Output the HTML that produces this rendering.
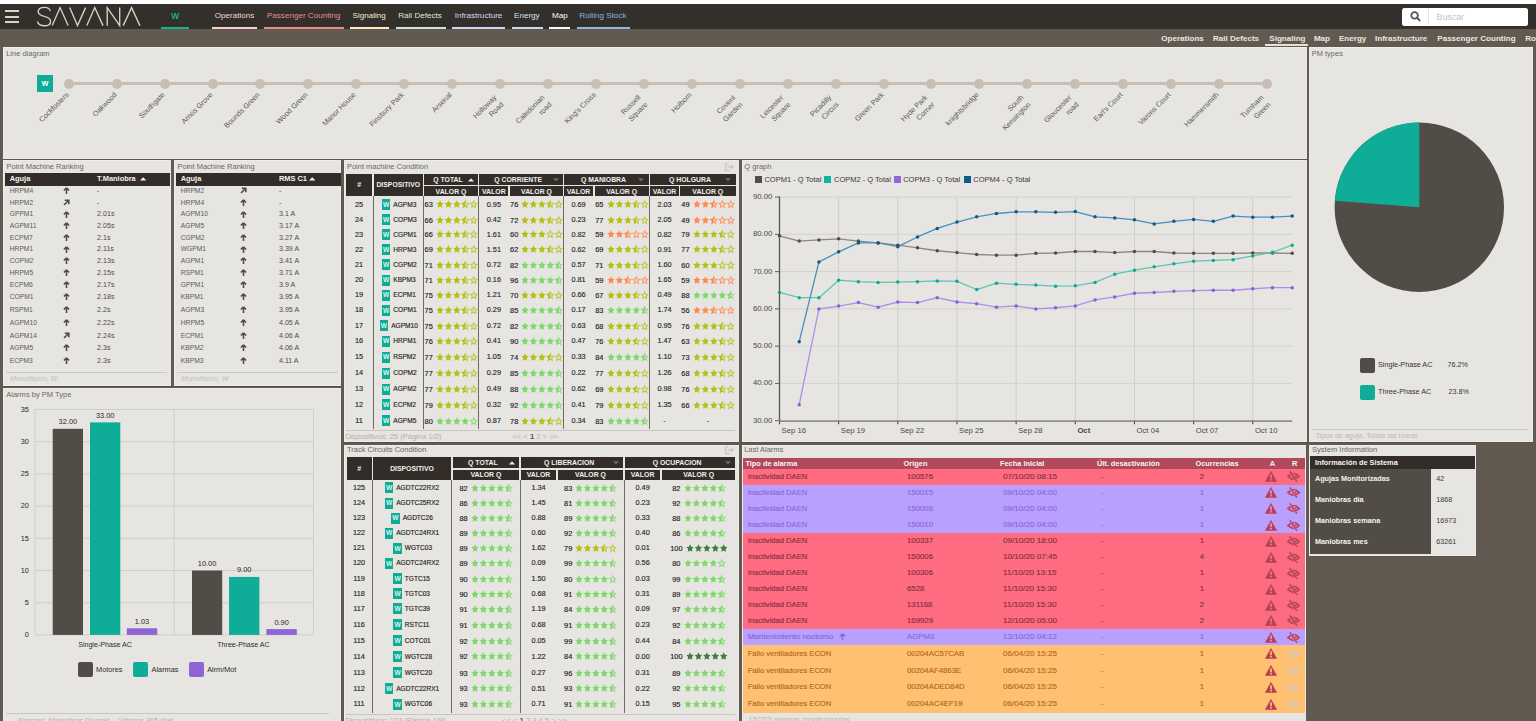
<!DOCTYPE html><html><head><meta charset="utf-8"><style>
html,body{margin:0;padding:0;}
body{width:1536px;height:721px;overflow:hidden;position:relative;background:#625a50;font-family:"Liberation Sans", sans-serif;}
.t{position:absolute;white-space:nowrap;}
.k{-webkit-text-stroke:0.15px currentColor;}
.r{position:absolute;}
.p{position:absolute;background:#e6e5e1;box-shadow:inset 1px 1px 0 #efeeea, inset -1px -1px 0 #ecebe7, 0 1px 0 #5b534a;overflow:hidden;}
svg{position:absolute;overflow:visible;}
</style></head><body>
<div class="r" style="left:0.00px;top:0.00px;width:1536.00px;height:4.00px;background:#ffffff;"></div>
<div class="r" style="left:0.00px;top:4.00px;width:1536.00px;height:25.00px;background:#332f2a;"></div>
<div class="r" style="left:5.00px;top:10.20px;width:14.00px;height:2.00px;background:#d9d3c9;"></div>
<div class="r" style="left:5.00px;top:15.60px;width:14.00px;height:2.00px;background:#d9d3c9;"></div>
<div class="r" style="left:5.00px;top:20.60px;width:14.00px;height:2.00px;background:#d9d3c9;"></div>
<svg style="left:0;top:0" width="160" height="30" viewBox="0 0 160 30">
<g fill="none" stroke="#d6d2ca" stroke-width="1.35" stroke-linejoin="miter" stroke-linecap="butt">
<path d="M50.3,11.2 C49.6,8.3 47.3,7.4 44.4,7.4 C40.6,7.4 38.2,9.3 38.2,11.8 C38.2,14.6 40.8,15.5 44.2,16.4 C48.4,17.5 50.6,18.6 50.6,21.4 C50.6,24.0 48.2,25.7 44.2,25.7 C40.6,25.7 38.2,24.1 37.4,21.5"/>
<path d="M52.2,25.6 L60.1,7.6 L68.1,25.6"/>
<path d="M69.7,7.6 L77.5,25.6 L85.6,7.6"/>
<path d="M86.8,25.6 L94.8,7.6 L103.0,25.6"/>
<path d="M107.2,25.8 L107.2,7.6 L119.7,25.6 L119.7,7.4"/>
<path d="M123.2,25.6 L131.6,7.6 L139.9,25.6"/>
</g></svg>
<div class="t" style="left:-24.80px;width:400px;text-align:center;top:10.60px;font-size:8.5px;line-height:10px;color:#12b294;font-weight:bold;">W</div>
<div class="r" style="left:161.40px;top:27.20px;width:27.50px;height:2.00px;background:#12b294;"></div>
<div class="t" style="left:214.70px;top:10.60px;font-size:8.1px;line-height:10px;color:#f2dada;font-weight:normal;">Operations</div>
<div class="r" style="left:211.90px;top:27.20px;width:45.30px;height:2.00px;background:#f6d0d0;"></div>
<div class="t" style="left:266.90px;top:10.60px;font-size:8.1px;line-height:10px;color:#ec8a8a;font-weight:normal;">Passenger Counting</div>
<div class="r" style="left:263.90px;top:27.20px;width:80.00px;height:2.00px;background:#ec8888;"></div>
<div class="t" style="left:352.50px;top:10.60px;font-size:8.1px;line-height:10px;color:#f2ebc4;font-weight:normal;">Signaling</div>
<div class="r" style="left:349.80px;top:27.20px;width:39.70px;height:2.00px;background:#fde9c2;"></div>
<div class="t" style="left:398.20px;top:10.60px;font-size:8.1px;line-height:10px;color:#d8ecd6;font-weight:normal;">Rail Defects</div>
<div class="r" style="left:396.00px;top:27.20px;width:49.60px;height:2.00px;background:#cfe7cf;"></div>
<div class="t" style="left:454.70px;top:10.60px;font-size:8.1px;line-height:10px;color:#dcd2f2;font-weight:normal;">Infrastructure</div>
<div class="r" style="left:451.60px;top:27.20px;width:53.40px;height:2.00px;background:#d6cdf0;"></div>
<div class="t" style="left:514.00px;top:10.60px;font-size:8.1px;line-height:10px;color:#d2e2f2;font-weight:normal;">Energy</div>
<div class="r" style="left:512.00px;top:27.20px;width:31.00px;height:2.00px;background:#c8dcf0;"></div>
<div class="t" style="left:551.90px;top:10.60px;font-size:8.1px;line-height:10px;color:#ffffff;font-weight:normal;">Map</div>
<div class="r" style="left:549.30px;top:27.20px;width:20.70px;height:2.00px;background:#f8f8f8;"></div>
<div class="t" style="left:579.20px;top:10.60px;font-size:8.1px;line-height:10px;color:#86b4e4;font-weight:normal;">Rolling Stock</div>
<div class="r" style="left:576.60px;top:27.20px;width:53.40px;height:2.00px;background:#8ab8e8;"></div>
<div class="r" style="left:1402.40px;top:7.50px;width:125.80px;height:18.40px;background:#ffffff;border-radius:2.5px;"></div>
<div class="r" style="left:1427.50px;top:8.00px;width:1.00px;height:17.40px;background:#e8e8e8;"></div>
<svg style="left:1408px;top:9px" width="16" height="16" viewBox="0 0 16 16">
<circle cx="6.6" cy="6.4" r="3.3" fill="none" stroke="#555" stroke-width="1.8"/>
<path d="M9.1,8.9 L11.6,11.4" stroke="#555" stroke-width="2" stroke-linecap="round"/></svg>
<div class="t" style="left:1436.60px;top:11.60px;font-size:8.8px;line-height:10px;color:#c4c4c4;font-weight:normal;">Buscar</div>
<div class="t" style="left:1161.30px;top:34.10px;font-size:8.05px;line-height:10px;color:#ebe7e0;font-weight:bold;">Operations</div>
<div class="t" style="left:1213.00px;top:34.10px;font-size:8.05px;line-height:10px;color:#ebe7e0;font-weight:bold;">Rail Defects</div>
<div class="t" style="left:1269.30px;top:34.10px;font-size:8.05px;line-height:10px;color:#ebe7e0;font-weight:bold;">Signaling</div>
<div class="t" style="left:1313.90px;top:34.10px;font-size:8.05px;line-height:10px;color:#ebe7e0;font-weight:bold;">Map</div>
<div class="t" style="left:1339.00px;top:34.10px;font-size:8.05px;line-height:10px;color:#ebe7e0;font-weight:bold;">Energy</div>
<div class="t" style="left:1375.00px;top:34.10px;font-size:8.05px;line-height:10px;color:#ebe7e0;font-weight:bold;">Infrastructure</div>
<div class="t" style="left:1437.30px;top:34.10px;font-size:8.05px;line-height:10px;color:#ebe7e0;font-weight:bold;">Passenger Counting</div>
<div class="t" style="left:1525.30px;top:34.10px;font-size:8.05px;line-height:10px;color:#ebe7e0;font-weight:bold;">Rolling Stock</div>
<div class="r" style="left:1265.40px;top:44.40px;width:42.50px;height:1.50px;background:#e6e2da;"></div>
<div class="p" style="left:3px;top:47px;width:1304px;height:112px;"></div>
<div class="p" style="left:1309px;top:47px;width:224px;height:395px;"></div>
<div class="p" style="left:3px;top:160px;width:168px;height:226px;"></div>
<div class="p" style="left:174px;top:160px;width:167px;height:226px;"></div>
<div class="p" style="left:344px;top:160px;width:395px;height:282px;"></div>
<div class="p" style="left:742px;top:160px;width:565px;height:282px;"></div>
<div class="p" style="left:3px;top:388px;width:338px;height:340px;"></div>
<div class="p" style="left:344px;top:445px;width:395px;height:290px;"></div>
<div class="p" style="left:742px;top:445px;width:564px;height:290px;"></div>
<div class="p" style="left:1309px;top:445px;width:167px;height:111px;"></div>
<div class="t" style="left:6.20px;top:48.50px;font-size:7.5px;line-height:10px;color:#6a6866;font-weight:normal;">Line diagram</div>
<div class="r" style="left:68.75px;top:82.40px;width:1198.25px;height:2.60px;background:#c9beb6;"></div>
<div class="r" style="left:63.75px;top:78.70px;width:10.00px;height:10.00px;background:#c9beb6;border-radius:50%;"></div>
<div class="t" style="left:-135.25px;top:91.20px;width:200px;text-align:right;font-size:7.3px;line-height:8.3px;color:#5a5855;transform-origin:100% 0;transform:rotate(-45deg);">Cockfosters</div>
<div class="r" style="left:111.68px;top:78.70px;width:10.00px;height:10.00px;background:#c9beb6;border-radius:50%;"></div>
<div class="t" style="left:-87.32px;top:91.20px;width:200px;text-align:right;font-size:7.3px;line-height:8.3px;color:#5a5855;transform-origin:100% 0;transform:rotate(-45deg);">Oakwood</div>
<div class="r" style="left:159.61px;top:78.70px;width:10.00px;height:10.00px;background:#c9beb6;border-radius:50%;"></div>
<div class="t" style="left:-39.39px;top:91.20px;width:200px;text-align:right;font-size:7.3px;line-height:8.3px;color:#5a5855;transform-origin:100% 0;transform:rotate(-45deg);">Southgate</div>
<div class="r" style="left:207.54px;top:78.70px;width:10.00px;height:10.00px;background:#c9beb6;border-radius:50%;"></div>
<div class="t" style="left:8.54px;top:91.20px;width:200px;text-align:right;font-size:7.3px;line-height:8.3px;color:#5a5855;transform-origin:100% 0;transform:rotate(-45deg);">Arnos Grove</div>
<div class="r" style="left:255.47px;top:78.70px;width:10.00px;height:10.00px;background:#c9beb6;border-radius:50%;"></div>
<div class="t" style="left:56.47px;top:91.20px;width:200px;text-align:right;font-size:7.3px;line-height:8.3px;color:#5a5855;transform-origin:100% 0;transform:rotate(-45deg);">Bounds Green</div>
<div class="r" style="left:303.40px;top:78.70px;width:10.00px;height:10.00px;background:#c9beb6;border-radius:50%;"></div>
<div class="t" style="left:104.40px;top:91.20px;width:200px;text-align:right;font-size:7.3px;line-height:8.3px;color:#5a5855;transform-origin:100% 0;transform:rotate(-45deg);">Wood Green</div>
<div class="r" style="left:351.33px;top:78.70px;width:10.00px;height:10.00px;background:#c9beb6;border-radius:50%;"></div>
<div class="t" style="left:152.33px;top:91.20px;width:200px;text-align:right;font-size:7.3px;line-height:8.3px;color:#5a5855;transform-origin:100% 0;transform:rotate(-45deg);">Manor House</div>
<div class="r" style="left:399.26px;top:78.70px;width:10.00px;height:10.00px;background:#c9beb6;border-radius:50%;"></div>
<div class="t" style="left:200.26px;top:91.20px;width:200px;text-align:right;font-size:7.3px;line-height:8.3px;color:#5a5855;transform-origin:100% 0;transform:rotate(-45deg);">Finsbury Park</div>
<div class="r" style="left:447.19px;top:78.70px;width:10.00px;height:10.00px;background:#c9beb6;border-radius:50%;"></div>
<div class="t" style="left:248.19px;top:91.20px;width:200px;text-align:right;font-size:7.3px;line-height:8.3px;color:#5a5855;transform-origin:100% 0;transform:rotate(-45deg);">Arsenal</div>
<div class="r" style="left:495.12px;top:78.70px;width:10.00px;height:10.00px;background:#c9beb6;border-radius:50%;"></div>
<div class="t" style="left:291.77px;top:92.65px;width:200px;text-align:right;font-size:7.3px;line-height:10.4px;color:#5a5855;transform-origin:100% 0;transform:rotate(-45deg);">Holloway<br>Road</div>
<div class="r" style="left:543.05px;top:78.70px;width:10.00px;height:10.00px;background:#c9beb6;border-radius:50%;"></div>
<div class="t" style="left:339.70px;top:92.65px;width:200px;text-align:right;font-size:7.3px;line-height:10.4px;color:#5a5855;transform-origin:100% 0;transform:rotate(-45deg);">Caledonian<br>road</div>
<div class="r" style="left:590.98px;top:78.70px;width:10.00px;height:10.00px;background:#c9beb6;border-radius:50%;"></div>
<div class="t" style="left:391.98px;top:91.20px;width:200px;text-align:right;font-size:7.3px;line-height:8.3px;color:#5a5855;transform-origin:100% 0;transform:rotate(-45deg);">King's Cross</div>
<div class="r" style="left:638.91px;top:78.70px;width:10.00px;height:10.00px;background:#c9beb6;border-radius:50%;"></div>
<div class="t" style="left:435.56px;top:92.65px;width:200px;text-align:right;font-size:7.3px;line-height:10.4px;color:#5a5855;transform-origin:100% 0;transform:rotate(-45deg);">Russell<br>Square</div>
<div class="r" style="left:686.84px;top:78.70px;width:10.00px;height:10.00px;background:#c9beb6;border-radius:50%;"></div>
<div class="t" style="left:487.84px;top:91.20px;width:200px;text-align:right;font-size:7.3px;line-height:8.3px;color:#5a5855;transform-origin:100% 0;transform:rotate(-45deg);">Holborn</div>
<div class="r" style="left:734.77px;top:78.70px;width:10.00px;height:10.00px;background:#c9beb6;border-radius:50%;"></div>
<div class="t" style="left:531.42px;top:92.65px;width:200px;text-align:right;font-size:7.3px;line-height:10.4px;color:#5a5855;transform-origin:100% 0;transform:rotate(-45deg);">Covent<br>Garden</div>
<div class="r" style="left:782.70px;top:78.70px;width:10.00px;height:10.00px;background:#c9beb6;border-radius:50%;"></div>
<div class="t" style="left:579.35px;top:92.65px;width:200px;text-align:right;font-size:7.3px;line-height:10.4px;color:#5a5855;transform-origin:100% 0;transform:rotate(-45deg);">Leicester<br>Square</div>
<div class="r" style="left:830.63px;top:78.70px;width:10.00px;height:10.00px;background:#c9beb6;border-radius:50%;"></div>
<div class="t" style="left:627.28px;top:92.65px;width:200px;text-align:right;font-size:7.3px;line-height:10.4px;color:#5a5855;transform-origin:100% 0;transform:rotate(-45deg);">Picadilly<br>Circus</div>
<div class="r" style="left:878.56px;top:78.70px;width:10.00px;height:10.00px;background:#c9beb6;border-radius:50%;"></div>
<div class="t" style="left:679.56px;top:91.20px;width:200px;text-align:right;font-size:7.3px;line-height:8.3px;color:#5a5855;transform-origin:100% 0;transform:rotate(-45deg);">Green Park</div>
<div class="r" style="left:926.49px;top:78.70px;width:10.00px;height:10.00px;background:#c9beb6;border-radius:50%;"></div>
<div class="t" style="left:723.14px;top:92.65px;width:200px;text-align:right;font-size:7.3px;line-height:10.4px;color:#5a5855;transform-origin:100% 0;transform:rotate(-45deg);">Hyde Park<br>Corner</div>
<div class="r" style="left:974.42px;top:78.70px;width:10.00px;height:10.00px;background:#c9beb6;border-radius:50%;"></div>
<div class="t" style="left:775.42px;top:91.20px;width:200px;text-align:right;font-size:7.3px;line-height:8.3px;color:#5a5855;transform-origin:100% 0;transform:rotate(-45deg);">knightsbridge</div>
<div class="r" style="left:1022.35px;top:78.70px;width:10.00px;height:10.00px;background:#c9beb6;border-radius:50%;"></div>
<div class="t" style="left:819.00px;top:92.65px;width:200px;text-align:right;font-size:7.3px;line-height:10.4px;color:#5a5855;transform-origin:100% 0;transform:rotate(-45deg);">South<br>Kensington</div>
<div class="r" style="left:1070.28px;top:78.70px;width:10.00px;height:10.00px;background:#c9beb6;border-radius:50%;"></div>
<div class="t" style="left:866.93px;top:92.65px;width:200px;text-align:right;font-size:7.3px;line-height:10.4px;color:#5a5855;transform-origin:100% 0;transform:rotate(-45deg);">Gloucester<br>road</div>
<div class="r" style="left:1118.21px;top:78.70px;width:10.00px;height:10.00px;background:#c9beb6;border-radius:50%;"></div>
<div class="t" style="left:919.21px;top:91.20px;width:200px;text-align:right;font-size:7.3px;line-height:8.3px;color:#5a5855;transform-origin:100% 0;transform:rotate(-45deg);">Earl's Court</div>
<div class="r" style="left:1166.14px;top:78.70px;width:10.00px;height:10.00px;background:#c9beb6;border-radius:50%;"></div>
<div class="t" style="left:967.14px;top:91.20px;width:200px;text-align:right;font-size:7.3px;line-height:8.3px;color:#5a5855;transform-origin:100% 0;transform:rotate(-45deg);">Varons Court</div>
<div class="r" style="left:1214.07px;top:78.70px;width:10.00px;height:10.00px;background:#c9beb6;border-radius:50%;"></div>
<div class="t" style="left:1015.07px;top:91.20px;width:200px;text-align:right;font-size:7.3px;line-height:8.3px;color:#5a5855;transform-origin:100% 0;transform:rotate(-45deg);">Hammersmith</div>
<div class="r" style="left:1262.00px;top:78.70px;width:10.00px;height:10.00px;background:#c9beb6;border-radius:50%;"></div>
<div class="t" style="left:1058.65px;top:92.65px;width:200px;text-align:right;font-size:7.3px;line-height:10.4px;color:#5a5855;transform-origin:100% 0;transform:rotate(-45deg);">Turnham<br>Green</div>
<div class="r" style="left:37.00px;top:74.60px;width:16.00px;height:17.00px;background:#10ab95;"></div>
<div class="t" style="left:-155.00px;width:400px;text-align:center;top:78.30px;font-size:8.5px;line-height:10px;color:#ffffff;font-weight:bold;">w</div>
<div class="t" style="left:1311.70px;top:48.70px;font-size:7.5px;line-height:10px;color:#6a6866;font-weight:normal;">PM types</div>
<svg style="left:0;top:0" width="1536" height="721"><circle cx="1419.3" cy="207.2" r="84.7" fill="#524c46"/><path d="M1419.3,207.2 L1419.3,122.49999999999999 A84.7,84.7 0 0 0 1334.84,200.82 Z" fill="#0fac97"/></svg>
<div class="r" style="left:1360.30px;top:357.50px;width:15.00px;height:15.00px;background:#524c46;border-radius:2px;"></div>
<div class="r" style="left:1360.30px;top:384.60px;width:15.00px;height:15.00px;background:#0fac97;border-radius:2px;"></div>
<div class="t" style="left:1378.00px;top:359.80px;font-size:7.2px;line-height:10px;color:#333;font-weight:normal;">Single-Phase AC</div>
<div class="t" style="left:1447.50px;top:359.80px;font-size:7.2px;line-height:10px;color:#333;font-weight:normal;">76.2%</div>
<div class="t" style="left:1378.00px;top:386.90px;font-size:7.2px;line-height:10px;color:#333;font-weight:normal;">Three-Phase AC</div>
<div class="t" style="left:1448.50px;top:386.90px;font-size:7.2px;line-height:10px;color:#333;font-weight:normal;">23.8%</div>
<div class="r" style="left:1312.00px;top:428.60px;width:216.00px;height:1.00px;background:#c9c7c2;"></div>
<div class="t" style="left:1315.50px;top:431.30px;font-size:7.2px;line-height:10px;color:#bcb9b4;font-weight:normal;">Tipos de aguja, Todas las líneas</div>
<div class="t" style="left:6.50px;top:161.90px;font-size:7.5px;line-height:10px;color:#6a6866;font-weight:normal;">Point Machine Ranking</div>
<div class="r" style="left:5.00px;top:173.10px;width:165.00px;height:12.50px;background:#322d28;"></div>
<div class="t" style="left:9.75px;top:174.30px;font-size:7.4px;line-height:10px;color:#f4f2ee;font-weight:bold;">Aguja</div>
<div class="t" style="left:97.10px;top:174.30px;font-size:7.4px;line-height:10px;color:#f4f2ee;font-weight:bold;">T.Maniobra</div>
<div class="t" style="left:9.75px;top:185.60px;font-size:6.7px;line-height:10px;color:#5c5a57;font-weight:normal;">HRPM4</div>
<div style="position:absolute;left:62.50px;top:186.80px;"><svg width="7" height="8" viewBox="0 0 7 8" style="position:static;display:block"><path d="M3.5,0.9 L6.1,3.5 M3.5,0.9 L0.9,3.5 M3.5,1.1 L3.5,6.9" stroke="#504c48" stroke-width="1.55" fill="none"/></svg></div>
<div class="t" style="left:97.10px;top:185.60px;font-size:7.1px;line-height:10px;color:#4e4c49;font-weight:normal;">-</div>
<div class="t" style="left:9.75px;top:197.50px;font-size:6.7px;line-height:10px;color:#5c5a57;font-weight:normal;">HRPM2</div>
<div style="position:absolute;left:62.50px;top:198.70px;"><svg width="7" height="7" viewBox="0 0 7 7" style="position:static;display:block"><path d="M1,6 L5.8,1.2 M1.8,1.2 L5.8,1.2 L5.8,5.2" stroke="#4d4a46" stroke-width="1.6" fill="none"/></svg></div>
<div class="t" style="left:97.10px;top:197.50px;font-size:7.1px;line-height:10px;color:#4e4c49;font-weight:normal;">-</div>
<div class="t" style="left:9.75px;top:209.40px;font-size:6.7px;line-height:10px;color:#5c5a57;font-weight:normal;">GPPM1</div>
<div style="position:absolute;left:62.50px;top:210.60px;"><svg width="7" height="8" viewBox="0 0 7 8" style="position:static;display:block"><path d="M3.5,0.9 L6.1,3.5 M3.5,0.9 L0.9,3.5 M3.5,1.1 L3.5,6.9" stroke="#504c48" stroke-width="1.55" fill="none"/></svg></div>
<div class="t" style="left:97.10px;top:209.40px;font-size:7.1px;line-height:10px;color:#4e4c49;font-weight:normal;">2.01s</div>
<div class="t" style="left:9.75px;top:220.90px;font-size:6.7px;line-height:10px;color:#5c5a57;font-weight:normal;">AGPM11</div>
<div style="position:absolute;left:62.50px;top:222.10px;"><svg width="7" height="8" viewBox="0 0 7 8" style="position:static;display:block"><path d="M3.5,0.9 L6.1,3.5 M3.5,0.9 L0.9,3.5 M3.5,1.1 L3.5,6.9" stroke="#504c48" stroke-width="1.55" fill="none"/></svg></div>
<div class="t" style="left:97.10px;top:220.90px;font-size:7.1px;line-height:10px;color:#4e4c49;font-weight:normal;">2.05s</div>
<div class="t" style="left:9.75px;top:232.50px;font-size:6.7px;line-height:10px;color:#5c5a57;font-weight:normal;">ECPM7</div>
<div style="position:absolute;left:62.50px;top:233.70px;"><svg width="7" height="8" viewBox="0 0 7 8" style="position:static;display:block"><path d="M3.5,0.9 L6.1,3.5 M3.5,0.9 L0.9,3.5 M3.5,1.1 L3.5,6.9" stroke="#504c48" stroke-width="1.55" fill="none"/></svg></div>
<div class="t" style="left:97.10px;top:232.50px;font-size:7.1px;line-height:10px;color:#4e4c49;font-weight:normal;">2.1s</div>
<div class="t" style="left:9.75px;top:244.40px;font-size:6.7px;line-height:10px;color:#5c5a57;font-weight:normal;">HRPM1</div>
<div style="position:absolute;left:62.50px;top:245.60px;"><svg width="7" height="8" viewBox="0 0 7 8" style="position:static;display:block"><path d="M3.5,0.9 L6.1,3.5 M3.5,0.9 L0.9,3.5 M3.5,1.1 L3.5,6.9" stroke="#504c48" stroke-width="1.55" fill="none"/></svg></div>
<div class="t" style="left:97.10px;top:244.40px;font-size:7.1px;line-height:10px;color:#4e4c49;font-weight:normal;">2.11s</div>
<div class="t" style="left:9.75px;top:256.25px;font-size:6.7px;line-height:10px;color:#5c5a57;font-weight:normal;">COPM2</div>
<div style="position:absolute;left:62.50px;top:257.45px;"><svg width="7" height="8" viewBox="0 0 7 8" style="position:static;display:block"><path d="M3.5,0.9 L6.1,3.5 M3.5,0.9 L0.9,3.5 M3.5,1.1 L3.5,6.9" stroke="#504c48" stroke-width="1.55" fill="none"/></svg></div>
<div class="t" style="left:97.10px;top:256.25px;font-size:7.1px;line-height:10px;color:#4e4c49;font-weight:normal;">2.13s</div>
<div class="t" style="left:9.75px;top:268.10px;font-size:6.7px;line-height:10px;color:#5c5a57;font-weight:normal;">HRPM5</div>
<div style="position:absolute;left:62.50px;top:269.30px;"><svg width="7" height="8" viewBox="0 0 7 8" style="position:static;display:block"><path d="M3.5,0.9 L6.1,3.5 M3.5,0.9 L0.9,3.5 M3.5,1.1 L3.5,6.9" stroke="#504c48" stroke-width="1.55" fill="none"/></svg></div>
<div class="t" style="left:97.10px;top:268.10px;font-size:7.1px;line-height:10px;color:#4e4c49;font-weight:normal;">2.15s</div>
<div class="t" style="left:9.75px;top:279.75px;font-size:6.7px;line-height:10px;color:#5c5a57;font-weight:normal;">ECPM6</div>
<div style="position:absolute;left:62.50px;top:280.95px;"><svg width="7" height="8" viewBox="0 0 7 8" style="position:static;display:block"><path d="M3.5,0.9 L6.1,3.5 M3.5,0.9 L0.9,3.5 M3.5,1.1 L3.5,6.9" stroke="#504c48" stroke-width="1.55" fill="none"/></svg></div>
<div class="t" style="left:97.10px;top:279.75px;font-size:7.1px;line-height:10px;color:#4e4c49;font-weight:normal;">2.17s</div>
<div class="t" style="left:9.75px;top:292.25px;font-size:6.7px;line-height:10px;color:#5c5a57;font-weight:normal;">COPM1</div>
<div style="position:absolute;left:62.50px;top:293.45px;"><svg width="7" height="8" viewBox="0 0 7 8" style="position:static;display:block"><path d="M3.5,0.9 L6.1,3.5 M3.5,0.9 L0.9,3.5 M3.5,1.1 L3.5,6.9" stroke="#504c48" stroke-width="1.55" fill="none"/></svg></div>
<div class="t" style="left:97.10px;top:292.25px;font-size:7.1px;line-height:10px;color:#4e4c49;font-weight:normal;">2.18s</div>
<div class="t" style="left:9.75px;top:305.00px;font-size:6.7px;line-height:10px;color:#5c5a57;font-weight:normal;">RSPM1</div>
<div style="position:absolute;left:62.50px;top:306.20px;"><svg width="7" height="8" viewBox="0 0 7 8" style="position:static;display:block"><path d="M3.5,0.9 L6.1,3.5 M3.5,0.9 L0.9,3.5 M3.5,1.1 L3.5,6.9" stroke="#504c48" stroke-width="1.55" fill="none"/></svg></div>
<div class="t" style="left:97.10px;top:305.00px;font-size:7.1px;line-height:10px;color:#4e4c49;font-weight:normal;">2.2s</div>
<div class="t" style="left:9.75px;top:317.60px;font-size:6.7px;line-height:10px;color:#5c5a57;font-weight:normal;">AGPM10</div>
<div style="position:absolute;left:62.50px;top:318.80px;"><svg width="7" height="8" viewBox="0 0 7 8" style="position:static;display:block"><path d="M3.5,0.9 L6.1,3.5 M3.5,0.9 L0.9,3.5 M3.5,1.1 L3.5,6.9" stroke="#504c48" stroke-width="1.55" fill="none"/></svg></div>
<div class="t" style="left:97.10px;top:317.60px;font-size:7.1px;line-height:10px;color:#4e4c49;font-weight:normal;">2.22s</div>
<div class="t" style="left:9.75px;top:330.50px;font-size:6.7px;line-height:10px;color:#5c5a57;font-weight:normal;">AGPM14</div>
<div style="position:absolute;left:62.50px;top:331.70px;"><svg width="7" height="7" viewBox="0 0 7 7" style="position:static;display:block"><path d="M1,6 L5.8,1.2 M1.8,1.2 L5.8,1.2 L5.8,5.2" stroke="#4d4a46" stroke-width="1.6" fill="none"/></svg></div>
<div class="t" style="left:97.10px;top:330.50px;font-size:7.1px;line-height:10px;color:#4e4c49;font-weight:normal;">2.24s</div>
<div class="t" style="left:9.75px;top:343.00px;font-size:6.7px;line-height:10px;color:#5c5a57;font-weight:normal;">AGPM5</div>
<div style="position:absolute;left:62.50px;top:344.20px;"><svg width="7" height="8" viewBox="0 0 7 8" style="position:static;display:block"><path d="M3.5,0.9 L6.1,3.5 M3.5,0.9 L0.9,3.5 M3.5,1.1 L3.5,6.9" stroke="#504c48" stroke-width="1.55" fill="none"/></svg></div>
<div class="t" style="left:97.10px;top:343.00px;font-size:7.1px;line-height:10px;color:#4e4c49;font-weight:normal;">2.3s</div>
<div class="t" style="left:9.75px;top:355.60px;font-size:6.7px;line-height:10px;color:#5c5a57;font-weight:normal;">ECPM3</div>
<div style="position:absolute;left:62.50px;top:356.80px;"><svg width="7" height="8" viewBox="0 0 7 8" style="position:static;display:block"><path d="M3.5,0.9 L6.1,3.5 M3.5,0.9 L0.9,3.5 M3.5,1.1 L3.5,6.9" stroke="#504c48" stroke-width="1.55" fill="none"/></svg></div>
<div class="t" style="left:97.10px;top:355.60px;font-size:7.1px;line-height:10px;color:#4e4c49;font-weight:normal;">2.3s</div>
<div class="r" style="left:6.00px;top:372.00px;width:161.00px;height:1.00px;background:#c9c7c2;"></div>
<div class="t" style="left:10.00px;top:374.00px;font-size:7.2px;line-height:10px;color:#c2bfba;font-weight:normal;"><i>Monofásico, W</i></div>
<div class="t" style="left:177.50px;top:161.90px;font-size:7.5px;line-height:10px;color:#6a6866;font-weight:normal;">Point Machine Ranking</div>
<div class="r" style="left:176.00px;top:173.10px;width:164.80px;height:12.50px;background:#322d28;"></div>
<div class="t" style="left:180.75px;top:174.30px;font-size:7.4px;line-height:10px;color:#f4f2ee;font-weight:bold;">Aguja</div>
<div class="t" style="left:279.00px;top:174.30px;font-size:7.4px;line-height:10px;color:#f4f2ee;font-weight:bold;">RMS C1</div>
<div class="t" style="left:180.75px;top:185.60px;font-size:6.7px;line-height:10px;color:#5c5a57;font-weight:normal;">HRPM2</div>
<div style="position:absolute;left:240.25px;top:186.80px;"><svg width="7" height="7" viewBox="0 0 7 7" style="position:static;display:block"><path d="M1,6 L5.8,1.2 M1.8,1.2 L5.8,1.2 L5.8,5.2" stroke="#4d4a46" stroke-width="1.6" fill="none"/></svg></div>
<div class="t" style="left:279.00px;top:185.60px;font-size:7.1px;line-height:10px;color:#4e4c49;font-weight:normal;">-</div>
<div class="t" style="left:180.75px;top:197.50px;font-size:6.7px;line-height:10px;color:#5c5a57;font-weight:normal;">HRPM4</div>
<div style="position:absolute;left:240.25px;top:198.70px;"><svg width="7" height="8" viewBox="0 0 7 8" style="position:static;display:block"><path d="M3.5,0.9 L6.1,3.5 M3.5,0.9 L0.9,3.5 M3.5,1.1 L3.5,6.9" stroke="#504c48" stroke-width="1.55" fill="none"/></svg></div>
<div class="t" style="left:279.00px;top:197.50px;font-size:7.1px;line-height:10px;color:#4e4c49;font-weight:normal;">-</div>
<div class="t" style="left:180.75px;top:209.40px;font-size:6.7px;line-height:10px;color:#5c5a57;font-weight:normal;">AGPM10</div>
<div style="position:absolute;left:240.25px;top:210.60px;"><svg width="7" height="8" viewBox="0 0 7 8" style="position:static;display:block"><path d="M3.5,0.9 L6.1,3.5 M3.5,0.9 L0.9,3.5 M3.5,1.1 L3.5,6.9" stroke="#504c48" stroke-width="1.55" fill="none"/></svg></div>
<div class="t" style="left:279.00px;top:209.40px;font-size:7.1px;line-height:10px;color:#4e4c49;font-weight:normal;">3.1 A</div>
<div class="t" style="left:180.75px;top:220.90px;font-size:6.7px;line-height:10px;color:#5c5a57;font-weight:normal;">AGPM5</div>
<div style="position:absolute;left:240.25px;top:222.10px;"><svg width="7" height="8" viewBox="0 0 7 8" style="position:static;display:block"><path d="M3.5,0.9 L6.1,3.5 M3.5,0.9 L0.9,3.5 M3.5,1.1 L3.5,6.9" stroke="#504c48" stroke-width="1.55" fill="none"/></svg></div>
<div class="t" style="left:279.00px;top:220.90px;font-size:7.1px;line-height:10px;color:#4e4c49;font-weight:normal;">3.17 A</div>
<div class="t" style="left:180.75px;top:232.50px;font-size:6.7px;line-height:10px;color:#5c5a57;font-weight:normal;">CGPM2</div>
<div style="position:absolute;left:240.25px;top:233.70px;"><svg width="7" height="8" viewBox="0 0 7 8" style="position:static;display:block"><path d="M3.5,0.9 L6.1,3.5 M3.5,0.9 L0.9,3.5 M3.5,1.1 L3.5,6.9" stroke="#504c48" stroke-width="1.55" fill="none"/></svg></div>
<div class="t" style="left:279.00px;top:232.50px;font-size:7.1px;line-height:10px;color:#4e4c49;font-weight:normal;">3.27 A</div>
<div class="t" style="left:180.75px;top:244.40px;font-size:6.7px;line-height:10px;color:#5c5a57;font-weight:normal;">WGPM1</div>
<div style="position:absolute;left:240.25px;top:245.60px;"><svg width="7" height="8" viewBox="0 0 7 8" style="position:static;display:block"><path d="M3.5,0.9 L6.1,3.5 M3.5,0.9 L0.9,3.5 M3.5,1.1 L3.5,6.9" stroke="#504c48" stroke-width="1.55" fill="none"/></svg></div>
<div class="t" style="left:279.00px;top:244.40px;font-size:7.1px;line-height:10px;color:#4e4c49;font-weight:normal;">3.39 A</div>
<div class="t" style="left:180.75px;top:256.25px;font-size:6.7px;line-height:10px;color:#5c5a57;font-weight:normal;">AGPM1</div>
<div style="position:absolute;left:240.25px;top:257.45px;"><svg width="7" height="8" viewBox="0 0 7 8" style="position:static;display:block"><path d="M3.5,0.9 L6.1,3.5 M3.5,0.9 L0.9,3.5 M3.5,1.1 L3.5,6.9" stroke="#504c48" stroke-width="1.55" fill="none"/></svg></div>
<div class="t" style="left:279.00px;top:256.25px;font-size:7.1px;line-height:10px;color:#4e4c49;font-weight:normal;">3.41 A</div>
<div class="t" style="left:180.75px;top:268.10px;font-size:6.7px;line-height:10px;color:#5c5a57;font-weight:normal;">RSPM1</div>
<div style="position:absolute;left:240.25px;top:269.30px;"><svg width="7" height="8" viewBox="0 0 7 8" style="position:static;display:block"><path d="M3.5,0.9 L6.1,3.5 M3.5,0.9 L0.9,3.5 M3.5,1.1 L3.5,6.9" stroke="#504c48" stroke-width="1.55" fill="none"/></svg></div>
<div class="t" style="left:279.00px;top:268.10px;font-size:7.1px;line-height:10px;color:#4e4c49;font-weight:normal;">3.71 A</div>
<div class="t" style="left:180.75px;top:279.75px;font-size:6.7px;line-height:10px;color:#5c5a57;font-weight:normal;">GPPM1</div>
<div style="position:absolute;left:240.25px;top:280.95px;"><svg width="7" height="8" viewBox="0 0 7 8" style="position:static;display:block"><path d="M3.5,0.9 L6.1,3.5 M3.5,0.9 L0.9,3.5 M3.5,1.1 L3.5,6.9" stroke="#504c48" stroke-width="1.55" fill="none"/></svg></div>
<div class="t" style="left:279.00px;top:279.75px;font-size:7.1px;line-height:10px;color:#4e4c49;font-weight:normal;">3.9 A</div>
<div class="t" style="left:180.75px;top:292.25px;font-size:6.7px;line-height:10px;color:#5c5a57;font-weight:normal;">KBPM1</div>
<div style="position:absolute;left:240.25px;top:293.45px;"><svg width="7" height="8" viewBox="0 0 7 8" style="position:static;display:block"><path d="M3.5,0.9 L6.1,3.5 M3.5,0.9 L0.9,3.5 M3.5,1.1 L3.5,6.9" stroke="#504c48" stroke-width="1.55" fill="none"/></svg></div>
<div class="t" style="left:279.00px;top:292.25px;font-size:7.1px;line-height:10px;color:#4e4c49;font-weight:normal;">3.95 A</div>
<div class="t" style="left:180.75px;top:305.00px;font-size:6.7px;line-height:10px;color:#5c5a57;font-weight:normal;">AGPM3</div>
<div style="position:absolute;left:240.25px;top:306.20px;"><svg width="7" height="8" viewBox="0 0 7 8" style="position:static;display:block"><path d="M3.5,0.9 L6.1,3.5 M3.5,0.9 L0.9,3.5 M3.5,1.1 L3.5,6.9" stroke="#504c48" stroke-width="1.55" fill="none"/></svg></div>
<div class="t" style="left:279.00px;top:305.00px;font-size:7.1px;line-height:10px;color:#4e4c49;font-weight:normal;">3.95 A</div>
<div class="t" style="left:180.75px;top:317.60px;font-size:6.7px;line-height:10px;color:#5c5a57;font-weight:normal;">HRPM5</div>
<div style="position:absolute;left:240.25px;top:318.80px;"><svg width="7" height="8" viewBox="0 0 7 8" style="position:static;display:block"><path d="M3.5,0.9 L6.1,3.5 M3.5,0.9 L0.9,3.5 M3.5,1.1 L3.5,6.9" stroke="#504c48" stroke-width="1.55" fill="none"/></svg></div>
<div class="t" style="left:279.00px;top:317.60px;font-size:7.1px;line-height:10px;color:#4e4c49;font-weight:normal;">4.05 A</div>
<div class="t" style="left:180.75px;top:330.50px;font-size:6.7px;line-height:10px;color:#5c5a57;font-weight:normal;">ECPM1</div>
<div style="position:absolute;left:240.25px;top:331.70px;"><svg width="7" height="8" viewBox="0 0 7 8" style="position:static;display:block"><path d="M3.5,0.9 L6.1,3.5 M3.5,0.9 L0.9,3.5 M3.5,1.1 L3.5,6.9" stroke="#504c48" stroke-width="1.55" fill="none"/></svg></div>
<div class="t" style="left:279.00px;top:330.50px;font-size:7.1px;line-height:10px;color:#4e4c49;font-weight:normal;">4.06 A</div>
<div class="t" style="left:180.75px;top:343.00px;font-size:6.7px;line-height:10px;color:#5c5a57;font-weight:normal;">KBPM2</div>
<div style="position:absolute;left:240.25px;top:344.20px;"><svg width="7" height="8" viewBox="0 0 7 8" style="position:static;display:block"><path d="M3.5,0.9 L6.1,3.5 M3.5,0.9 L0.9,3.5 M3.5,1.1 L3.5,6.9" stroke="#504c48" stroke-width="1.55" fill="none"/></svg></div>
<div class="t" style="left:279.00px;top:343.00px;font-size:7.1px;line-height:10px;color:#4e4c49;font-weight:normal;">4.06 A</div>
<div class="t" style="left:180.75px;top:355.60px;font-size:6.7px;line-height:10px;color:#5c5a57;font-weight:normal;">KBPM3</div>
<div style="position:absolute;left:240.25px;top:356.80px;"><svg width="7" height="8" viewBox="0 0 7 8" style="position:static;display:block"><path d="M3.5,0.9 L6.1,3.5 M3.5,0.9 L0.9,3.5 M3.5,1.1 L3.5,6.9" stroke="#504c48" stroke-width="1.55" fill="none"/></svg></div>
<div class="t" style="left:279.00px;top:355.60px;font-size:7.1px;line-height:10px;color:#4e4c49;font-weight:normal;">4.11 A</div>
<div class="r" style="left:177.00px;top:372.00px;width:161.00px;height:1.00px;background:#c9c7c2;"></div>
<div class="t" style="left:181.00px;top:374.00px;font-size:7.2px;line-height:10px;color:#c2bfba;font-weight:normal;"><i>Monofásico, W</i></div>
<svg style="left:140px;top:177px" width="7" height="4" viewBox="0 0 7 4"><path d="M0,3.6 L3.2,0.2 L6.4,3.6Z" fill="#f4f2ee"/></svg>
<svg style="left:308.5px;top:177px" width="7" height="4" viewBox="0 0 7 4"><path d="M0,3.6 L3.2,0.2 L6.4,3.6Z" fill="#f4f2ee"/></svg>
<svg width="0" height="0" style="position:absolute"><defs>
<symbol id="sf" viewBox="0 0 8 8" overflow="visible"><polygon points="4.00,0.18 5.15,2.66 7.71,3.06 5.85,4.99 6.29,7.73 4.00,6.44 1.71,7.73 2.15,4.99 0.29,3.06 2.85,2.66" fill="currentColor"/></symbol>
<symbol id="se" viewBox="0 0 8 8" overflow="visible"><polygon points="4.00,0.92 4.91,3.11 7.14,3.36 5.47,4.96 5.94,7.31 4.00,6.11 2.06,7.31 2.53,4.96 0.86,3.36 3.09,3.11" fill="none" stroke="currentColor" stroke-width="1.1" opacity="0.8"/></symbol>
<clipPath id="hc"><rect x="-1" y="-1" width="5" height="10"/></clipPath>
<symbol id="sh" viewBox="0 0 8 8" overflow="visible"><polygon points="4.00,0.92 4.91,3.11 7.14,3.36 5.47,4.96 5.94,7.31 4.00,6.11 2.06,7.31 2.53,4.96 0.86,3.36 3.09,3.11" fill="none" stroke="currentColor" stroke-width="1.1" opacity="0.8"/><polygon points="4.00,0.18 5.15,2.66 7.71,3.06 5.85,4.99 6.29,7.73 4.00,6.44 1.71,7.73 2.15,4.99 0.29,3.06 2.85,2.66" fill="currentColor" clip-path="url(#hc)"/></symbol>
</defs></svg>
<div class="t" style="left:346.90px;top:162.10px;font-size:7.5px;line-height:10px;color:#6a6866;font-weight:normal;">Point machine Condition</div>
<svg style="left:724.5px;top:163px" width="9" height="8" viewBox="0 0 9 8"><path d="M0.5,0.5 L0.5,7.5 L5,7.5 M0.5,0.5 L3.5,0.5 M2.2,4 L8.2,4 M6.4,2.2 L8.2,4 L6.4,5.8" stroke="#d2c6c2" stroke-width="1.3" fill="none"/></svg>
<div class="r" style="left:346.30px;top:174.10px;width:25.60px;height:22.10px;background:#322d28;"></div>
<div class="t" style="left:159.10px;width:400px;text-align:center;top:180.35px;font-size:7px;line-height:10px;color:#f2f0ec;font-weight:bold;">#</div>
<div class="r" style="left:373.90px;top:174.10px;width:48.80px;height:22.10px;background:#322d28;"></div>
<div class="t" style="left:198.30px;width:400px;text-align:center;top:180.35px;font-size:6.85px;line-height:10px;color:#f2f0ec;font-weight:bold;">DISPOSITIVO</div>
<div class="r" style="left:424.00px;top:174.10px;width:54.00px;height:11.10px;background:#322d28;"></div>
<div class="t" style="left:248.00px;width:400px;text-align:center;top:174.85px;font-size:6.9px;line-height:10px;color:#f2f0ec;font-weight:bold;">Q TOTAL</div>
<svg style="left:467.50px;top:177.85px" width="6" height="4" viewBox="0 0 6 4"><path d="M0,3.6 L3,0.3 L6,3.6Z" fill="#f2f0ec"/></svg>
<div class="r" style="left:479.30px;top:174.10px;width:83.70px;height:11.10px;background:#322d28;"></div>
<div class="t" style="left:318.15px;width:400px;text-align:center;top:174.85px;font-size:6.9px;line-height:10px;color:#f2f0ec;font-weight:bold;">Q CORRIENTE</div>
<svg style="left:552.50px;top:178.05px" width="6" height="4" viewBox="0 0 6 4"><path d="M0,0.3 L3,3.6 L6,0.3Z" fill="#6e6963"/></svg>
<div class="r" style="left:564.30px;top:174.10px;width:84.40px;height:11.10px;background:#322d28;"></div>
<div class="t" style="left:403.50px;width:400px;text-align:center;top:174.85px;font-size:6.9px;line-height:10px;color:#f2f0ec;font-weight:bold;">Q MANIOBRA</div>
<svg style="left:638.20px;top:178.05px" width="6" height="4" viewBox="0 0 6 4"><path d="M0,0.3 L3,3.6 L6,0.3Z" fill="#6e6963"/></svg>
<div class="r" style="left:650.30px;top:174.10px;width:85.30px;height:11.10px;background:#322d28;"></div>
<div class="t" style="left:489.95px;width:400px;text-align:center;top:174.85px;font-size:6.9px;line-height:10px;color:#f2f0ec;font-weight:bold;">Q HOLGURA</div>
<svg style="left:725.10px;top:178.05px" width="6" height="4" viewBox="0 0 6 4"><path d="M0,0.3 L3,3.6 L6,0.3Z" fill="#6e6963"/></svg>
<div class="r" style="left:424.00px;top:186.40px;width:54.00px;height:9.80px;background:#322d28;"></div>
<div class="t" style="left:251.00px;width:400px;text-align:center;top:186.50px;font-size:6.9px;line-height:10px;color:#f2f0ec;font-weight:bold;">VALOR Q</div>
<div class="r" style="left:479.30px;top:186.40px;width:29.10px;height:9.80px;background:#322d28;"></div>
<div class="t" style="left:293.85px;width:400px;text-align:center;top:186.50px;font-size:6.9px;line-height:10px;color:#f2f0ec;font-weight:bold;">VALOR</div>
<div class="r" style="left:510.00px;top:186.40px;width:53.00px;height:9.80px;background:#322d28;"></div>
<div class="t" style="left:336.50px;width:400px;text-align:center;top:186.50px;font-size:6.9px;line-height:10px;color:#f2f0ec;font-weight:bold;">VALOR Q</div>
<div class="r" style="left:564.30px;top:186.40px;width:28.40px;height:9.80px;background:#322d28;"></div>
<div class="t" style="left:378.50px;width:400px;text-align:center;top:186.50px;font-size:6.9px;line-height:10px;color:#f2f0ec;font-weight:bold;">VALOR</div>
<div class="r" style="left:594.70px;top:186.40px;width:54.00px;height:9.80px;background:#322d28;"></div>
<div class="t" style="left:421.70px;width:400px;text-align:center;top:186.50px;font-size:6.9px;line-height:10px;color:#f2f0ec;font-weight:bold;">VALOR Q</div>
<div class="r" style="left:650.30px;top:186.40px;width:28.40px;height:9.80px;background:#322d28;"></div>
<div class="t" style="left:464.50px;width:400px;text-align:center;top:186.50px;font-size:6.9px;line-height:10px;color:#f2f0ec;font-weight:bold;">VALOR</div>
<div class="r" style="left:680.00px;top:186.40px;width:55.60px;height:9.80px;background:#322d28;"></div>
<div class="t" style="left:507.80px;width:400px;text-align:center;top:186.50px;font-size:6.9px;line-height:10px;color:#f2f0ec;font-weight:bold;">VALOR Q</div>
<div class="t k" style="left:159.10px;width:400px;text-align:center;top:199.50px;font-size:7.3px;line-height:10px;color:#2a2826;font-weight:normal;">25</div>
<div class="r" style="left:381.80px;top:199.00px;width:8.50px;height:11.00px;background:#10ab95;"></div>
<div class="t" style="left:186.05px;width:400px;text-align:center;top:199.70px;font-size:6.6px;line-height:10px;color:#d9f4ee;font-weight:bold;">W</div>
<div class="t k" style="left:393.30px;top:199.50px;font-size:6.6px;line-height:10px;color:#262422;font-weight:normal;">AGPM3</div>
<div class="t k" style="left:424.53px;top:200.40px;font-size:7.4px;line-height:10px;color:#1e1c1a;font-weight:normal;">63</div>
<svg style="left:435.87px;top:200.45px;color:#b6bf14" width="42" height="9"><use href="#sf" x="0.00" y="0" width="8" height="8"/><use href="#sf" x="8.43" y="0" width="8" height="8"/><use href="#sf" x="16.86" y="0" width="8" height="8"/><use href="#sh" x="25.29" y="0" width="8" height="8"/><use href="#se" x="33.72" y="0" width="8" height="8"/></svg>
<div class="t k" style="left:293.90px;width:400px;text-align:center;top:199.50px;font-size:7.3px;line-height:10px;color:#2a2826;font-weight:normal;">0.95</div>
<div class="t k" style="left:510.03px;top:200.40px;font-size:7.4px;line-height:10px;color:#1e1c1a;font-weight:normal;">76</div>
<svg style="left:521.37px;top:200.45px;color:#b6bf14" width="42" height="9"><use href="#sf" x="0.00" y="0" width="8" height="8"/><use href="#sf" x="8.43" y="0" width="8" height="8"/><use href="#sf" x="16.86" y="0" width="8" height="8"/><use href="#sh" x="25.29" y="0" width="8" height="8"/><use href="#se" x="33.72" y="0" width="8" height="8"/></svg>
<div class="t k" style="left:378.50px;width:400px;text-align:center;top:199.50px;font-size:7.3px;line-height:10px;color:#2a2826;font-weight:normal;">0.69</div>
<div class="t k" style="left:595.23px;top:200.40px;font-size:7.4px;line-height:10px;color:#1e1c1a;font-weight:normal;">65</div>
<svg style="left:606.57px;top:200.45px;color:#b6bf14" width="42" height="9"><use href="#sf" x="0.00" y="0" width="8" height="8"/><use href="#sf" x="8.43" y="0" width="8" height="8"/><use href="#sf" x="16.86" y="0" width="8" height="8"/><use href="#sh" x="25.29" y="0" width="8" height="8"/><use href="#se" x="33.72" y="0" width="8" height="8"/></svg>
<div class="t k" style="left:464.50px;width:400px;text-align:center;top:199.50px;font-size:7.3px;line-height:10px;color:#2a2826;font-weight:normal;">2.03</div>
<div class="t k" style="left:681.33px;top:200.40px;font-size:7.4px;line-height:10px;color:#1e1c1a;font-weight:normal;">49</div>
<svg style="left:692.67px;top:200.45px;color:#ff8a4a" width="42" height="9"><use href="#sf" x="0.00" y="0" width="8" height="8"/><use href="#sf" x="8.43" y="0" width="8" height="8"/><use href="#sh" x="16.86" y="0" width="8" height="8"/><use href="#se" x="25.29" y="0" width="8" height="8"/><use href="#se" x="33.72" y="0" width="8" height="8"/></svg>
<div class="t k" style="left:159.10px;width:400px;text-align:center;top:214.60px;font-size:7.3px;line-height:10px;color:#2a2826;font-weight:normal;">24</div>
<div class="r" style="left:381.80px;top:214.10px;width:8.50px;height:11.00px;background:#10ab95;"></div>
<div class="t" style="left:186.05px;width:400px;text-align:center;top:214.80px;font-size:6.6px;line-height:10px;color:#d9f4ee;font-weight:bold;">W</div>
<div class="t k" style="left:393.30px;top:214.60px;font-size:6.6px;line-height:10px;color:#262422;font-weight:normal;">COPM3</div>
<div class="t k" style="left:424.53px;top:215.50px;font-size:7.4px;line-height:10px;color:#1e1c1a;font-weight:normal;">66</div>
<svg style="left:435.87px;top:215.55px;color:#b6bf14" width="42" height="9"><use href="#sf" x="0.00" y="0" width="8" height="8"/><use href="#sf" x="8.43" y="0" width="8" height="8"/><use href="#sf" x="16.86" y="0" width="8" height="8"/><use href="#sh" x="25.29" y="0" width="8" height="8"/><use href="#se" x="33.72" y="0" width="8" height="8"/></svg>
<div class="t k" style="left:293.90px;width:400px;text-align:center;top:214.60px;font-size:7.3px;line-height:10px;color:#2a2826;font-weight:normal;">0.42</div>
<div class="t k" style="left:510.03px;top:215.50px;font-size:7.4px;line-height:10px;color:#1e1c1a;font-weight:normal;">72</div>
<svg style="left:521.37px;top:215.55px;color:#b6bf14" width="42" height="9"><use href="#sf" x="0.00" y="0" width="8" height="8"/><use href="#sf" x="8.43" y="0" width="8" height="8"/><use href="#sf" x="16.86" y="0" width="8" height="8"/><use href="#sh" x="25.29" y="0" width="8" height="8"/><use href="#se" x="33.72" y="0" width="8" height="8"/></svg>
<div class="t k" style="left:378.50px;width:400px;text-align:center;top:214.60px;font-size:7.3px;line-height:10px;color:#2a2826;font-weight:normal;">0.23</div>
<div class="t k" style="left:595.23px;top:215.50px;font-size:7.4px;line-height:10px;color:#1e1c1a;font-weight:normal;">77</div>
<svg style="left:606.57px;top:215.55px;color:#b6bf14" width="42" height="9"><use href="#sf" x="0.00" y="0" width="8" height="8"/><use href="#sf" x="8.43" y="0" width="8" height="8"/><use href="#sf" x="16.86" y="0" width="8" height="8"/><use href="#sh" x="25.29" y="0" width="8" height="8"/><use href="#se" x="33.72" y="0" width="8" height="8"/></svg>
<div class="t k" style="left:464.50px;width:400px;text-align:center;top:214.60px;font-size:7.3px;line-height:10px;color:#2a2826;font-weight:normal;">2.05</div>
<div class="t k" style="left:681.33px;top:215.50px;font-size:7.4px;line-height:10px;color:#1e1c1a;font-weight:normal;">49</div>
<svg style="left:692.67px;top:215.55px;color:#ff8a4a" width="42" height="9"><use href="#sf" x="0.00" y="0" width="8" height="8"/><use href="#sf" x="8.43" y="0" width="8" height="8"/><use href="#sh" x="16.86" y="0" width="8" height="8"/><use href="#se" x="25.29" y="0" width="8" height="8"/><use href="#se" x="33.72" y="0" width="8" height="8"/></svg>
<div class="t k" style="left:159.10px;width:400px;text-align:center;top:229.50px;font-size:7.3px;line-height:10px;color:#2a2826;font-weight:normal;">23</div>
<div class="r" style="left:381.80px;top:229.00px;width:8.50px;height:11.00px;background:#10ab95;"></div>
<div class="t" style="left:186.05px;width:400px;text-align:center;top:229.70px;font-size:6.6px;line-height:10px;color:#d9f4ee;font-weight:bold;">W</div>
<div class="t k" style="left:393.30px;top:229.50px;font-size:6.6px;line-height:10px;color:#262422;font-weight:normal;">CGPM1</div>
<div class="t k" style="left:424.53px;top:230.40px;font-size:7.4px;line-height:10px;color:#1e1c1a;font-weight:normal;">66</div>
<svg style="left:435.87px;top:230.45px;color:#b6bf14" width="42" height="9"><use href="#sf" x="0.00" y="0" width="8" height="8"/><use href="#sf" x="8.43" y="0" width="8" height="8"/><use href="#sf" x="16.86" y="0" width="8" height="8"/><use href="#sh" x="25.29" y="0" width="8" height="8"/><use href="#se" x="33.72" y="0" width="8" height="8"/></svg>
<div class="t k" style="left:293.90px;width:400px;text-align:center;top:229.50px;font-size:7.3px;line-height:10px;color:#2a2826;font-weight:normal;">1.61</div>
<div class="t k" style="left:510.03px;top:230.40px;font-size:7.4px;line-height:10px;color:#1e1c1a;font-weight:normal;">60</div>
<svg style="left:521.37px;top:230.45px;color:#b6bf14" width="42" height="9"><use href="#sf" x="0.00" y="0" width="8" height="8"/><use href="#sf" x="8.43" y="0" width="8" height="8"/><use href="#sf" x="16.86" y="0" width="8" height="8"/><use href="#se" x="25.29" y="0" width="8" height="8"/><use href="#se" x="33.72" y="0" width="8" height="8"/></svg>
<div class="t k" style="left:378.50px;width:400px;text-align:center;top:229.50px;font-size:7.3px;line-height:10px;color:#2a2826;font-weight:normal;">0.82</div>
<div class="t k" style="left:595.23px;top:230.40px;font-size:7.4px;line-height:10px;color:#1e1c1a;font-weight:normal;">59</div>
<svg style="left:606.57px;top:230.45px;color:#ff8a4a" width="42" height="9"><use href="#sf" x="0.00" y="0" width="8" height="8"/><use href="#sf" x="8.43" y="0" width="8" height="8"/><use href="#sh" x="16.86" y="0" width="8" height="8"/><use href="#se" x="25.29" y="0" width="8" height="8"/><use href="#se" x="33.72" y="0" width="8" height="8"/></svg>
<div class="t k" style="left:464.50px;width:400px;text-align:center;top:229.50px;font-size:7.3px;line-height:10px;color:#2a2826;font-weight:normal;">0.82</div>
<div class="t k" style="left:681.33px;top:230.40px;font-size:7.4px;line-height:10px;color:#1e1c1a;font-weight:normal;">79</div>
<svg style="left:692.67px;top:230.45px;color:#b6bf14" width="42" height="9"><use href="#sf" x="0.00" y="0" width="8" height="8"/><use href="#sf" x="8.43" y="0" width="8" height="8"/><use href="#sf" x="16.86" y="0" width="8" height="8"/><use href="#sh" x="25.29" y="0" width="8" height="8"/><use href="#se" x="33.72" y="0" width="8" height="8"/></svg>
<div class="t k" style="left:159.10px;width:400px;text-align:center;top:244.50px;font-size:7.3px;line-height:10px;color:#2a2826;font-weight:normal;">22</div>
<div class="r" style="left:381.80px;top:244.00px;width:8.50px;height:11.00px;background:#10ab95;"></div>
<div class="t" style="left:186.05px;width:400px;text-align:center;top:244.70px;font-size:6.6px;line-height:10px;color:#d9f4ee;font-weight:bold;">W</div>
<div class="t k" style="left:393.30px;top:244.50px;font-size:6.6px;line-height:10px;color:#262422;font-weight:normal;">HRPM3</div>
<div class="t k" style="left:424.53px;top:245.40px;font-size:7.4px;line-height:10px;color:#1e1c1a;font-weight:normal;">69</div>
<svg style="left:435.87px;top:245.45px;color:#b6bf14" width="42" height="9"><use href="#sf" x="0.00" y="0" width="8" height="8"/><use href="#sf" x="8.43" y="0" width="8" height="8"/><use href="#sf" x="16.86" y="0" width="8" height="8"/><use href="#sh" x="25.29" y="0" width="8" height="8"/><use href="#se" x="33.72" y="0" width="8" height="8"/></svg>
<div class="t k" style="left:293.90px;width:400px;text-align:center;top:244.50px;font-size:7.3px;line-height:10px;color:#2a2826;font-weight:normal;">1.51</div>
<div class="t k" style="left:510.03px;top:245.40px;font-size:7.4px;line-height:10px;color:#1e1c1a;font-weight:normal;">62</div>
<svg style="left:521.37px;top:245.45px;color:#b6bf14" width="42" height="9"><use href="#sf" x="0.00" y="0" width="8" height="8"/><use href="#sf" x="8.43" y="0" width="8" height="8"/><use href="#sf" x="16.86" y="0" width="8" height="8"/><use href="#sh" x="25.29" y="0" width="8" height="8"/><use href="#se" x="33.72" y="0" width="8" height="8"/></svg>
<div class="t k" style="left:378.50px;width:400px;text-align:center;top:244.50px;font-size:7.3px;line-height:10px;color:#2a2826;font-weight:normal;">0.62</div>
<div class="t k" style="left:595.23px;top:245.40px;font-size:7.4px;line-height:10px;color:#1e1c1a;font-weight:normal;">69</div>
<svg style="left:606.57px;top:245.45px;color:#b6bf14" width="42" height="9"><use href="#sf" x="0.00" y="0" width="8" height="8"/><use href="#sf" x="8.43" y="0" width="8" height="8"/><use href="#sf" x="16.86" y="0" width="8" height="8"/><use href="#sh" x="25.29" y="0" width="8" height="8"/><use href="#se" x="33.72" y="0" width="8" height="8"/></svg>
<div class="t k" style="left:464.50px;width:400px;text-align:center;top:244.50px;font-size:7.3px;line-height:10px;color:#2a2826;font-weight:normal;">0.91</div>
<div class="t k" style="left:681.33px;top:245.40px;font-size:7.4px;line-height:10px;color:#1e1c1a;font-weight:normal;">77</div>
<svg style="left:692.67px;top:245.45px;color:#b6bf14" width="42" height="9"><use href="#sf" x="0.00" y="0" width="8" height="8"/><use href="#sf" x="8.43" y="0" width="8" height="8"/><use href="#sf" x="16.86" y="0" width="8" height="8"/><use href="#sh" x="25.29" y="0" width="8" height="8"/><use href="#se" x="33.72" y="0" width="8" height="8"/></svg>
<div class="t k" style="left:159.10px;width:400px;text-align:center;top:259.60px;font-size:7.3px;line-height:10px;color:#2a2826;font-weight:normal;">21</div>
<div class="r" style="left:381.80px;top:259.10px;width:8.50px;height:11.00px;background:#10ab95;"></div>
<div class="t" style="left:186.05px;width:400px;text-align:center;top:259.80px;font-size:6.6px;line-height:10px;color:#d9f4ee;font-weight:bold;">W</div>
<div class="t k" style="left:393.30px;top:259.60px;font-size:6.6px;line-height:10px;color:#262422;font-weight:normal;">CGPM2</div>
<div class="t k" style="left:424.53px;top:260.50px;font-size:7.4px;line-height:10px;color:#1e1c1a;font-weight:normal;">71</div>
<svg style="left:435.87px;top:260.55px;color:#b6bf14" width="42" height="9"><use href="#sf" x="0.00" y="0" width="8" height="8"/><use href="#sf" x="8.43" y="0" width="8" height="8"/><use href="#sf" x="16.86" y="0" width="8" height="8"/><use href="#sh" x="25.29" y="0" width="8" height="8"/><use href="#se" x="33.72" y="0" width="8" height="8"/></svg>
<div class="t k" style="left:293.90px;width:400px;text-align:center;top:259.60px;font-size:7.3px;line-height:10px;color:#2a2826;font-weight:normal;">0.72</div>
<div class="t k" style="left:510.03px;top:260.50px;font-size:7.4px;line-height:10px;color:#1e1c1a;font-weight:normal;">82</div>
<svg style="left:521.37px;top:260.55px;color:#7ed86a" width="42" height="9"><use href="#sf" x="0.00" y="0" width="8" height="8"/><use href="#sf" x="8.43" y="0" width="8" height="8"/><use href="#sf" x="16.86" y="0" width="8" height="8"/><use href="#sf" x="25.29" y="0" width="8" height="8"/><use href="#sh" x="33.72" y="0" width="8" height="8"/></svg>
<div class="t k" style="left:378.50px;width:400px;text-align:center;top:259.60px;font-size:7.3px;line-height:10px;color:#2a2826;font-weight:normal;">0.57</div>
<div class="t k" style="left:595.23px;top:260.50px;font-size:7.4px;line-height:10px;color:#1e1c1a;font-weight:normal;">71</div>
<svg style="left:606.57px;top:260.55px;color:#b6bf14" width="42" height="9"><use href="#sf" x="0.00" y="0" width="8" height="8"/><use href="#sf" x="8.43" y="0" width="8" height="8"/><use href="#sf" x="16.86" y="0" width="8" height="8"/><use href="#sh" x="25.29" y="0" width="8" height="8"/><use href="#se" x="33.72" y="0" width="8" height="8"/></svg>
<div class="t k" style="left:464.50px;width:400px;text-align:center;top:259.60px;font-size:7.3px;line-height:10px;color:#2a2826;font-weight:normal;">1.60</div>
<div class="t k" style="left:681.33px;top:260.50px;font-size:7.4px;line-height:10px;color:#1e1c1a;font-weight:normal;">60</div>
<svg style="left:692.67px;top:260.55px;color:#b6bf14" width="42" height="9"><use href="#sf" x="0.00" y="0" width="8" height="8"/><use href="#sf" x="8.43" y="0" width="8" height="8"/><use href="#sf" x="16.86" y="0" width="8" height="8"/><use href="#se" x="25.29" y="0" width="8" height="8"/><use href="#se" x="33.72" y="0" width="8" height="8"/></svg>
<div class="t k" style="left:159.10px;width:400px;text-align:center;top:275.00px;font-size:7.3px;line-height:10px;color:#2a2826;font-weight:normal;">20</div>
<div class="r" style="left:381.80px;top:274.50px;width:8.50px;height:11.00px;background:#10ab95;"></div>
<div class="t" style="left:186.05px;width:400px;text-align:center;top:275.20px;font-size:6.6px;line-height:10px;color:#d9f4ee;font-weight:bold;">W</div>
<div class="t k" style="left:393.30px;top:275.00px;font-size:6.6px;line-height:10px;color:#262422;font-weight:normal;">KBPM3</div>
<div class="t k" style="left:424.53px;top:275.90px;font-size:7.4px;line-height:10px;color:#1e1c1a;font-weight:normal;">71</div>
<svg style="left:435.87px;top:275.95px;color:#b6bf14" width="42" height="9"><use href="#sf" x="0.00" y="0" width="8" height="8"/><use href="#sf" x="8.43" y="0" width="8" height="8"/><use href="#sf" x="16.86" y="0" width="8" height="8"/><use href="#sh" x="25.29" y="0" width="8" height="8"/><use href="#se" x="33.72" y="0" width="8" height="8"/></svg>
<div class="t k" style="left:293.90px;width:400px;text-align:center;top:275.00px;font-size:7.3px;line-height:10px;color:#2a2826;font-weight:normal;">0.16</div>
<div class="t k" style="left:510.03px;top:275.90px;font-size:7.4px;line-height:10px;color:#1e1c1a;font-weight:normal;">96</div>
<svg style="left:521.37px;top:275.95px;color:#7ed86a" width="42" height="9"><use href="#sf" x="0.00" y="0" width="8" height="8"/><use href="#sf" x="8.43" y="0" width="8" height="8"/><use href="#sf" x="16.86" y="0" width="8" height="8"/><use href="#sf" x="25.29" y="0" width="8" height="8"/><use href="#sh" x="33.72" y="0" width="8" height="8"/></svg>
<div class="t k" style="left:378.50px;width:400px;text-align:center;top:275.00px;font-size:7.3px;line-height:10px;color:#2a2826;font-weight:normal;">0.81</div>
<div class="t k" style="left:595.23px;top:275.90px;font-size:7.4px;line-height:10px;color:#1e1c1a;font-weight:normal;">59</div>
<svg style="left:606.57px;top:275.95px;color:#ff8a4a" width="42" height="9"><use href="#sf" x="0.00" y="0" width="8" height="8"/><use href="#sf" x="8.43" y="0" width="8" height="8"/><use href="#sh" x="16.86" y="0" width="8" height="8"/><use href="#se" x="25.29" y="0" width="8" height="8"/><use href="#se" x="33.72" y="0" width="8" height="8"/></svg>
<div class="t k" style="left:464.50px;width:400px;text-align:center;top:275.00px;font-size:7.3px;line-height:10px;color:#2a2826;font-weight:normal;">1.65</div>
<div class="t k" style="left:681.33px;top:275.90px;font-size:7.4px;line-height:10px;color:#1e1c1a;font-weight:normal;">59</div>
<svg style="left:692.67px;top:275.95px;color:#ff8a4a" width="42" height="9"><use href="#sf" x="0.00" y="0" width="8" height="8"/><use href="#sf" x="8.43" y="0" width="8" height="8"/><use href="#sh" x="16.86" y="0" width="8" height="8"/><use href="#se" x="25.29" y="0" width="8" height="8"/><use href="#se" x="33.72" y="0" width="8" height="8"/></svg>
<div class="t k" style="left:159.10px;width:400px;text-align:center;top:290.00px;font-size:7.3px;line-height:10px;color:#2a2826;font-weight:normal;">19</div>
<div class="r" style="left:381.80px;top:289.50px;width:8.50px;height:11.00px;background:#10ab95;"></div>
<div class="t" style="left:186.05px;width:400px;text-align:center;top:290.20px;font-size:6.6px;line-height:10px;color:#d9f4ee;font-weight:bold;">W</div>
<div class="t k" style="left:393.30px;top:290.00px;font-size:6.6px;line-height:10px;color:#262422;font-weight:normal;">ECPM1</div>
<div class="t k" style="left:424.53px;top:290.90px;font-size:7.4px;line-height:10px;color:#1e1c1a;font-weight:normal;">75</div>
<svg style="left:435.87px;top:290.95px;color:#b6bf14" width="42" height="9"><use href="#sf" x="0.00" y="0" width="8" height="8"/><use href="#sf" x="8.43" y="0" width="8" height="8"/><use href="#sf" x="16.86" y="0" width="8" height="8"/><use href="#sh" x="25.29" y="0" width="8" height="8"/><use href="#se" x="33.72" y="0" width="8" height="8"/></svg>
<div class="t k" style="left:293.90px;width:400px;text-align:center;top:290.00px;font-size:7.3px;line-height:10px;color:#2a2826;font-weight:normal;">1.21</div>
<div class="t k" style="left:510.03px;top:290.90px;font-size:7.4px;line-height:10px;color:#1e1c1a;font-weight:normal;">70</div>
<svg style="left:521.37px;top:290.95px;color:#b6bf14" width="42" height="9"><use href="#sf" x="0.00" y="0" width="8" height="8"/><use href="#sf" x="8.43" y="0" width="8" height="8"/><use href="#sf" x="16.86" y="0" width="8" height="8"/><use href="#sh" x="25.29" y="0" width="8" height="8"/><use href="#se" x="33.72" y="0" width="8" height="8"/></svg>
<div class="t k" style="left:378.50px;width:400px;text-align:center;top:290.00px;font-size:7.3px;line-height:10px;color:#2a2826;font-weight:normal;">0.66</div>
<div class="t k" style="left:595.23px;top:290.90px;font-size:7.4px;line-height:10px;color:#1e1c1a;font-weight:normal;">67</div>
<svg style="left:606.57px;top:290.95px;color:#b6bf14" width="42" height="9"><use href="#sf" x="0.00" y="0" width="8" height="8"/><use href="#sf" x="8.43" y="0" width="8" height="8"/><use href="#sf" x="16.86" y="0" width="8" height="8"/><use href="#sh" x="25.29" y="0" width="8" height="8"/><use href="#se" x="33.72" y="0" width="8" height="8"/></svg>
<div class="t k" style="left:464.50px;width:400px;text-align:center;top:290.00px;font-size:7.3px;line-height:10px;color:#2a2826;font-weight:normal;">0.49</div>
<div class="t k" style="left:681.33px;top:290.90px;font-size:7.4px;line-height:10px;color:#1e1c1a;font-weight:normal;">88</div>
<svg style="left:692.67px;top:290.95px;color:#7ed86a" width="42" height="9"><use href="#sf" x="0.00" y="0" width="8" height="8"/><use href="#sf" x="8.43" y="0" width="8" height="8"/><use href="#sf" x="16.86" y="0" width="8" height="8"/><use href="#sf" x="25.29" y="0" width="8" height="8"/><use href="#sh" x="33.72" y="0" width="8" height="8"/></svg>
<div class="t k" style="left:159.10px;width:400px;text-align:center;top:305.30px;font-size:7.3px;line-height:10px;color:#2a2826;font-weight:normal;">18</div>
<div class="r" style="left:381.80px;top:304.80px;width:8.50px;height:11.00px;background:#10ab95;"></div>
<div class="t" style="left:186.05px;width:400px;text-align:center;top:305.50px;font-size:6.6px;line-height:10px;color:#d9f4ee;font-weight:bold;">W</div>
<div class="t k" style="left:393.30px;top:305.30px;font-size:6.6px;line-height:10px;color:#262422;font-weight:normal;">COPM1</div>
<div class="t k" style="left:424.53px;top:306.20px;font-size:7.4px;line-height:10px;color:#1e1c1a;font-weight:normal;">75</div>
<svg style="left:435.87px;top:306.25px;color:#b6bf14" width="42" height="9"><use href="#sf" x="0.00" y="0" width="8" height="8"/><use href="#sf" x="8.43" y="0" width="8" height="8"/><use href="#sf" x="16.86" y="0" width="8" height="8"/><use href="#sh" x="25.29" y="0" width="8" height="8"/><use href="#se" x="33.72" y="0" width="8" height="8"/></svg>
<div class="t k" style="left:293.90px;width:400px;text-align:center;top:305.30px;font-size:7.3px;line-height:10px;color:#2a2826;font-weight:normal;">0.29</div>
<div class="t k" style="left:510.03px;top:306.20px;font-size:7.4px;line-height:10px;color:#1e1c1a;font-weight:normal;">85</div>
<svg style="left:521.37px;top:306.25px;color:#7ed86a" width="42" height="9"><use href="#sf" x="0.00" y="0" width="8" height="8"/><use href="#sf" x="8.43" y="0" width="8" height="8"/><use href="#sf" x="16.86" y="0" width="8" height="8"/><use href="#sf" x="25.29" y="0" width="8" height="8"/><use href="#sh" x="33.72" y="0" width="8" height="8"/></svg>
<div class="t k" style="left:378.50px;width:400px;text-align:center;top:305.30px;font-size:7.3px;line-height:10px;color:#2a2826;font-weight:normal;">0.17</div>
<div class="t k" style="left:595.23px;top:306.20px;font-size:7.4px;line-height:10px;color:#1e1c1a;font-weight:normal;">83</div>
<svg style="left:606.57px;top:306.25px;color:#7ed86a" width="42" height="9"><use href="#sf" x="0.00" y="0" width="8" height="8"/><use href="#sf" x="8.43" y="0" width="8" height="8"/><use href="#sf" x="16.86" y="0" width="8" height="8"/><use href="#sf" x="25.29" y="0" width="8" height="8"/><use href="#sh" x="33.72" y="0" width="8" height="8"/></svg>
<div class="t k" style="left:464.50px;width:400px;text-align:center;top:305.30px;font-size:7.3px;line-height:10px;color:#2a2826;font-weight:normal;">1.74</div>
<div class="t k" style="left:681.33px;top:306.20px;font-size:7.4px;line-height:10px;color:#1e1c1a;font-weight:normal;">56</div>
<svg style="left:692.67px;top:306.25px;color:#ff8a4a" width="42" height="9"><use href="#sf" x="0.00" y="0" width="8" height="8"/><use href="#sf" x="8.43" y="0" width="8" height="8"/><use href="#sh" x="16.86" y="0" width="8" height="8"/><use href="#se" x="25.29" y="0" width="8" height="8"/><use href="#se" x="33.72" y="0" width="8" height="8"/></svg>
<div class="t k" style="left:159.10px;width:400px;text-align:center;top:320.70px;font-size:7.3px;line-height:10px;color:#2a2826;font-weight:normal;">17</div>
<div class="r" style="left:379.65px;top:320.20px;width:8.50px;height:11.00px;background:#10ab95;"></div>
<div class="t" style="left:183.90px;width:400px;text-align:center;top:320.90px;font-size:6.6px;line-height:10px;color:#d9f4ee;font-weight:bold;">W</div>
<div class="t k" style="left:391.15px;top:320.70px;font-size:6.6px;line-height:10px;color:#262422;font-weight:normal;">AGPM10</div>
<div class="t k" style="left:424.53px;top:321.60px;font-size:7.4px;line-height:10px;color:#1e1c1a;font-weight:normal;">75</div>
<svg style="left:435.87px;top:321.65px;color:#b6bf14" width="42" height="9"><use href="#sf" x="0.00" y="0" width="8" height="8"/><use href="#sf" x="8.43" y="0" width="8" height="8"/><use href="#sf" x="16.86" y="0" width="8" height="8"/><use href="#sh" x="25.29" y="0" width="8" height="8"/><use href="#se" x="33.72" y="0" width="8" height="8"/></svg>
<div class="t k" style="left:293.90px;width:400px;text-align:center;top:320.70px;font-size:7.3px;line-height:10px;color:#2a2826;font-weight:normal;">0.72</div>
<div class="t k" style="left:510.03px;top:321.60px;font-size:7.4px;line-height:10px;color:#1e1c1a;font-weight:normal;">82</div>
<svg style="left:521.37px;top:321.65px;color:#7ed86a" width="42" height="9"><use href="#sf" x="0.00" y="0" width="8" height="8"/><use href="#sf" x="8.43" y="0" width="8" height="8"/><use href="#sf" x="16.86" y="0" width="8" height="8"/><use href="#sf" x="25.29" y="0" width="8" height="8"/><use href="#sh" x="33.72" y="0" width="8" height="8"/></svg>
<div class="t k" style="left:378.50px;width:400px;text-align:center;top:320.70px;font-size:7.3px;line-height:10px;color:#2a2826;font-weight:normal;">0.63</div>
<div class="t k" style="left:595.23px;top:321.60px;font-size:7.4px;line-height:10px;color:#1e1c1a;font-weight:normal;">68</div>
<svg style="left:606.57px;top:321.65px;color:#b6bf14" width="42" height="9"><use href="#sf" x="0.00" y="0" width="8" height="8"/><use href="#sf" x="8.43" y="0" width="8" height="8"/><use href="#sf" x="16.86" y="0" width="8" height="8"/><use href="#sh" x="25.29" y="0" width="8" height="8"/><use href="#se" x="33.72" y="0" width="8" height="8"/></svg>
<div class="t k" style="left:464.50px;width:400px;text-align:center;top:320.70px;font-size:7.3px;line-height:10px;color:#2a2826;font-weight:normal;">0.95</div>
<div class="t k" style="left:681.33px;top:321.60px;font-size:7.4px;line-height:10px;color:#1e1c1a;font-weight:normal;">76</div>
<svg style="left:692.67px;top:321.65px;color:#b6bf14" width="42" height="9"><use href="#sf" x="0.00" y="0" width="8" height="8"/><use href="#sf" x="8.43" y="0" width="8" height="8"/><use href="#sf" x="16.86" y="0" width="8" height="8"/><use href="#sh" x="25.29" y="0" width="8" height="8"/><use href="#se" x="33.72" y="0" width="8" height="8"/></svg>
<div class="t k" style="left:159.10px;width:400px;text-align:center;top:336.00px;font-size:7.3px;line-height:10px;color:#2a2826;font-weight:normal;">16</div>
<div class="r" style="left:381.80px;top:335.50px;width:8.50px;height:11.00px;background:#10ab95;"></div>
<div class="t" style="left:186.05px;width:400px;text-align:center;top:336.20px;font-size:6.6px;line-height:10px;color:#d9f4ee;font-weight:bold;">W</div>
<div class="t k" style="left:393.30px;top:336.00px;font-size:6.6px;line-height:10px;color:#262422;font-weight:normal;">HRPM1</div>
<div class="t k" style="left:424.53px;top:336.90px;font-size:7.4px;line-height:10px;color:#1e1c1a;font-weight:normal;">76</div>
<svg style="left:435.87px;top:336.95px;color:#b6bf14" width="42" height="9"><use href="#sf" x="0.00" y="0" width="8" height="8"/><use href="#sf" x="8.43" y="0" width="8" height="8"/><use href="#sf" x="16.86" y="0" width="8" height="8"/><use href="#sh" x="25.29" y="0" width="8" height="8"/><use href="#se" x="33.72" y="0" width="8" height="8"/></svg>
<div class="t k" style="left:293.90px;width:400px;text-align:center;top:336.00px;font-size:7.3px;line-height:10px;color:#2a2826;font-weight:normal;">0.41</div>
<div class="t k" style="left:510.03px;top:336.90px;font-size:7.4px;line-height:10px;color:#1e1c1a;font-weight:normal;">90</div>
<svg style="left:521.37px;top:336.95px;color:#7ed86a" width="42" height="9"><use href="#sf" x="0.00" y="0" width="8" height="8"/><use href="#sf" x="8.43" y="0" width="8" height="8"/><use href="#sf" x="16.86" y="0" width="8" height="8"/><use href="#sf" x="25.29" y="0" width="8" height="8"/><use href="#sh" x="33.72" y="0" width="8" height="8"/></svg>
<div class="t k" style="left:378.50px;width:400px;text-align:center;top:336.00px;font-size:7.3px;line-height:10px;color:#2a2826;font-weight:normal;">0.47</div>
<div class="t k" style="left:595.23px;top:336.90px;font-size:7.4px;line-height:10px;color:#1e1c1a;font-weight:normal;">76</div>
<svg style="left:606.57px;top:336.95px;color:#b6bf14" width="42" height="9"><use href="#sf" x="0.00" y="0" width="8" height="8"/><use href="#sf" x="8.43" y="0" width="8" height="8"/><use href="#sf" x="16.86" y="0" width="8" height="8"/><use href="#sh" x="25.29" y="0" width="8" height="8"/><use href="#se" x="33.72" y="0" width="8" height="8"/></svg>
<div class="t k" style="left:464.50px;width:400px;text-align:center;top:336.00px;font-size:7.3px;line-height:10px;color:#2a2826;font-weight:normal;">1.47</div>
<div class="t k" style="left:681.33px;top:336.90px;font-size:7.4px;line-height:10px;color:#1e1c1a;font-weight:normal;">63</div>
<svg style="left:692.67px;top:336.95px;color:#b6bf14" width="42" height="9"><use href="#sf" x="0.00" y="0" width="8" height="8"/><use href="#sf" x="8.43" y="0" width="8" height="8"/><use href="#sf" x="16.86" y="0" width="8" height="8"/><use href="#sh" x="25.29" y="0" width="8" height="8"/><use href="#se" x="33.72" y="0" width="8" height="8"/></svg>
<div class="t k" style="left:159.10px;width:400px;text-align:center;top:352.20px;font-size:7.3px;line-height:10px;color:#2a2826;font-weight:normal;">15</div>
<div class="r" style="left:381.80px;top:351.70px;width:8.50px;height:11.00px;background:#10ab95;"></div>
<div class="t" style="left:186.05px;width:400px;text-align:center;top:352.40px;font-size:6.6px;line-height:10px;color:#d9f4ee;font-weight:bold;">W</div>
<div class="t k" style="left:393.30px;top:352.20px;font-size:6.6px;line-height:10px;color:#262422;font-weight:normal;">RSPM2</div>
<div class="t k" style="left:424.53px;top:353.10px;font-size:7.4px;line-height:10px;color:#1e1c1a;font-weight:normal;">77</div>
<svg style="left:435.87px;top:353.15px;color:#b6bf14" width="42" height="9"><use href="#sf" x="0.00" y="0" width="8" height="8"/><use href="#sf" x="8.43" y="0" width="8" height="8"/><use href="#sf" x="16.86" y="0" width="8" height="8"/><use href="#sh" x="25.29" y="0" width="8" height="8"/><use href="#se" x="33.72" y="0" width="8" height="8"/></svg>
<div class="t k" style="left:293.90px;width:400px;text-align:center;top:352.20px;font-size:7.3px;line-height:10px;color:#2a2826;font-weight:normal;">1.05</div>
<div class="t k" style="left:510.03px;top:353.10px;font-size:7.4px;line-height:10px;color:#1e1c1a;font-weight:normal;">74</div>
<svg style="left:521.37px;top:353.15px;color:#b6bf14" width="42" height="9"><use href="#sf" x="0.00" y="0" width="8" height="8"/><use href="#sf" x="8.43" y="0" width="8" height="8"/><use href="#sf" x="16.86" y="0" width="8" height="8"/><use href="#sh" x="25.29" y="0" width="8" height="8"/><use href="#se" x="33.72" y="0" width="8" height="8"/></svg>
<div class="t k" style="left:378.50px;width:400px;text-align:center;top:352.20px;font-size:7.3px;line-height:10px;color:#2a2826;font-weight:normal;">0.33</div>
<div class="t k" style="left:595.23px;top:353.10px;font-size:7.4px;line-height:10px;color:#1e1c1a;font-weight:normal;">84</div>
<svg style="left:606.57px;top:353.15px;color:#7ed86a" width="42" height="9"><use href="#sf" x="0.00" y="0" width="8" height="8"/><use href="#sf" x="8.43" y="0" width="8" height="8"/><use href="#sf" x="16.86" y="0" width="8" height="8"/><use href="#sf" x="25.29" y="0" width="8" height="8"/><use href="#sh" x="33.72" y="0" width="8" height="8"/></svg>
<div class="t k" style="left:464.50px;width:400px;text-align:center;top:352.20px;font-size:7.3px;line-height:10px;color:#2a2826;font-weight:normal;">1.10</div>
<div class="t k" style="left:681.33px;top:353.10px;font-size:7.4px;line-height:10px;color:#1e1c1a;font-weight:normal;">73</div>
<svg style="left:692.67px;top:353.15px;color:#b6bf14" width="42" height="9"><use href="#sf" x="0.00" y="0" width="8" height="8"/><use href="#sf" x="8.43" y="0" width="8" height="8"/><use href="#sf" x="16.86" y="0" width="8" height="8"/><use href="#sh" x="25.29" y="0" width="8" height="8"/><use href="#se" x="33.72" y="0" width="8" height="8"/></svg>
<div class="t k" style="left:159.10px;width:400px;text-align:center;top:368.10px;font-size:7.3px;line-height:10px;color:#2a2826;font-weight:normal;">14</div>
<div class="r" style="left:381.80px;top:367.60px;width:8.50px;height:11.00px;background:#10ab95;"></div>
<div class="t" style="left:186.05px;width:400px;text-align:center;top:368.30px;font-size:6.6px;line-height:10px;color:#d9f4ee;font-weight:bold;">W</div>
<div class="t k" style="left:393.30px;top:368.10px;font-size:6.6px;line-height:10px;color:#262422;font-weight:normal;">COPM2</div>
<div class="t k" style="left:424.53px;top:369.00px;font-size:7.4px;line-height:10px;color:#1e1c1a;font-weight:normal;">77</div>
<svg style="left:435.87px;top:369.05px;color:#b6bf14" width="42" height="9"><use href="#sf" x="0.00" y="0" width="8" height="8"/><use href="#sf" x="8.43" y="0" width="8" height="8"/><use href="#sf" x="16.86" y="0" width="8" height="8"/><use href="#sh" x="25.29" y="0" width="8" height="8"/><use href="#se" x="33.72" y="0" width="8" height="8"/></svg>
<div class="t k" style="left:293.90px;width:400px;text-align:center;top:368.10px;font-size:7.3px;line-height:10px;color:#2a2826;font-weight:normal;">0.29</div>
<div class="t k" style="left:510.03px;top:369.00px;font-size:7.4px;line-height:10px;color:#1e1c1a;font-weight:normal;">85</div>
<svg style="left:521.37px;top:369.05px;color:#7ed86a" width="42" height="9"><use href="#sf" x="0.00" y="0" width="8" height="8"/><use href="#sf" x="8.43" y="0" width="8" height="8"/><use href="#sf" x="16.86" y="0" width="8" height="8"/><use href="#sf" x="25.29" y="0" width="8" height="8"/><use href="#sh" x="33.72" y="0" width="8" height="8"/></svg>
<div class="t k" style="left:378.50px;width:400px;text-align:center;top:368.10px;font-size:7.3px;line-height:10px;color:#2a2826;font-weight:normal;">0.22</div>
<div class="t k" style="left:595.23px;top:369.00px;font-size:7.4px;line-height:10px;color:#1e1c1a;font-weight:normal;">77</div>
<svg style="left:606.57px;top:369.05px;color:#b6bf14" width="42" height="9"><use href="#sf" x="0.00" y="0" width="8" height="8"/><use href="#sf" x="8.43" y="0" width="8" height="8"/><use href="#sf" x="16.86" y="0" width="8" height="8"/><use href="#sh" x="25.29" y="0" width="8" height="8"/><use href="#se" x="33.72" y="0" width="8" height="8"/></svg>
<div class="t k" style="left:464.50px;width:400px;text-align:center;top:368.10px;font-size:7.3px;line-height:10px;color:#2a2826;font-weight:normal;">1.26</div>
<div class="t k" style="left:681.33px;top:369.00px;font-size:7.4px;line-height:10px;color:#1e1c1a;font-weight:normal;">68</div>
<svg style="left:692.67px;top:369.05px;color:#b6bf14" width="42" height="9"><use href="#sf" x="0.00" y="0" width="8" height="8"/><use href="#sf" x="8.43" y="0" width="8" height="8"/><use href="#sf" x="16.86" y="0" width="8" height="8"/><use href="#sh" x="25.29" y="0" width="8" height="8"/><use href="#se" x="33.72" y="0" width="8" height="8"/></svg>
<div class="t k" style="left:159.10px;width:400px;text-align:center;top:384.00px;font-size:7.3px;line-height:10px;color:#2a2826;font-weight:normal;">13</div>
<div class="r" style="left:381.80px;top:383.50px;width:8.50px;height:11.00px;background:#10ab95;"></div>
<div class="t" style="left:186.05px;width:400px;text-align:center;top:384.20px;font-size:6.6px;line-height:10px;color:#d9f4ee;font-weight:bold;">W</div>
<div class="t k" style="left:393.30px;top:384.00px;font-size:6.6px;line-height:10px;color:#262422;font-weight:normal;">AGPM2</div>
<div class="t k" style="left:424.53px;top:384.90px;font-size:7.4px;line-height:10px;color:#1e1c1a;font-weight:normal;">77</div>
<svg style="left:435.87px;top:384.95px;color:#b6bf14" width="42" height="9"><use href="#sf" x="0.00" y="0" width="8" height="8"/><use href="#sf" x="8.43" y="0" width="8" height="8"/><use href="#sf" x="16.86" y="0" width="8" height="8"/><use href="#sh" x="25.29" y="0" width="8" height="8"/><use href="#se" x="33.72" y="0" width="8" height="8"/></svg>
<div class="t k" style="left:293.90px;width:400px;text-align:center;top:384.00px;font-size:7.3px;line-height:10px;color:#2a2826;font-weight:normal;">0.49</div>
<div class="t k" style="left:510.03px;top:384.90px;font-size:7.4px;line-height:10px;color:#1e1c1a;font-weight:normal;">88</div>
<svg style="left:521.37px;top:384.95px;color:#7ed86a" width="42" height="9"><use href="#sf" x="0.00" y="0" width="8" height="8"/><use href="#sf" x="8.43" y="0" width="8" height="8"/><use href="#sf" x="16.86" y="0" width="8" height="8"/><use href="#sf" x="25.29" y="0" width="8" height="8"/><use href="#sh" x="33.72" y="0" width="8" height="8"/></svg>
<div class="t k" style="left:378.50px;width:400px;text-align:center;top:384.00px;font-size:7.3px;line-height:10px;color:#2a2826;font-weight:normal;">0.62</div>
<div class="t k" style="left:595.23px;top:384.90px;font-size:7.4px;line-height:10px;color:#1e1c1a;font-weight:normal;">69</div>
<svg style="left:606.57px;top:384.95px;color:#b6bf14" width="42" height="9"><use href="#sf" x="0.00" y="0" width="8" height="8"/><use href="#sf" x="8.43" y="0" width="8" height="8"/><use href="#sf" x="16.86" y="0" width="8" height="8"/><use href="#sh" x="25.29" y="0" width="8" height="8"/><use href="#se" x="33.72" y="0" width="8" height="8"/></svg>
<div class="t k" style="left:464.50px;width:400px;text-align:center;top:384.00px;font-size:7.3px;line-height:10px;color:#2a2826;font-weight:normal;">0.98</div>
<div class="t k" style="left:681.33px;top:384.90px;font-size:7.4px;line-height:10px;color:#1e1c1a;font-weight:normal;">76</div>
<svg style="left:692.67px;top:384.95px;color:#b6bf14" width="42" height="9"><use href="#sf" x="0.00" y="0" width="8" height="8"/><use href="#sf" x="8.43" y="0" width="8" height="8"/><use href="#sf" x="16.86" y="0" width="8" height="8"/><use href="#sh" x="25.29" y="0" width="8" height="8"/><use href="#se" x="33.72" y="0" width="8" height="8"/></svg>
<div class="t k" style="left:159.10px;width:400px;text-align:center;top:399.80px;font-size:7.3px;line-height:10px;color:#2a2826;font-weight:normal;">12</div>
<div class="r" style="left:381.80px;top:399.30px;width:8.50px;height:11.00px;background:#10ab95;"></div>
<div class="t" style="left:186.05px;width:400px;text-align:center;top:400.00px;font-size:6.6px;line-height:10px;color:#d9f4ee;font-weight:bold;">W</div>
<div class="t k" style="left:393.30px;top:399.80px;font-size:6.6px;line-height:10px;color:#262422;font-weight:normal;">ECPM2</div>
<div class="t k" style="left:424.53px;top:400.70px;font-size:7.4px;line-height:10px;color:#1e1c1a;font-weight:normal;">79</div>
<svg style="left:435.87px;top:400.75px;color:#b6bf14" width="42" height="9"><use href="#sf" x="0.00" y="0" width="8" height="8"/><use href="#sf" x="8.43" y="0" width="8" height="8"/><use href="#sf" x="16.86" y="0" width="8" height="8"/><use href="#sh" x="25.29" y="0" width="8" height="8"/><use href="#se" x="33.72" y="0" width="8" height="8"/></svg>
<div class="t k" style="left:293.90px;width:400px;text-align:center;top:399.80px;font-size:7.3px;line-height:10px;color:#2a2826;font-weight:normal;">0.32</div>
<div class="t k" style="left:510.03px;top:400.70px;font-size:7.4px;line-height:10px;color:#1e1c1a;font-weight:normal;">92</div>
<svg style="left:521.37px;top:400.75px;color:#7ed86a" width="42" height="9"><use href="#sf" x="0.00" y="0" width="8" height="8"/><use href="#sf" x="8.43" y="0" width="8" height="8"/><use href="#sf" x="16.86" y="0" width="8" height="8"/><use href="#sf" x="25.29" y="0" width="8" height="8"/><use href="#sh" x="33.72" y="0" width="8" height="8"/></svg>
<div class="t k" style="left:378.50px;width:400px;text-align:center;top:399.80px;font-size:7.3px;line-height:10px;color:#2a2826;font-weight:normal;">0.41</div>
<div class="t k" style="left:595.23px;top:400.70px;font-size:7.4px;line-height:10px;color:#1e1c1a;font-weight:normal;">79</div>
<svg style="left:606.57px;top:400.75px;color:#b6bf14" width="42" height="9"><use href="#sf" x="0.00" y="0" width="8" height="8"/><use href="#sf" x="8.43" y="0" width="8" height="8"/><use href="#sf" x="16.86" y="0" width="8" height="8"/><use href="#sh" x="25.29" y="0" width="8" height="8"/><use href="#se" x="33.72" y="0" width="8" height="8"/></svg>
<div class="t k" style="left:464.50px;width:400px;text-align:center;top:399.80px;font-size:7.3px;line-height:10px;color:#2a2826;font-weight:normal;">1.35</div>
<div class="t k" style="left:681.33px;top:400.70px;font-size:7.4px;line-height:10px;color:#1e1c1a;font-weight:normal;">66</div>
<svg style="left:692.67px;top:400.75px;color:#b6bf14" width="42" height="9"><use href="#sf" x="0.00" y="0" width="8" height="8"/><use href="#sf" x="8.43" y="0" width="8" height="8"/><use href="#sf" x="16.86" y="0" width="8" height="8"/><use href="#sh" x="25.29" y="0" width="8" height="8"/><use href="#se" x="33.72" y="0" width="8" height="8"/></svg>
<div class="t k" style="left:159.10px;width:400px;text-align:center;top:415.70px;font-size:7.3px;line-height:10px;color:#2a2826;font-weight:normal;">11</div>
<div class="r" style="left:381.80px;top:415.20px;width:8.50px;height:11.00px;background:#10ab95;"></div>
<div class="t" style="left:186.05px;width:400px;text-align:center;top:415.90px;font-size:6.6px;line-height:10px;color:#d9f4ee;font-weight:bold;">W</div>
<div class="t k" style="left:393.30px;top:415.70px;font-size:6.6px;line-height:10px;color:#262422;font-weight:normal;">AGPM5</div>
<div class="t k" style="left:424.53px;top:416.60px;font-size:7.4px;line-height:10px;color:#1e1c1a;font-weight:normal;">80</div>
<svg style="left:435.87px;top:416.65px;color:#7ed86a" width="42" height="9"><use href="#sf" x="0.00" y="0" width="8" height="8"/><use href="#sf" x="8.43" y="0" width="8" height="8"/><use href="#sf" x="16.86" y="0" width="8" height="8"/><use href="#sf" x="25.29" y="0" width="8" height="8"/><use href="#se" x="33.72" y="0" width="8" height="8"/></svg>
<div class="t k" style="left:293.90px;width:400px;text-align:center;top:415.70px;font-size:7.3px;line-height:10px;color:#2a2826;font-weight:normal;">0.87</div>
<div class="t k" style="left:510.03px;top:416.60px;font-size:7.4px;line-height:10px;color:#1e1c1a;font-weight:normal;">78</div>
<svg style="left:521.37px;top:416.65px;color:#b6bf14" width="42" height="9"><use href="#sf" x="0.00" y="0" width="8" height="8"/><use href="#sf" x="8.43" y="0" width="8" height="8"/><use href="#sf" x="16.86" y="0" width="8" height="8"/><use href="#sh" x="25.29" y="0" width="8" height="8"/><use href="#se" x="33.72" y="0" width="8" height="8"/></svg>
<div class="t k" style="left:378.50px;width:400px;text-align:center;top:415.70px;font-size:7.3px;line-height:10px;color:#2a2826;font-weight:normal;">0.34</div>
<div class="t k" style="left:595.23px;top:416.60px;font-size:7.4px;line-height:10px;color:#1e1c1a;font-weight:normal;">83</div>
<svg style="left:606.57px;top:416.65px;color:#7ed86a" width="42" height="9"><use href="#sf" x="0.00" y="0" width="8" height="8"/><use href="#sf" x="8.43" y="0" width="8" height="8"/><use href="#sf" x="16.86" y="0" width="8" height="8"/><use href="#sf" x="25.29" y="0" width="8" height="8"/><use href="#sh" x="33.72" y="0" width="8" height="8"/></svg>
<div class="t" style="left:464.50px;width:400px;text-align:center;top:415.70px;font-size:7.3px;line-height:10px;color:#2a2826;font-weight:normal;">-</div>
<div class="t" style="left:507.80px;width:400px;text-align:center;top:415.70px;font-size:7.3px;line-height:10px;color:#2a2826;font-weight:normal;">-</div>
<div class="r" style="left:372.50px;top:196.20px;width:1.15px;height:232.60px;background:#6e6962;"></div>
<div class="r" style="left:423.10px;top:196.20px;width:1.15px;height:232.60px;background:#6e6962;"></div>
<div class="r" style="left:478.30px;top:196.20px;width:1.15px;height:232.60px;background:#6e6962;"></div>
<div class="r" style="left:563.30px;top:196.20px;width:1.15px;height:232.60px;background:#6e6962;"></div>
<div class="r" style="left:649.30px;top:196.20px;width:1.15px;height:232.60px;background:#6e6962;"></div>
<div class="r" style="left:346.00px;top:430.20px;width:389.00px;height:1.00px;background:#c9c7c2;"></div>
<div class="t" style="left:345.20px;top:432.00px;font-size:7.55px;line-height:10px;color:#b3b0ab;font-weight:normal;">Dispositivos: 25 (Página 1/2)</div>
<div class="t" style="left:512.40px;top:432.20px;font-size:7.6px;line-height:10px;color:#b5b2ad;font-weight:normal;">&lt;&lt; &lt; <b style="color:#555">1</b> 2 &gt; &gt;&gt;</div>
<div class="t" style="left:347.00px;top:445.10px;font-size:7.5px;line-height:10px;color:#6a6866;font-weight:normal;">Track Circuits Condition</div>
<svg style="left:724.5px;top:446px" width="9" height="8" viewBox="0 0 9 8"><path d="M0.5,0.5 L0.5,7.5 L5,7.5 M0.5,0.5 L3.5,0.5 M2.2,4 L8.2,4 M6.4,2.2 L8.2,4 L6.4,5.8" stroke="#d2c6c2" stroke-width="1.3" fill="none"/></svg>
<div class="r" style="left:346.50px;top:457.10px;width:25.30px;height:22.70px;background:#322d28;"></div>
<div class="t" style="left:159.15px;width:400px;text-align:center;top:463.65px;font-size:7px;line-height:10px;color:#f2f0ec;font-weight:bold;">#</div>
<div class="r" style="left:373.30px;top:457.10px;width:77.40px;height:22.70px;background:#322d28;"></div>
<div class="t" style="left:212.00px;width:400px;text-align:center;top:463.65px;font-size:6.85px;line-height:10px;color:#f2f0ec;font-weight:bold;">DISPOSITIVO</div>
<div class="r" style="left:452.50px;top:457.10px;width:66.70px;height:11.20px;background:#322d28;"></div>
<div class="t" style="left:282.85px;width:400px;text-align:center;top:457.90px;font-size:6.9px;line-height:10px;color:#f2f0ec;font-weight:bold;">Q TOTAL</div>
<svg style="left:508.70px;top:460.90px" width="6" height="4" viewBox="0 0 6 4"><path d="M0,3.6 L3,0.3 L6,3.6Z" fill="#f2f0ec"/></svg>
<div class="r" style="left:521.00px;top:457.10px;width:102.30px;height:11.20px;background:#322d28;"></div>
<div class="t" style="left:369.15px;width:400px;text-align:center;top:457.90px;font-size:6.9px;line-height:10px;color:#f2f0ec;font-weight:bold;">Q LIBERACION</div>
<svg style="left:612.80px;top:461.10px" width="6" height="4" viewBox="0 0 6 4"><path d="M0,0.3 L3,3.6 L6,0.3Z" fill="#6e6963"/></svg>
<div class="r" style="left:624.90px;top:457.10px;width:110.40px;height:11.20px;background:#322d28;"></div>
<div class="t" style="left:477.10px;width:400px;text-align:center;top:457.90px;font-size:6.9px;line-height:10px;color:#f2f0ec;font-weight:bold;">Q OCUPACION</div>
<svg style="left:724.80px;top:461.10px" width="6" height="4" viewBox="0 0 6 4"><path d="M0,0.3 L3,3.6 L6,0.3Z" fill="#6e6963"/></svg>
<div class="r" style="left:452.50px;top:469.60px;width:66.70px;height:10.20px;background:#322d28;"></div>
<div class="t" style="left:285.85px;width:400px;text-align:center;top:469.90px;font-size:6.9px;line-height:10px;color:#f2f0ec;font-weight:bold;">VALOR Q</div>
<div class="r" style="left:521.00px;top:469.60px;width:35.10px;height:10.20px;background:#322d28;"></div>
<div class="t" style="left:338.55px;width:400px;text-align:center;top:469.90px;font-size:6.9px;line-height:10px;color:#f2f0ec;font-weight:bold;">VALOR</div>
<div class="r" style="left:557.70px;top:469.60px;width:65.60px;height:10.20px;background:#322d28;"></div>
<div class="t" style="left:390.50px;width:400px;text-align:center;top:469.90px;font-size:6.9px;line-height:10px;color:#f2f0ec;font-weight:bold;">VALOR Q</div>
<div class="r" style="left:624.90px;top:469.60px;width:35.40px;height:10.20px;background:#322d28;"></div>
<div class="t" style="left:442.60px;width:400px;text-align:center;top:469.90px;font-size:6.9px;line-height:10px;color:#f2f0ec;font-weight:bold;">VALOR</div>
<div class="r" style="left:662.10px;top:469.60px;width:73.20px;height:10.20px;background:#322d28;"></div>
<div class="t" style="left:498.70px;width:400px;text-align:center;top:469.90px;font-size:6.9px;line-height:10px;color:#f2f0ec;font-weight:bold;">VALOR Q</div>
<div class="t k" style="left:159.10px;width:400px;text-align:center;top:482.90px;font-size:7.3px;line-height:10px;color:#2a2826;font-weight:normal;">125</div>
<div class="r" style="left:384.75px;top:482.40px;width:8.50px;height:11.00px;background:#10ab95;"></div>
<div class="t" style="left:189.00px;width:400px;text-align:center;top:483.10px;font-size:6.6px;line-height:10px;color:#d9f4ee;font-weight:bold;">W</div>
<div class="t k" style="left:396.25px;top:482.90px;font-size:6.55px;line-height:10px;color:#262422;font-weight:normal;">AGDTC22RX2</div>
<div class="t k" style="left:459.38px;top:483.80px;font-size:7.4px;line-height:10px;color:#1e1c1a;font-weight:normal;">82</div>
<svg style="left:470.72px;top:483.85px;color:#7ed86a" width="42" height="9"><use href="#sf" x="0.00" y="0" width="8" height="8"/><use href="#sf" x="8.43" y="0" width="8" height="8"/><use href="#sf" x="16.86" y="0" width="8" height="8"/><use href="#sf" x="25.29" y="0" width="8" height="8"/><use href="#sh" x="33.72" y="0" width="8" height="8"/></svg>
<div class="t k" style="left:338.50px;width:400px;text-align:center;top:482.90px;font-size:7.3px;line-height:10px;color:#2a2826;font-weight:normal;">1.34</div>
<div class="t k" style="left:564.03px;top:483.80px;font-size:7.4px;line-height:10px;color:#1e1c1a;font-weight:normal;">83</div>
<svg style="left:575.37px;top:483.85px;color:#7ed86a" width="42" height="9"><use href="#sf" x="0.00" y="0" width="8" height="8"/><use href="#sf" x="8.43" y="0" width="8" height="8"/><use href="#sf" x="16.86" y="0" width="8" height="8"/><use href="#sf" x="25.29" y="0" width="8" height="8"/><use href="#sh" x="33.72" y="0" width="8" height="8"/></svg>
<div class="t k" style="left:442.60px;width:400px;text-align:center;top:482.90px;font-size:7.3px;line-height:10px;color:#2a2826;font-weight:normal;">0.49</div>
<div class="t k" style="left:672.23px;top:483.80px;font-size:7.4px;line-height:10px;color:#1e1c1a;font-weight:normal;">82</div>
<svg style="left:683.57px;top:483.85px;color:#7ed86a" width="42" height="9"><use href="#sf" x="0.00" y="0" width="8" height="8"/><use href="#sf" x="8.43" y="0" width="8" height="8"/><use href="#sf" x="16.86" y="0" width="8" height="8"/><use href="#sf" x="25.29" y="0" width="8" height="8"/><use href="#sh" x="33.72" y="0" width="8" height="8"/></svg>
<div class="t k" style="left:159.10px;width:400px;text-align:center;top:498.00px;font-size:7.3px;line-height:10px;color:#2a2826;font-weight:normal;">124</div>
<div class="r" style="left:384.75px;top:497.50px;width:8.50px;height:11.00px;background:#10ab95;"></div>
<div class="t" style="left:189.00px;width:400px;text-align:center;top:498.20px;font-size:6.6px;line-height:10px;color:#d9f4ee;font-weight:bold;">W</div>
<div class="t k" style="left:396.25px;top:498.00px;font-size:6.55px;line-height:10px;color:#262422;font-weight:normal;">AGDTC25RX2</div>
<div class="t k" style="left:459.38px;top:498.90px;font-size:7.4px;line-height:10px;color:#1e1c1a;font-weight:normal;">86</div>
<svg style="left:470.72px;top:498.95px;color:#7ed86a" width="42" height="9"><use href="#sf" x="0.00" y="0" width="8" height="8"/><use href="#sf" x="8.43" y="0" width="8" height="8"/><use href="#sf" x="16.86" y="0" width="8" height="8"/><use href="#sf" x="25.29" y="0" width="8" height="8"/><use href="#sh" x="33.72" y="0" width="8" height="8"/></svg>
<div class="t k" style="left:338.50px;width:400px;text-align:center;top:498.00px;font-size:7.3px;line-height:10px;color:#2a2826;font-weight:normal;">1.45</div>
<div class="t k" style="left:564.03px;top:498.90px;font-size:7.4px;line-height:10px;color:#1e1c1a;font-weight:normal;">81</div>
<svg style="left:575.37px;top:498.95px;color:#7ed86a" width="42" height="9"><use href="#sf" x="0.00" y="0" width="8" height="8"/><use href="#sf" x="8.43" y="0" width="8" height="8"/><use href="#sf" x="16.86" y="0" width="8" height="8"/><use href="#sf" x="25.29" y="0" width="8" height="8"/><use href="#sh" x="33.72" y="0" width="8" height="8"/></svg>
<div class="t k" style="left:442.60px;width:400px;text-align:center;top:498.00px;font-size:7.3px;line-height:10px;color:#2a2826;font-weight:normal;">0.23</div>
<div class="t k" style="left:672.23px;top:498.90px;font-size:7.4px;line-height:10px;color:#1e1c1a;font-weight:normal;">92</div>
<svg style="left:683.57px;top:498.95px;color:#7ed86a" width="42" height="9"><use href="#sf" x="0.00" y="0" width="8" height="8"/><use href="#sf" x="8.43" y="0" width="8" height="8"/><use href="#sf" x="16.86" y="0" width="8" height="8"/><use href="#sf" x="25.29" y="0" width="8" height="8"/><use href="#sh" x="33.72" y="0" width="8" height="8"/></svg>
<div class="t k" style="left:159.10px;width:400px;text-align:center;top:513.10px;font-size:7.3px;line-height:10px;color:#2a2826;font-weight:normal;">123</div>
<div class="r" style="left:391.20px;top:512.60px;width:8.50px;height:11.00px;background:#10ab95;"></div>
<div class="t" style="left:195.45px;width:400px;text-align:center;top:513.30px;font-size:6.6px;line-height:10px;color:#d9f4ee;font-weight:bold;">W</div>
<div class="t k" style="left:402.70px;top:513.10px;font-size:6.55px;line-height:10px;color:#262422;font-weight:normal;">AGDTC26</div>
<div class="t k" style="left:459.38px;top:514.00px;font-size:7.4px;line-height:10px;color:#1e1c1a;font-weight:normal;">88</div>
<svg style="left:470.72px;top:514.05px;color:#7ed86a" width="42" height="9"><use href="#sf" x="0.00" y="0" width="8" height="8"/><use href="#sf" x="8.43" y="0" width="8" height="8"/><use href="#sf" x="16.86" y="0" width="8" height="8"/><use href="#sf" x="25.29" y="0" width="8" height="8"/><use href="#sh" x="33.72" y="0" width="8" height="8"/></svg>
<div class="t k" style="left:338.50px;width:400px;text-align:center;top:513.10px;font-size:7.3px;line-height:10px;color:#2a2826;font-weight:normal;">0.88</div>
<div class="t k" style="left:564.03px;top:514.00px;font-size:7.4px;line-height:10px;color:#1e1c1a;font-weight:normal;">89</div>
<svg style="left:575.37px;top:514.05px;color:#7ed86a" width="42" height="9"><use href="#sf" x="0.00" y="0" width="8" height="8"/><use href="#sf" x="8.43" y="0" width="8" height="8"/><use href="#sf" x="16.86" y="0" width="8" height="8"/><use href="#sf" x="25.29" y="0" width="8" height="8"/><use href="#sh" x="33.72" y="0" width="8" height="8"/></svg>
<div class="t k" style="left:442.60px;width:400px;text-align:center;top:513.10px;font-size:7.3px;line-height:10px;color:#2a2826;font-weight:normal;">0.33</div>
<div class="t k" style="left:672.23px;top:514.00px;font-size:7.4px;line-height:10px;color:#1e1c1a;font-weight:normal;">88</div>
<svg style="left:683.57px;top:514.05px;color:#7ed86a" width="42" height="9"><use href="#sf" x="0.00" y="0" width="8" height="8"/><use href="#sf" x="8.43" y="0" width="8" height="8"/><use href="#sf" x="16.86" y="0" width="8" height="8"/><use href="#sf" x="25.29" y="0" width="8" height="8"/><use href="#sh" x="33.72" y="0" width="8" height="8"/></svg>
<div class="t k" style="left:159.10px;width:400px;text-align:center;top:528.20px;font-size:7.3px;line-height:10px;color:#2a2826;font-weight:normal;">122</div>
<div class="r" style="left:384.75px;top:527.70px;width:8.50px;height:11.00px;background:#10ab95;"></div>
<div class="t" style="left:189.00px;width:400px;text-align:center;top:528.40px;font-size:6.6px;line-height:10px;color:#d9f4ee;font-weight:bold;">W</div>
<div class="t k" style="left:396.25px;top:528.20px;font-size:6.55px;line-height:10px;color:#262422;font-weight:normal;">AGDTC24RX1</div>
<div class="t k" style="left:459.38px;top:529.10px;font-size:7.4px;line-height:10px;color:#1e1c1a;font-weight:normal;">89</div>
<svg style="left:470.72px;top:529.15px;color:#7ed86a" width="42" height="9"><use href="#sf" x="0.00" y="0" width="8" height="8"/><use href="#sf" x="8.43" y="0" width="8" height="8"/><use href="#sf" x="16.86" y="0" width="8" height="8"/><use href="#sf" x="25.29" y="0" width="8" height="8"/><use href="#sh" x="33.72" y="0" width="8" height="8"/></svg>
<div class="t k" style="left:338.50px;width:400px;text-align:center;top:528.20px;font-size:7.3px;line-height:10px;color:#2a2826;font-weight:normal;">0.60</div>
<div class="t k" style="left:564.03px;top:529.10px;font-size:7.4px;line-height:10px;color:#1e1c1a;font-weight:normal;">92</div>
<svg style="left:575.37px;top:529.15px;color:#7ed86a" width="42" height="9"><use href="#sf" x="0.00" y="0" width="8" height="8"/><use href="#sf" x="8.43" y="0" width="8" height="8"/><use href="#sf" x="16.86" y="0" width="8" height="8"/><use href="#sf" x="25.29" y="0" width="8" height="8"/><use href="#sh" x="33.72" y="0" width="8" height="8"/></svg>
<div class="t k" style="left:442.60px;width:400px;text-align:center;top:528.20px;font-size:7.3px;line-height:10px;color:#2a2826;font-weight:normal;">0.40</div>
<div class="t k" style="left:672.23px;top:529.10px;font-size:7.4px;line-height:10px;color:#1e1c1a;font-weight:normal;">86</div>
<svg style="left:683.57px;top:529.15px;color:#7ed86a" width="42" height="9"><use href="#sf" x="0.00" y="0" width="8" height="8"/><use href="#sf" x="8.43" y="0" width="8" height="8"/><use href="#sf" x="16.86" y="0" width="8" height="8"/><use href="#sf" x="25.29" y="0" width="8" height="8"/><use href="#sh" x="33.72" y="0" width="8" height="8"/></svg>
<div class="t k" style="left:159.10px;width:400px;text-align:center;top:543.30px;font-size:7.3px;line-height:10px;color:#2a2826;font-weight:normal;">121</div>
<div class="r" style="left:393.35px;top:542.80px;width:8.50px;height:11.00px;background:#10ab95;"></div>
<div class="t" style="left:197.60px;width:400px;text-align:center;top:543.50px;font-size:6.6px;line-height:10px;color:#d9f4ee;font-weight:bold;">W</div>
<div class="t k" style="left:404.85px;top:543.30px;font-size:6.55px;line-height:10px;color:#262422;font-weight:normal;">WGTC03</div>
<div class="t k" style="left:459.38px;top:544.20px;font-size:7.4px;line-height:10px;color:#1e1c1a;font-weight:normal;">89</div>
<svg style="left:470.72px;top:544.25px;color:#7ed86a" width="42" height="9"><use href="#sf" x="0.00" y="0" width="8" height="8"/><use href="#sf" x="8.43" y="0" width="8" height="8"/><use href="#sf" x="16.86" y="0" width="8" height="8"/><use href="#sf" x="25.29" y="0" width="8" height="8"/><use href="#sh" x="33.72" y="0" width="8" height="8"/></svg>
<div class="t k" style="left:338.50px;width:400px;text-align:center;top:543.30px;font-size:7.3px;line-height:10px;color:#2a2826;font-weight:normal;">1.62</div>
<div class="t k" style="left:564.03px;top:544.20px;font-size:7.4px;line-height:10px;color:#1e1c1a;font-weight:normal;">79</div>
<svg style="left:575.37px;top:544.25px;color:#b6bf14" width="42" height="9"><use href="#sf" x="0.00" y="0" width="8" height="8"/><use href="#sf" x="8.43" y="0" width="8" height="8"/><use href="#sf" x="16.86" y="0" width="8" height="8"/><use href="#sh" x="25.29" y="0" width="8" height="8"/><use href="#se" x="33.72" y="0" width="8" height="8"/></svg>
<div class="t k" style="left:442.60px;width:400px;text-align:center;top:543.30px;font-size:7.3px;line-height:10px;color:#2a2826;font-weight:normal;">0.01</div>
<div class="t k" style="left:670.17px;top:544.20px;font-size:7.4px;line-height:10px;color:#1e1c1a;font-weight:normal;">100</div>
<svg style="left:685.63px;top:544.25px;color:#3f7d3f" width="42" height="9"><use href="#sf" x="0.00" y="0" width="8" height="8"/><use href="#sf" x="8.43" y="0" width="8" height="8"/><use href="#sf" x="16.86" y="0" width="8" height="8"/><use href="#sf" x="25.29" y="0" width="8" height="8"/><use href="#sf" x="33.72" y="0" width="8" height="8"/></svg>
<div class="t k" style="left:159.10px;width:400px;text-align:center;top:558.40px;font-size:7.3px;line-height:10px;color:#2a2826;font-weight:normal;">120</div>
<div class="r" style="left:384.75px;top:557.90px;width:8.50px;height:11.00px;background:#10ab95;"></div>
<div class="t" style="left:189.00px;width:400px;text-align:center;top:558.60px;font-size:6.6px;line-height:10px;color:#d9f4ee;font-weight:bold;">W</div>
<div class="t k" style="left:396.25px;top:558.40px;font-size:6.55px;line-height:10px;color:#262422;font-weight:normal;">AGDTC24RX2</div>
<div class="t k" style="left:459.38px;top:559.30px;font-size:7.4px;line-height:10px;color:#1e1c1a;font-weight:normal;">89</div>
<svg style="left:470.72px;top:559.35px;color:#7ed86a" width="42" height="9"><use href="#sf" x="0.00" y="0" width="8" height="8"/><use href="#sf" x="8.43" y="0" width="8" height="8"/><use href="#sf" x="16.86" y="0" width="8" height="8"/><use href="#sf" x="25.29" y="0" width="8" height="8"/><use href="#sh" x="33.72" y="0" width="8" height="8"/></svg>
<div class="t k" style="left:338.50px;width:400px;text-align:center;top:558.40px;font-size:7.3px;line-height:10px;color:#2a2826;font-weight:normal;">0.09</div>
<div class="t k" style="left:564.03px;top:559.30px;font-size:7.4px;line-height:10px;color:#1e1c1a;font-weight:normal;">99</div>
<svg style="left:575.37px;top:559.35px;color:#7ed86a" width="42" height="9"><use href="#sf" x="0.00" y="0" width="8" height="8"/><use href="#sf" x="8.43" y="0" width="8" height="8"/><use href="#sf" x="16.86" y="0" width="8" height="8"/><use href="#sf" x="25.29" y="0" width="8" height="8"/><use href="#sh" x="33.72" y="0" width="8" height="8"/></svg>
<div class="t k" style="left:442.60px;width:400px;text-align:center;top:558.40px;font-size:7.3px;line-height:10px;color:#2a2826;font-weight:normal;">0.56</div>
<div class="t k" style="left:672.23px;top:559.30px;font-size:7.4px;line-height:10px;color:#1e1c1a;font-weight:normal;">80</div>
<svg style="left:683.57px;top:559.35px;color:#7ed86a" width="42" height="9"><use href="#sf" x="0.00" y="0" width="8" height="8"/><use href="#sf" x="8.43" y="0" width="8" height="8"/><use href="#sf" x="16.86" y="0" width="8" height="8"/><use href="#sf" x="25.29" y="0" width="8" height="8"/><use href="#se" x="33.72" y="0" width="8" height="8"/></svg>
<div class="t k" style="left:159.10px;width:400px;text-align:center;top:573.60px;font-size:7.3px;line-height:10px;color:#2a2826;font-weight:normal;">119</div>
<div class="r" style="left:393.35px;top:573.10px;width:8.50px;height:11.00px;background:#10ab95;"></div>
<div class="t" style="left:197.60px;width:400px;text-align:center;top:573.80px;font-size:6.6px;line-height:10px;color:#d9f4ee;font-weight:bold;">W</div>
<div class="t k" style="left:404.85px;top:573.60px;font-size:6.55px;line-height:10px;color:#262422;font-weight:normal;">TGTC15</div>
<div class="t k" style="left:459.38px;top:574.50px;font-size:7.4px;line-height:10px;color:#1e1c1a;font-weight:normal;">90</div>
<svg style="left:470.72px;top:574.55px;color:#7ed86a" width="42" height="9"><use href="#sf" x="0.00" y="0" width="8" height="8"/><use href="#sf" x="8.43" y="0" width="8" height="8"/><use href="#sf" x="16.86" y="0" width="8" height="8"/><use href="#sf" x="25.29" y="0" width="8" height="8"/><use href="#sh" x="33.72" y="0" width="8" height="8"/></svg>
<div class="t k" style="left:338.50px;width:400px;text-align:center;top:573.60px;font-size:7.3px;line-height:10px;color:#2a2826;font-weight:normal;">1.50</div>
<div class="t k" style="left:564.03px;top:574.50px;font-size:7.4px;line-height:10px;color:#1e1c1a;font-weight:normal;">80</div>
<svg style="left:575.37px;top:574.55px;color:#7ed86a" width="42" height="9"><use href="#sf" x="0.00" y="0" width="8" height="8"/><use href="#sf" x="8.43" y="0" width="8" height="8"/><use href="#sf" x="16.86" y="0" width="8" height="8"/><use href="#sf" x="25.29" y="0" width="8" height="8"/><use href="#se" x="33.72" y="0" width="8" height="8"/></svg>
<div class="t k" style="left:442.60px;width:400px;text-align:center;top:573.60px;font-size:7.3px;line-height:10px;color:#2a2826;font-weight:normal;">0.03</div>
<div class="t k" style="left:672.23px;top:574.50px;font-size:7.4px;line-height:10px;color:#1e1c1a;font-weight:normal;">99</div>
<svg style="left:683.57px;top:574.55px;color:#7ed86a" width="42" height="9"><use href="#sf" x="0.00" y="0" width="8" height="8"/><use href="#sf" x="8.43" y="0" width="8" height="8"/><use href="#sf" x="16.86" y="0" width="8" height="8"/><use href="#sf" x="25.29" y="0" width="8" height="8"/><use href="#sh" x="33.72" y="0" width="8" height="8"/></svg>
<div class="t k" style="left:159.10px;width:400px;text-align:center;top:588.70px;font-size:7.3px;line-height:10px;color:#2a2826;font-weight:normal;">118</div>
<div class="r" style="left:393.35px;top:588.20px;width:8.50px;height:11.00px;background:#10ab95;"></div>
<div class="t" style="left:197.60px;width:400px;text-align:center;top:588.90px;font-size:6.6px;line-height:10px;color:#d9f4ee;font-weight:bold;">W</div>
<div class="t k" style="left:404.85px;top:588.70px;font-size:6.55px;line-height:10px;color:#262422;font-weight:normal;">TGTC03</div>
<div class="t k" style="left:459.38px;top:589.60px;font-size:7.4px;line-height:10px;color:#1e1c1a;font-weight:normal;">90</div>
<svg style="left:470.72px;top:589.65px;color:#7ed86a" width="42" height="9"><use href="#sf" x="0.00" y="0" width="8" height="8"/><use href="#sf" x="8.43" y="0" width="8" height="8"/><use href="#sf" x="16.86" y="0" width="8" height="8"/><use href="#sf" x="25.29" y="0" width="8" height="8"/><use href="#sh" x="33.72" y="0" width="8" height="8"/></svg>
<div class="t k" style="left:338.50px;width:400px;text-align:center;top:588.70px;font-size:7.3px;line-height:10px;color:#2a2826;font-weight:normal;">0.68</div>
<div class="t k" style="left:564.03px;top:589.60px;font-size:7.4px;line-height:10px;color:#1e1c1a;font-weight:normal;">91</div>
<svg style="left:575.37px;top:589.65px;color:#7ed86a" width="42" height="9"><use href="#sf" x="0.00" y="0" width="8" height="8"/><use href="#sf" x="8.43" y="0" width="8" height="8"/><use href="#sf" x="16.86" y="0" width="8" height="8"/><use href="#sf" x="25.29" y="0" width="8" height="8"/><use href="#sh" x="33.72" y="0" width="8" height="8"/></svg>
<div class="t k" style="left:442.60px;width:400px;text-align:center;top:588.70px;font-size:7.3px;line-height:10px;color:#2a2826;font-weight:normal;">0.31</div>
<div class="t k" style="left:672.23px;top:589.60px;font-size:7.4px;line-height:10px;color:#1e1c1a;font-weight:normal;">89</div>
<svg style="left:683.57px;top:589.65px;color:#7ed86a" width="42" height="9"><use href="#sf" x="0.00" y="0" width="8" height="8"/><use href="#sf" x="8.43" y="0" width="8" height="8"/><use href="#sf" x="16.86" y="0" width="8" height="8"/><use href="#sf" x="25.29" y="0" width="8" height="8"/><use href="#sh" x="33.72" y="0" width="8" height="8"/></svg>
<div class="t k" style="left:159.10px;width:400px;text-align:center;top:603.70px;font-size:7.3px;line-height:10px;color:#2a2826;font-weight:normal;">117</div>
<div class="r" style="left:393.35px;top:603.20px;width:8.50px;height:11.00px;background:#10ab95;"></div>
<div class="t" style="left:197.60px;width:400px;text-align:center;top:603.90px;font-size:6.6px;line-height:10px;color:#d9f4ee;font-weight:bold;">W</div>
<div class="t k" style="left:404.85px;top:603.70px;font-size:6.55px;line-height:10px;color:#262422;font-weight:normal;">TGTC39</div>
<div class="t k" style="left:459.38px;top:604.60px;font-size:7.4px;line-height:10px;color:#1e1c1a;font-weight:normal;">91</div>
<svg style="left:470.72px;top:604.65px;color:#7ed86a" width="42" height="9"><use href="#sf" x="0.00" y="0" width="8" height="8"/><use href="#sf" x="8.43" y="0" width="8" height="8"/><use href="#sf" x="16.86" y="0" width="8" height="8"/><use href="#sf" x="25.29" y="0" width="8" height="8"/><use href="#sh" x="33.72" y="0" width="8" height="8"/></svg>
<div class="t k" style="left:338.50px;width:400px;text-align:center;top:603.70px;font-size:7.3px;line-height:10px;color:#2a2826;font-weight:normal;">1.19</div>
<div class="t k" style="left:564.03px;top:604.60px;font-size:7.4px;line-height:10px;color:#1e1c1a;font-weight:normal;">84</div>
<svg style="left:575.37px;top:604.65px;color:#7ed86a" width="42" height="9"><use href="#sf" x="0.00" y="0" width="8" height="8"/><use href="#sf" x="8.43" y="0" width="8" height="8"/><use href="#sf" x="16.86" y="0" width="8" height="8"/><use href="#sf" x="25.29" y="0" width="8" height="8"/><use href="#sh" x="33.72" y="0" width="8" height="8"/></svg>
<div class="t k" style="left:442.60px;width:400px;text-align:center;top:603.70px;font-size:7.3px;line-height:10px;color:#2a2826;font-weight:normal;">0.09</div>
<div class="t k" style="left:672.23px;top:604.60px;font-size:7.4px;line-height:10px;color:#1e1c1a;font-weight:normal;">97</div>
<svg style="left:683.57px;top:604.65px;color:#7ed86a" width="42" height="9"><use href="#sf" x="0.00" y="0" width="8" height="8"/><use href="#sf" x="8.43" y="0" width="8" height="8"/><use href="#sf" x="16.86" y="0" width="8" height="8"/><use href="#sf" x="25.29" y="0" width="8" height="8"/><use href="#sh" x="33.72" y="0" width="8" height="8"/></svg>
<div class="t k" style="left:159.10px;width:400px;text-align:center;top:619.70px;font-size:7.3px;line-height:10px;color:#2a2826;font-weight:normal;">116</div>
<div class="r" style="left:393.35px;top:619.20px;width:8.50px;height:11.00px;background:#10ab95;"></div>
<div class="t" style="left:197.60px;width:400px;text-align:center;top:619.90px;font-size:6.6px;line-height:10px;color:#d9f4ee;font-weight:bold;">W</div>
<div class="t k" style="left:404.85px;top:619.70px;font-size:6.55px;line-height:10px;color:#262422;font-weight:normal;">RSTC11</div>
<div class="t k" style="left:459.38px;top:620.60px;font-size:7.4px;line-height:10px;color:#1e1c1a;font-weight:normal;">91</div>
<svg style="left:470.72px;top:620.65px;color:#7ed86a" width="42" height="9"><use href="#sf" x="0.00" y="0" width="8" height="8"/><use href="#sf" x="8.43" y="0" width="8" height="8"/><use href="#sf" x="16.86" y="0" width="8" height="8"/><use href="#sf" x="25.29" y="0" width="8" height="8"/><use href="#sh" x="33.72" y="0" width="8" height="8"/></svg>
<div class="t k" style="left:338.50px;width:400px;text-align:center;top:619.70px;font-size:7.3px;line-height:10px;color:#2a2826;font-weight:normal;">0.68</div>
<div class="t k" style="left:564.03px;top:620.60px;font-size:7.4px;line-height:10px;color:#1e1c1a;font-weight:normal;">91</div>
<svg style="left:575.37px;top:620.65px;color:#7ed86a" width="42" height="9"><use href="#sf" x="0.00" y="0" width="8" height="8"/><use href="#sf" x="8.43" y="0" width="8" height="8"/><use href="#sf" x="16.86" y="0" width="8" height="8"/><use href="#sf" x="25.29" y="0" width="8" height="8"/><use href="#sh" x="33.72" y="0" width="8" height="8"/></svg>
<div class="t k" style="left:442.60px;width:400px;text-align:center;top:619.70px;font-size:7.3px;line-height:10px;color:#2a2826;font-weight:normal;">0.23</div>
<div class="t k" style="left:672.23px;top:620.60px;font-size:7.4px;line-height:10px;color:#1e1c1a;font-weight:normal;">92</div>
<svg style="left:683.57px;top:620.65px;color:#7ed86a" width="42" height="9"><use href="#sf" x="0.00" y="0" width="8" height="8"/><use href="#sf" x="8.43" y="0" width="8" height="8"/><use href="#sf" x="16.86" y="0" width="8" height="8"/><use href="#sf" x="25.29" y="0" width="8" height="8"/><use href="#sh" x="33.72" y="0" width="8" height="8"/></svg>
<div class="t k" style="left:159.10px;width:400px;text-align:center;top:635.60px;font-size:7.3px;line-height:10px;color:#2a2826;font-weight:normal;">115</div>
<div class="r" style="left:393.35px;top:635.10px;width:8.50px;height:11.00px;background:#10ab95;"></div>
<div class="t" style="left:197.60px;width:400px;text-align:center;top:635.80px;font-size:6.6px;line-height:10px;color:#d9f4ee;font-weight:bold;">W</div>
<div class="t k" style="left:404.85px;top:635.60px;font-size:6.55px;line-height:10px;color:#262422;font-weight:normal;">COTC01</div>
<div class="t k" style="left:459.38px;top:636.50px;font-size:7.4px;line-height:10px;color:#1e1c1a;font-weight:normal;">92</div>
<svg style="left:470.72px;top:636.55px;color:#7ed86a" width="42" height="9"><use href="#sf" x="0.00" y="0" width="8" height="8"/><use href="#sf" x="8.43" y="0" width="8" height="8"/><use href="#sf" x="16.86" y="0" width="8" height="8"/><use href="#sf" x="25.29" y="0" width="8" height="8"/><use href="#sh" x="33.72" y="0" width="8" height="8"/></svg>
<div class="t k" style="left:338.50px;width:400px;text-align:center;top:635.60px;font-size:7.3px;line-height:10px;color:#2a2826;font-weight:normal;">0.05</div>
<div class="t k" style="left:564.03px;top:636.50px;font-size:7.4px;line-height:10px;color:#1e1c1a;font-weight:normal;">99</div>
<svg style="left:575.37px;top:636.55px;color:#7ed86a" width="42" height="9"><use href="#sf" x="0.00" y="0" width="8" height="8"/><use href="#sf" x="8.43" y="0" width="8" height="8"/><use href="#sf" x="16.86" y="0" width="8" height="8"/><use href="#sf" x="25.29" y="0" width="8" height="8"/><use href="#sh" x="33.72" y="0" width="8" height="8"/></svg>
<div class="t k" style="left:442.60px;width:400px;text-align:center;top:635.60px;font-size:7.3px;line-height:10px;color:#2a2826;font-weight:normal;">0.44</div>
<div class="t k" style="left:672.23px;top:636.50px;font-size:7.4px;line-height:10px;color:#1e1c1a;font-weight:normal;">84</div>
<svg style="left:683.57px;top:636.55px;color:#7ed86a" width="42" height="9"><use href="#sf" x="0.00" y="0" width="8" height="8"/><use href="#sf" x="8.43" y="0" width="8" height="8"/><use href="#sf" x="16.86" y="0" width="8" height="8"/><use href="#sf" x="25.29" y="0" width="8" height="8"/><use href="#sh" x="33.72" y="0" width="8" height="8"/></svg>
<div class="t k" style="left:159.10px;width:400px;text-align:center;top:651.50px;font-size:7.3px;line-height:10px;color:#2a2826;font-weight:normal;">114</div>
<div class="r" style="left:393.35px;top:651.00px;width:8.50px;height:11.00px;background:#10ab95;"></div>
<div class="t" style="left:197.60px;width:400px;text-align:center;top:651.70px;font-size:6.6px;line-height:10px;color:#d9f4ee;font-weight:bold;">W</div>
<div class="t k" style="left:404.85px;top:651.50px;font-size:6.55px;line-height:10px;color:#262422;font-weight:normal;">WGTC28</div>
<div class="t k" style="left:459.38px;top:652.40px;font-size:7.4px;line-height:10px;color:#1e1c1a;font-weight:normal;">92</div>
<svg style="left:470.72px;top:652.45px;color:#7ed86a" width="42" height="9"><use href="#sf" x="0.00" y="0" width="8" height="8"/><use href="#sf" x="8.43" y="0" width="8" height="8"/><use href="#sf" x="16.86" y="0" width="8" height="8"/><use href="#sf" x="25.29" y="0" width="8" height="8"/><use href="#sh" x="33.72" y="0" width="8" height="8"/></svg>
<div class="t k" style="left:338.50px;width:400px;text-align:center;top:651.50px;font-size:7.3px;line-height:10px;color:#2a2826;font-weight:normal;">1.22</div>
<div class="t k" style="left:564.03px;top:652.40px;font-size:7.4px;line-height:10px;color:#1e1c1a;font-weight:normal;">84</div>
<svg style="left:575.37px;top:652.45px;color:#7ed86a" width="42" height="9"><use href="#sf" x="0.00" y="0" width="8" height="8"/><use href="#sf" x="8.43" y="0" width="8" height="8"/><use href="#sf" x="16.86" y="0" width="8" height="8"/><use href="#sf" x="25.29" y="0" width="8" height="8"/><use href="#sh" x="33.72" y="0" width="8" height="8"/></svg>
<div class="t k" style="left:442.60px;width:400px;text-align:center;top:651.50px;font-size:7.3px;line-height:10px;color:#2a2826;font-weight:normal;">0.00</div>
<div class="t k" style="left:670.17px;top:652.40px;font-size:7.4px;line-height:10px;color:#1e1c1a;font-weight:normal;">100</div>
<svg style="left:685.63px;top:652.45px;color:#3f7d3f" width="42" height="9"><use href="#sf" x="0.00" y="0" width="8" height="8"/><use href="#sf" x="8.43" y="0" width="8" height="8"/><use href="#sf" x="16.86" y="0" width="8" height="8"/><use href="#sf" x="25.29" y="0" width="8" height="8"/><use href="#sf" x="33.72" y="0" width="8" height="8"/></svg>
<div class="t k" style="left:159.10px;width:400px;text-align:center;top:667.60px;font-size:7.3px;line-height:10px;color:#2a2826;font-weight:normal;">113</div>
<div class="r" style="left:393.35px;top:667.10px;width:8.50px;height:11.00px;background:#10ab95;"></div>
<div class="t" style="left:197.60px;width:400px;text-align:center;top:667.80px;font-size:6.6px;line-height:10px;color:#d9f4ee;font-weight:bold;">W</div>
<div class="t k" style="left:404.85px;top:667.60px;font-size:6.55px;line-height:10px;color:#262422;font-weight:normal;">WGTC20</div>
<div class="t k" style="left:459.38px;top:668.50px;font-size:7.4px;line-height:10px;color:#1e1c1a;font-weight:normal;">93</div>
<svg style="left:470.72px;top:668.55px;color:#7ed86a" width="42" height="9"><use href="#sf" x="0.00" y="0" width="8" height="8"/><use href="#sf" x="8.43" y="0" width="8" height="8"/><use href="#sf" x="16.86" y="0" width="8" height="8"/><use href="#sf" x="25.29" y="0" width="8" height="8"/><use href="#sh" x="33.72" y="0" width="8" height="8"/></svg>
<div class="t k" style="left:338.50px;width:400px;text-align:center;top:667.60px;font-size:7.3px;line-height:10px;color:#2a2826;font-weight:normal;">0.27</div>
<div class="t k" style="left:564.03px;top:668.50px;font-size:7.4px;line-height:10px;color:#1e1c1a;font-weight:normal;">96</div>
<svg style="left:575.37px;top:668.55px;color:#7ed86a" width="42" height="9"><use href="#sf" x="0.00" y="0" width="8" height="8"/><use href="#sf" x="8.43" y="0" width="8" height="8"/><use href="#sf" x="16.86" y="0" width="8" height="8"/><use href="#sf" x="25.29" y="0" width="8" height="8"/><use href="#sh" x="33.72" y="0" width="8" height="8"/></svg>
<div class="t k" style="left:442.60px;width:400px;text-align:center;top:667.60px;font-size:7.3px;line-height:10px;color:#2a2826;font-weight:normal;">0.31</div>
<div class="t k" style="left:672.23px;top:668.50px;font-size:7.4px;line-height:10px;color:#1e1c1a;font-weight:normal;">89</div>
<svg style="left:683.57px;top:668.55px;color:#7ed86a" width="42" height="9"><use href="#sf" x="0.00" y="0" width="8" height="8"/><use href="#sf" x="8.43" y="0" width="8" height="8"/><use href="#sf" x="16.86" y="0" width="8" height="8"/><use href="#sf" x="25.29" y="0" width="8" height="8"/><use href="#sh" x="33.72" y="0" width="8" height="8"/></svg>
<div class="t k" style="left:159.10px;width:400px;text-align:center;top:683.50px;font-size:7.3px;line-height:10px;color:#2a2826;font-weight:normal;">112</div>
<div class="r" style="left:384.75px;top:683.00px;width:8.50px;height:11.00px;background:#10ab95;"></div>
<div class="t" style="left:189.00px;width:400px;text-align:center;top:683.70px;font-size:6.6px;line-height:10px;color:#d9f4ee;font-weight:bold;">W</div>
<div class="t k" style="left:396.25px;top:683.50px;font-size:6.55px;line-height:10px;color:#262422;font-weight:normal;">AGDTC22RX1</div>
<div class="t k" style="left:459.38px;top:684.40px;font-size:7.4px;line-height:10px;color:#1e1c1a;font-weight:normal;">93</div>
<svg style="left:470.72px;top:684.45px;color:#7ed86a" width="42" height="9"><use href="#sf" x="0.00" y="0" width="8" height="8"/><use href="#sf" x="8.43" y="0" width="8" height="8"/><use href="#sf" x="16.86" y="0" width="8" height="8"/><use href="#sf" x="25.29" y="0" width="8" height="8"/><use href="#sh" x="33.72" y="0" width="8" height="8"/></svg>
<div class="t k" style="left:338.50px;width:400px;text-align:center;top:683.50px;font-size:7.3px;line-height:10px;color:#2a2826;font-weight:normal;">0.51</div>
<div class="t k" style="left:564.03px;top:684.40px;font-size:7.4px;line-height:10px;color:#1e1c1a;font-weight:normal;">93</div>
<svg style="left:575.37px;top:684.45px;color:#7ed86a" width="42" height="9"><use href="#sf" x="0.00" y="0" width="8" height="8"/><use href="#sf" x="8.43" y="0" width="8" height="8"/><use href="#sf" x="16.86" y="0" width="8" height="8"/><use href="#sf" x="25.29" y="0" width="8" height="8"/><use href="#sh" x="33.72" y="0" width="8" height="8"/></svg>
<div class="t k" style="left:442.60px;width:400px;text-align:center;top:683.50px;font-size:7.3px;line-height:10px;color:#2a2826;font-weight:normal;">0.22</div>
<div class="t k" style="left:672.23px;top:684.40px;font-size:7.4px;line-height:10px;color:#1e1c1a;font-weight:normal;">92</div>
<svg style="left:683.57px;top:684.45px;color:#7ed86a" width="42" height="9"><use href="#sf" x="0.00" y="0" width="8" height="8"/><use href="#sf" x="8.43" y="0" width="8" height="8"/><use href="#sf" x="16.86" y="0" width="8" height="8"/><use href="#sf" x="25.29" y="0" width="8" height="8"/><use href="#sh" x="33.72" y="0" width="8" height="8"/></svg>
<div class="t k" style="left:159.10px;width:400px;text-align:center;top:699.40px;font-size:7.3px;line-height:10px;color:#2a2826;font-weight:normal;">111</div>
<div class="r" style="left:393.35px;top:698.90px;width:8.50px;height:11.00px;background:#10ab95;"></div>
<div class="t" style="left:197.60px;width:400px;text-align:center;top:699.60px;font-size:6.6px;line-height:10px;color:#d9f4ee;font-weight:bold;">W</div>
<div class="t k" style="left:404.85px;top:699.40px;font-size:6.55px;line-height:10px;color:#262422;font-weight:normal;">WGTC06</div>
<div class="t k" style="left:459.38px;top:700.30px;font-size:7.4px;line-height:10px;color:#1e1c1a;font-weight:normal;">93</div>
<svg style="left:470.72px;top:700.35px;color:#7ed86a" width="42" height="9"><use href="#sf" x="0.00" y="0" width="8" height="8"/><use href="#sf" x="8.43" y="0" width="8" height="8"/><use href="#sf" x="16.86" y="0" width="8" height="8"/><use href="#sf" x="25.29" y="0" width="8" height="8"/><use href="#sh" x="33.72" y="0" width="8" height="8"/></svg>
<div class="t k" style="left:338.50px;width:400px;text-align:center;top:699.40px;font-size:7.3px;line-height:10px;color:#2a2826;font-weight:normal;">0.71</div>
<div class="t k" style="left:564.03px;top:700.30px;font-size:7.4px;line-height:10px;color:#1e1c1a;font-weight:normal;">91</div>
<svg style="left:575.37px;top:700.35px;color:#7ed86a" width="42" height="9"><use href="#sf" x="0.00" y="0" width="8" height="8"/><use href="#sf" x="8.43" y="0" width="8" height="8"/><use href="#sf" x="16.86" y="0" width="8" height="8"/><use href="#sf" x="25.29" y="0" width="8" height="8"/><use href="#sh" x="33.72" y="0" width="8" height="8"/></svg>
<div class="t k" style="left:442.60px;width:400px;text-align:center;top:699.40px;font-size:7.3px;line-height:10px;color:#2a2826;font-weight:normal;">0.15</div>
<div class="t k" style="left:672.23px;top:700.30px;font-size:7.4px;line-height:10px;color:#1e1c1a;font-weight:normal;">95</div>
<svg style="left:683.57px;top:700.35px;color:#7ed86a" width="42" height="9"><use href="#sf" x="0.00" y="0" width="8" height="8"/><use href="#sf" x="8.43" y="0" width="8" height="8"/><use href="#sf" x="16.86" y="0" width="8" height="8"/><use href="#sf" x="25.29" y="0" width="8" height="8"/><use href="#sh" x="33.72" y="0" width="8" height="8"/></svg>
<div class="r" style="left:372.10px;top:479.80px;width:1.15px;height:233.00px;background:#6e6962;"></div>
<div class="r" style="left:451.00px;top:479.80px;width:1.15px;height:233.00px;background:#6e6962;"></div>
<div class="r" style="left:519.50px;top:479.80px;width:1.15px;height:233.00px;background:#6e6962;"></div>
<div class="r" style="left:623.90px;top:479.80px;width:1.15px;height:233.00px;background:#6e6962;"></div>
<div class="r" style="left:346.00px;top:713.80px;width:389.00px;height:1.00px;background:#c9c7c2;"></div>
<div class="t" style="left:345.20px;top:715.80px;font-size:7.55px;line-height:10px;color:#b3b0ab;font-weight:normal;">Dispositivos: 127 (Página 1/9)</div>
<div class="t" style="left:502.00px;top:716.00px;font-size:7.6px;line-height:10px;color:#b5b2ad;font-weight:normal;">&lt;&lt; &lt; <b style="color:#555">1</b> 2 3 4 5 &gt; &gt;&gt;</div>
<div class="t" style="left:744.30px;top:162.00px;font-size:7.5px;line-height:10px;color:#6a6866;font-weight:normal;">Q graph</div>
<div class="r" style="left:754.70px;top:176.20px;width:7.00px;height:7.00px;background:#524c46;"></div>
<div class="t" style="left:764.40px;top:174.70px;font-size:7.5px;line-height:10px;color:#3a3836;font-weight:normal;">COPM1 - Q Total</div>
<div class="r" style="left:824.30px;top:176.20px;width:7.00px;height:7.00px;background:#15b39c;"></div>
<div class="t" style="left:834.00px;top:174.70px;font-size:7.5px;line-height:10px;color:#3a3836;font-weight:normal;">COPM2 - Q Total</div>
<div class="r" style="left:893.50px;top:176.20px;width:7.00px;height:7.00px;background:#9068dc;"></div>
<div class="t" style="left:903.20px;top:174.70px;font-size:7.5px;line-height:10px;color:#3a3836;font-weight:normal;">COPM3 - Q Total</div>
<div class="r" style="left:963.60px;top:176.20px;width:7.00px;height:7.00px;background:#0f5a8a;"></div>
<div class="t" style="left:973.30px;top:174.70px;font-size:7.5px;line-height:10px;color:#3a3836;font-weight:normal;">COPM4 - Q Total</div>
<svg style="left:0;top:0" width="1536" height="721"><line x1="775" y1="420.70" x2="1292.2" y2="420.70" stroke="#d5d3ce" stroke-width="1"/><line x1="775" y1="420.70" x2="779.5" y2="420.70" stroke="#6a6662" stroke-width="1"/><line x1="775" y1="383.43" x2="1292.2" y2="383.43" stroke="#d5d3ce" stroke-width="1"/><line x1="775" y1="383.43" x2="779.5" y2="383.43" stroke="#6a6662" stroke-width="1"/><line x1="775" y1="346.16" x2="1292.2" y2="346.16" stroke="#d5d3ce" stroke-width="1"/><line x1="775" y1="346.16" x2="779.5" y2="346.16" stroke="#6a6662" stroke-width="1"/><line x1="775" y1="308.89" x2="1292.2" y2="308.89" stroke="#d5d3ce" stroke-width="1"/><line x1="775" y1="308.89" x2="779.5" y2="308.89" stroke="#6a6662" stroke-width="1"/><line x1="775" y1="271.62" x2="1292.2" y2="271.62" stroke="#d5d3ce" stroke-width="1"/><line x1="775" y1="271.62" x2="779.5" y2="271.62" stroke="#6a6662" stroke-width="1"/><line x1="775" y1="234.35" x2="1292.2" y2="234.35" stroke="#d5d3ce" stroke-width="1"/><line x1="775" y1="234.35" x2="779.5" y2="234.35" stroke="#6a6662" stroke-width="1"/><line x1="775" y1="197.08" x2="1292.2" y2="197.08" stroke="#d5d3ce" stroke-width="1"/><line x1="775" y1="197.08" x2="779.5" y2="197.08" stroke="#6a6662" stroke-width="1"/><line x1="838.66" y1="197.08" x2="838.66" y2="421" stroke="#d0cec9" stroke-width="1"/><line x1="897.82" y1="197.08" x2="897.82" y2="421" stroke="#d0cec9" stroke-width="1"/><line x1="956.98" y1="197.08" x2="956.98" y2="421" stroke="#d0cec9" stroke-width="1"/><line x1="1016.14" y1="197.08" x2="1016.14" y2="421" stroke="#d0cec9" stroke-width="1"/><line x1="1075.30" y1="197.08" x2="1075.30" y2="421" stroke="#d0cec9" stroke-width="1"/><line x1="1134.46" y1="197.08" x2="1134.46" y2="421" stroke="#d0cec9" stroke-width="1"/><line x1="1193.62" y1="197.08" x2="1193.62" y2="421" stroke="#d0cec9" stroke-width="1"/><line x1="1252.78" y1="197.08" x2="1252.78" y2="421" stroke="#d0cec9" stroke-width="1"/><line x1="779.50" y1="421" x2="779.50" y2="424.3" stroke="#4a4642" stroke-width="1.1"/><line x1="838.66" y1="421" x2="838.66" y2="424.3" stroke="#4a4642" stroke-width="1.1"/><line x1="897.82" y1="421" x2="897.82" y2="424.3" stroke="#4a4642" stroke-width="1.1"/><line x1="956.98" y1="421" x2="956.98" y2="424.3" stroke="#4a4642" stroke-width="1.1"/><line x1="1016.14" y1="421" x2="1016.14" y2="424.3" stroke="#4a4642" stroke-width="1.1"/><line x1="1075.30" y1="421" x2="1075.30" y2="424.3" stroke="#4a4642" stroke-width="1.1"/><line x1="1134.46" y1="421" x2="1134.46" y2="424.3" stroke="#4a4642" stroke-width="1.1"/><line x1="1193.62" y1="421" x2="1193.62" y2="424.3" stroke="#4a4642" stroke-width="1.1"/><line x1="1252.78" y1="421" x2="1252.78" y2="424.3" stroke="#4a4642" stroke-width="1.1"/><line x1="779.5" y1="196.58" x2="779.5" y2="420.70" stroke="#5a5652" stroke-width="1.3"/><line x1="779" y1="421.2" x2="1292.2" y2="421.2" stroke="#76726d" stroke-width="1.3"/><polyline points="779.50,235.84 799.22,241.06 818.94,239.94 838.66,238.82 858.38,241.06 878.10,242.92 897.82,245.16 917.54,247.77 937.26,250.75 956.98,252.61 976.70,254.48 996.42,255.22 1016.14,255.22 1035.86,253.36 1055.58,252.98 1075.30,251.49 1095.02,251.49 1114.74,252.61 1134.46,251.49 1154.18,251.49 1173.90,252.98 1193.62,253.36 1213.34,253.36 1233.06,253.36 1252.78,252.98 1272.50,252.98 1292.22,253.36" fill="none" stroke="#8c8780" stroke-width="1.3" stroke-linejoin="round"/><polyline points="779.50,292.49 799.22,297.71 818.94,297.71 838.66,280.19 858.38,281.68 878.10,282.43 897.82,282.06 917.54,281.68 937.26,280.94 956.98,281.31 976.70,289.51 996.42,283.17 1016.14,284.29 1035.86,285.04 1055.58,286.16 1075.30,285.78 1095.02,282.43 1114.74,274.23 1134.46,270.13 1154.18,266.77 1173.90,263.79 1193.62,261.18 1213.34,260.44 1233.06,259.69 1252.78,255.97 1272.50,252.24 1292.22,245.16" fill="none" stroke="#5cc6b3" stroke-width="1.3" stroke-linejoin="round"/><polyline points="799.22,404.67 818.94,308.89 838.66,306.09 858.38,302.55 878.10,307.21 897.82,302.00 917.54,302.55 937.26,297.71 956.98,302.00 976.70,303.67 996.42,307.21 1016.14,305.91 1035.86,308.89 1055.58,307.77 1075.30,305.91 1095.02,299.95 1114.74,296.96 1134.46,293.24 1154.18,292.49 1173.90,291.37 1193.62,290.63 1213.34,290.25 1233.06,290.25 1252.78,288.76 1272.50,287.65 1292.22,287.65" fill="none" stroke="#ad8fe6" stroke-width="1.3" stroke-linejoin="round"/><polyline points="799.22,341.69 818.94,261.93 838.66,251.87 858.38,242.92 878.10,242.92 897.82,246.65 917.54,236.96 937.26,228.39 956.98,222.05 976.70,216.83 996.42,213.48 1016.14,211.80 1035.86,211.80 1055.58,212.36 1075.30,211.62 1095.02,216.83 1114.74,217.95 1134.46,219.81 1154.18,223.91 1173.90,221.31 1193.62,219.44 1213.34,221.31 1233.06,216.09 1252.78,217.21 1272.50,217.21 1292.22,216.09" fill="none" stroke="#4a8fbb" stroke-width="1.3" stroke-linejoin="round"/><circle cx="779.50" cy="235.84" r="1.75" fill="#524c46"/><circle cx="799.22" cy="241.06" r="1.75" fill="#524c46"/><circle cx="818.94" cy="239.94" r="1.75" fill="#524c46"/><circle cx="838.66" cy="238.82" r="1.75" fill="#524c46"/><circle cx="858.38" cy="241.06" r="1.75" fill="#524c46"/><circle cx="878.10" cy="242.92" r="1.75" fill="#524c46"/><circle cx="897.82" cy="245.16" r="1.75" fill="#524c46"/><circle cx="917.54" cy="247.77" r="1.75" fill="#524c46"/><circle cx="937.26" cy="250.75" r="1.75" fill="#524c46"/><circle cx="956.98" cy="252.61" r="1.75" fill="#524c46"/><circle cx="976.70" cy="254.48" r="1.75" fill="#524c46"/><circle cx="996.42" cy="255.22" r="1.75" fill="#524c46"/><circle cx="1016.14" cy="255.22" r="1.75" fill="#524c46"/><circle cx="1035.86" cy="253.36" r="1.75" fill="#524c46"/><circle cx="1055.58" cy="252.98" r="1.75" fill="#524c46"/><circle cx="1075.30" cy="251.49" r="1.75" fill="#524c46"/><circle cx="1095.02" cy="251.49" r="1.75" fill="#524c46"/><circle cx="1114.74" cy="252.61" r="1.75" fill="#524c46"/><circle cx="1134.46" cy="251.49" r="1.75" fill="#524c46"/><circle cx="1154.18" cy="251.49" r="1.75" fill="#524c46"/><circle cx="1173.90" cy="252.98" r="1.75" fill="#524c46"/><circle cx="1193.62" cy="253.36" r="1.75" fill="#524c46"/><circle cx="1213.34" cy="253.36" r="1.75" fill="#524c46"/><circle cx="1233.06" cy="253.36" r="1.75" fill="#524c46"/><circle cx="1252.78" cy="252.98" r="1.75" fill="#524c46"/><circle cx="1272.50" cy="252.98" r="1.75" fill="#524c46"/><circle cx="1292.22" cy="253.36" r="1.75" fill="#524c46"/><circle cx="779.50" cy="292.49" r="1.75" fill="#12a893"/><circle cx="799.22" cy="297.71" r="1.75" fill="#12a893"/><circle cx="818.94" cy="297.71" r="1.75" fill="#12a893"/><circle cx="838.66" cy="280.19" r="1.75" fill="#12a893"/><circle cx="858.38" cy="281.68" r="1.75" fill="#12a893"/><circle cx="878.10" cy="282.43" r="1.75" fill="#12a893"/><circle cx="897.82" cy="282.06" r="1.75" fill="#12a893"/><circle cx="917.54" cy="281.68" r="1.75" fill="#12a893"/><circle cx="937.26" cy="280.94" r="1.75" fill="#12a893"/><circle cx="956.98" cy="281.31" r="1.75" fill="#12a893"/><circle cx="976.70" cy="289.51" r="1.75" fill="#12a893"/><circle cx="996.42" cy="283.17" r="1.75" fill="#12a893"/><circle cx="1016.14" cy="284.29" r="1.75" fill="#12a893"/><circle cx="1035.86" cy="285.04" r="1.75" fill="#12a893"/><circle cx="1055.58" cy="286.16" r="1.75" fill="#12a893"/><circle cx="1075.30" cy="285.78" r="1.75" fill="#12a893"/><circle cx="1095.02" cy="282.43" r="1.75" fill="#12a893"/><circle cx="1114.74" cy="274.23" r="1.75" fill="#12a893"/><circle cx="1134.46" cy="270.13" r="1.75" fill="#12a893"/><circle cx="1154.18" cy="266.77" r="1.75" fill="#12a893"/><circle cx="1173.90" cy="263.79" r="1.75" fill="#12a893"/><circle cx="1193.62" cy="261.18" r="1.75" fill="#12a893"/><circle cx="1213.34" cy="260.44" r="1.75" fill="#12a893"/><circle cx="1233.06" cy="259.69" r="1.75" fill="#12a893"/><circle cx="1252.78" cy="255.97" r="1.75" fill="#12a893"/><circle cx="1272.50" cy="252.24" r="1.75" fill="#12a893"/><circle cx="1292.22" cy="245.16" r="1.75" fill="#12a893"/><circle cx="799.22" cy="404.67" r="1.75" fill="#8a5fd6"/><circle cx="818.94" cy="308.89" r="1.75" fill="#8a5fd6"/><circle cx="838.66" cy="306.09" r="1.75" fill="#8a5fd6"/><circle cx="858.38" cy="302.55" r="1.75" fill="#8a5fd6"/><circle cx="878.10" cy="307.21" r="1.75" fill="#8a5fd6"/><circle cx="897.82" cy="302.00" r="1.75" fill="#8a5fd6"/><circle cx="917.54" cy="302.55" r="1.75" fill="#8a5fd6"/><circle cx="937.26" cy="297.71" r="1.75" fill="#8a5fd6"/><circle cx="956.98" cy="302.00" r="1.75" fill="#8a5fd6"/><circle cx="976.70" cy="303.67" r="1.75" fill="#8a5fd6"/><circle cx="996.42" cy="307.21" r="1.75" fill="#8a5fd6"/><circle cx="1016.14" cy="305.91" r="1.75" fill="#8a5fd6"/><circle cx="1035.86" cy="308.89" r="1.75" fill="#8a5fd6"/><circle cx="1055.58" cy="307.77" r="1.75" fill="#8a5fd6"/><circle cx="1075.30" cy="305.91" r="1.75" fill="#8a5fd6"/><circle cx="1095.02" cy="299.95" r="1.75" fill="#8a5fd6"/><circle cx="1114.74" cy="296.96" r="1.75" fill="#8a5fd6"/><circle cx="1134.46" cy="293.24" r="1.75" fill="#8a5fd6"/><circle cx="1154.18" cy="292.49" r="1.75" fill="#8a5fd6"/><circle cx="1173.90" cy="291.37" r="1.75" fill="#8a5fd6"/><circle cx="1193.62" cy="290.63" r="1.75" fill="#8a5fd6"/><circle cx="1213.34" cy="290.25" r="1.75" fill="#8a5fd6"/><circle cx="1233.06" cy="290.25" r="1.75" fill="#8a5fd6"/><circle cx="1252.78" cy="288.76" r="1.75" fill="#8a5fd6"/><circle cx="1272.50" cy="287.65" r="1.75" fill="#8a5fd6"/><circle cx="1292.22" cy="287.65" r="1.75" fill="#8a5fd6"/><circle cx="799.22" cy="341.69" r="1.75" fill="#0e5a8c"/><circle cx="818.94" cy="261.93" r="1.75" fill="#0e5a8c"/><circle cx="838.66" cy="251.87" r="1.75" fill="#0e5a8c"/><circle cx="858.38" cy="242.92" r="1.75" fill="#0e5a8c"/><circle cx="878.10" cy="242.92" r="1.75" fill="#0e5a8c"/><circle cx="897.82" cy="246.65" r="1.75" fill="#0e5a8c"/><circle cx="917.54" cy="236.96" r="1.75" fill="#0e5a8c"/><circle cx="937.26" cy="228.39" r="1.75" fill="#0e5a8c"/><circle cx="956.98" cy="222.05" r="1.75" fill="#0e5a8c"/><circle cx="976.70" cy="216.83" r="1.75" fill="#0e5a8c"/><circle cx="996.42" cy="213.48" r="1.75" fill="#0e5a8c"/><circle cx="1016.14" cy="211.80" r="1.75" fill="#0e5a8c"/><circle cx="1035.86" cy="211.80" r="1.75" fill="#0e5a8c"/><circle cx="1055.58" cy="212.36" r="1.75" fill="#0e5a8c"/><circle cx="1075.30" cy="211.62" r="1.75" fill="#0e5a8c"/><circle cx="1095.02" cy="216.83" r="1.75" fill="#0e5a8c"/><circle cx="1114.74" cy="217.95" r="1.75" fill="#0e5a8c"/><circle cx="1134.46" cy="219.81" r="1.75" fill="#0e5a8c"/><circle cx="1154.18" cy="223.91" r="1.75" fill="#0e5a8c"/><circle cx="1173.90" cy="221.31" r="1.75" fill="#0e5a8c"/><circle cx="1193.62" cy="219.44" r="1.75" fill="#0e5a8c"/><circle cx="1213.34" cy="221.31" r="1.75" fill="#0e5a8c"/><circle cx="1233.06" cy="216.09" r="1.75" fill="#0e5a8c"/><circle cx="1252.78" cy="217.21" r="1.75" fill="#0e5a8c"/><circle cx="1272.50" cy="217.21" r="1.75" fill="#0e5a8c"/><circle cx="1292.22" cy="216.09" r="1.75" fill="#0e5a8c"/></svg>
<div class="t" style="left:372.40px;width:400px;text-align:right;top:415.70px;font-size:7.8px;line-height:10px;color:#4a4846;font-weight:normal;">30.00</div>
<div class="t" style="left:372.40px;width:400px;text-align:right;top:378.43px;font-size:7.8px;line-height:10px;color:#4a4846;font-weight:normal;">40.00</div>
<div class="t" style="left:372.40px;width:400px;text-align:right;top:341.16px;font-size:7.8px;line-height:10px;color:#4a4846;font-weight:normal;">50.00</div>
<div class="t" style="left:372.40px;width:400px;text-align:right;top:303.89px;font-size:7.8px;line-height:10px;color:#4a4846;font-weight:normal;">60.00</div>
<div class="t" style="left:372.40px;width:400px;text-align:right;top:266.62px;font-size:7.8px;line-height:10px;color:#4a4846;font-weight:normal;">70.00</div>
<div class="t" style="left:372.40px;width:400px;text-align:right;top:229.35px;font-size:7.8px;line-height:10px;color:#4a4846;font-weight:normal;">80.00</div>
<div class="t" style="left:372.40px;width:400px;text-align:right;top:192.08px;font-size:7.8px;line-height:10px;color:#4a4846;font-weight:normal;">90.00</div>
<div class="t" style="left:781.60px;top:425.60px;font-size:7.7px;line-height:10px;color:#4a4846;font-weight:normal;">Sep 16</div>
<div class="t" style="left:840.76px;top:425.60px;font-size:7.7px;line-height:10px;color:#4a4846;font-weight:normal;">Sep 19</div>
<div class="t" style="left:899.92px;top:425.60px;font-size:7.7px;line-height:10px;color:#4a4846;font-weight:normal;">Sep 22</div>
<div class="t" style="left:959.08px;top:425.60px;font-size:7.7px;line-height:10px;color:#4a4846;font-weight:normal;">Sep 25</div>
<div class="t" style="left:1018.24px;top:425.60px;font-size:7.7px;line-height:10px;color:#4a4846;font-weight:normal;">Sep 28</div>
<div class="t" style="left:1077.40px;top:425.60px;font-size:7.7px;line-height:10px;color:#4a4846;font-weight:normal;"><b>Oct</b></div>
<div class="t" style="left:1136.56px;top:425.60px;font-size:7.7px;line-height:10px;color:#4a4846;font-weight:normal;">Oct 04</div>
<div class="t" style="left:1195.72px;top:425.60px;font-size:7.7px;line-height:10px;color:#4a4846;font-weight:normal;">Oct 07</div>
<div class="t" style="left:1254.88px;top:425.60px;font-size:7.7px;line-height:10px;color:#4a4846;font-weight:normal;">Oct 10</div>
<div class="t" style="left:6.20px;top:389.70px;font-size:7.55px;line-height:10px;color:#6a6866;font-weight:normal;">Alarms by PM Type</div>
<svg style="left:0;top:0" width="360" height="721"><line x1="35" y1="634.90" x2="313.5" y2="634.90" stroke="#d0cec9" stroke-width="1"/><line x1="35" y1="602.70" x2="313.5" y2="602.70" stroke="#d0cec9" stroke-width="1"/><line x1="35" y1="570.50" x2="313.5" y2="570.50" stroke="#d0cec9" stroke-width="1"/><line x1="35" y1="538.30" x2="313.5" y2="538.30" stroke="#d0cec9" stroke-width="1"/><line x1="35" y1="506.10" x2="313.5" y2="506.10" stroke="#d0cec9" stroke-width="1"/><line x1="35" y1="473.90" x2="313.5" y2="473.90" stroke="#d0cec9" stroke-width="1"/><line x1="35" y1="441.70" x2="313.5" y2="441.70" stroke="#d0cec9" stroke-width="1"/><line x1="35" y1="409.50" x2="313.5" y2="409.50" stroke="#d0cec9" stroke-width="1"/><line x1="35" y1="409.50" x2="35" y2="634.90" stroke="#d0cec9" stroke-width="1"/><line x1="174.2" y1="409.50" x2="174.2" y2="634.90" stroke="#d0cec9" stroke-width="1"/><line x1="313.5" y1="409.50" x2="313.5" y2="634.90" stroke="#d0cec9" stroke-width="1"/><rect x="52.7" y="428.82" width="30.30" height="206.08" fill="#524c46"/><rect x="90" y="422.38" width="30.30" height="212.52" fill="#0fac97"/><rect x="126.8" y="628.27" width="30.40" height="6.63" fill="#8e64d6"/><rect x="192" y="570.50" width="30.20" height="64.40" fill="#524c46"/><rect x="229" y="576.94" width="30.40" height="57.96" fill="#0fac97"/><rect x="266.4" y="629.10" width="30.40" height="5.80" fill="#8e64d6"/></svg>
<div class="t" style="left:-132.15px;width:400px;text-align:center;top:417.22px;font-size:7.4px;line-height:10px;color:#2a2826;font-weight:normal;">32.00</div>
<div class="t" style="left:-94.85px;width:400px;text-align:center;top:410.78px;font-size:7.4px;line-height:10px;color:#2a2826;font-weight:normal;">33.00</div>
<div class="t" style="left:-58.00px;width:400px;text-align:center;top:616.67px;font-size:7.4px;line-height:10px;color:#2a2826;font-weight:normal;">1.03</div>
<div class="t" style="left:7.10px;width:400px;text-align:center;top:558.90px;font-size:7.4px;line-height:10px;color:#2a2826;font-weight:normal;">10.00</div>
<div class="t" style="left:44.20px;width:400px;text-align:center;top:565.34px;font-size:7.4px;line-height:10px;color:#2a2826;font-weight:normal;">9.00</div>
<div class="t" style="left:81.60px;width:400px;text-align:center;top:617.50px;font-size:7.4px;line-height:10px;color:#2a2826;font-weight:normal;">0.90</div>
<div class="t" style="left:-371.20px;width:400px;text-align:right;top:630.20px;font-size:7.3px;line-height:10px;color:#2a2826;font-weight:normal;">0</div>
<div class="t" style="left:-371.20px;width:400px;text-align:right;top:598.00px;font-size:7.3px;line-height:10px;color:#2a2826;font-weight:normal;">5</div>
<div class="t" style="left:-371.20px;width:400px;text-align:right;top:565.80px;font-size:7.3px;line-height:10px;color:#2a2826;font-weight:normal;">10</div>
<div class="t" style="left:-371.20px;width:400px;text-align:right;top:533.60px;font-size:7.3px;line-height:10px;color:#2a2826;font-weight:normal;">15</div>
<div class="t" style="left:-371.20px;width:400px;text-align:right;top:501.40px;font-size:7.3px;line-height:10px;color:#2a2826;font-weight:normal;">20</div>
<div class="t" style="left:-371.20px;width:400px;text-align:right;top:469.20px;font-size:7.3px;line-height:10px;color:#2a2826;font-weight:normal;">25</div>
<div class="t" style="left:-371.20px;width:400px;text-align:right;top:437.00px;font-size:7.3px;line-height:10px;color:#2a2826;font-weight:normal;">30</div>
<div class="t" style="left:-371.20px;width:400px;text-align:right;top:404.80px;font-size:7.3px;line-height:10px;color:#2a2826;font-weight:normal;">35</div>
<div class="t" style="left:-95.00px;width:400px;text-align:center;top:639.90px;font-size:7.1px;line-height:10px;color:#2e2c2a;font-weight:normal;">Single-Phase AC</div>
<div class="t" style="left:43.50px;width:400px;text-align:center;top:639.90px;font-size:7.1px;line-height:10px;color:#2e2c2a;font-weight:normal;">Three-Phase AC</div>
<div class="r" style="left:77.90px;top:662.30px;width:15.00px;height:15.00px;background:#524c46;border-radius:2px;"></div>
<div class="t" style="left:96.10px;top:665.00px;font-size:7.3px;line-height:10px;color:#2e2c2a;font-weight:normal;">Motores</div>
<div class="r" style="left:133.40px;top:662.30px;width:15.00px;height:15.00px;background:#0fac97;border-radius:2px;"></div>
<div class="t" style="left:151.60px;top:665.00px;font-size:7.3px;line-height:10px;color:#2e2c2a;font-weight:normal;">Alarmas</div>
<div class="r" style="left:189.00px;top:662.30px;width:15.00px;height:15.00px;background:#8e64d6;border-radius:2px;"></div>
<div class="t" style="left:207.20px;top:665.00px;font-size:7.3px;line-height:10px;color:#2e2c2a;font-weight:normal;">Alrm/Mot</div>
<div class="r" style="left:6.00px;top:712.90px;width:323.00px;height:1.00px;background:#c9c7c2;"></div>
<div class="t" style="left:17.20px;top:715.50px;font-size:7.4px;line-height:10px;color:#b5b2ad;font-weight:normal;">Alarmas:</div>
<div class="t" style="left:48.50px;top:715.50px;font-size:7.4px;line-height:10px;color:#b5b2ad;font-weight:normal;">Maniobras,</div>
<div class="t" style="left:84.70px;top:715.50px;font-size:7.4px;line-height:10px;color:#b5b2ad;font-weight:normal;">Diurnas,</div>
<div class="t" style="left:111.00px;top:715.50px;font-size:7.4px;line-height:10px;color:#b5b2ad;font-weight:normal;">,</div>
<div class="t" style="left:119.00px;top:715.50px;font-size:7.4px;line-height:10px;color:#b5b2ad;font-weight:normal;">Últimos 365 días</div>
<div class="t" style="left:744.20px;top:445.20px;font-size:7.5px;line-height:10px;color:#6a6866;font-weight:normal;">Last Alarms</div>
<div class="r" style="left:742.80px;top:458.00px;width:562.00px;height:10.60px;background:#b04a5a;"></div>
<div class="t" style="left:745.40px;top:458.50px;font-size:7.4px;line-height:10px;color:#faf2f2;font-weight:bold;">Tipo de alarma</div>
<div class="t" style="left:903.60px;top:458.50px;font-size:7.4px;line-height:10px;color:#faf2f2;font-weight:bold;">Origen</div>
<div class="t" style="left:1000.00px;top:458.50px;font-size:7.4px;line-height:10px;color:#faf2f2;font-weight:bold;">Fecha Inicial</div>
<div class="t" style="left:1096.90px;top:458.50px;font-size:7.4px;line-height:10px;color:#faf2f2;font-weight:bold;">Últ. desactivación</div>
<div class="t" style="left:1195.40px;top:458.50px;font-size:7.4px;line-height:10px;color:#faf2f2;font-weight:bold;">Ocurrencias</div>
<div class="t" style="left:1072.50px;width:400px;text-align:center;top:458.50px;font-size:7.4px;line-height:10px;color:#faf2f2;font-weight:bold;">A</div>
<div class="t" style="left:1094.60px;width:400px;text-align:center;top:458.50px;font-size:7.4px;line-height:10px;color:#faf2f2;font-weight:bold;">R</div>
<div class="r" style="left:742.80px;top:468.60px;width:562.00px;height:16.40px;background:#ff6b80;"></div>
<div class="t k" style="left:747.70px;top:471.80px;font-size:7.6px;line-height:10px;color:#86303f;font-weight:normal;">Inactividad DAEN</div>
<div class="t k" style="left:907.00px;top:471.80px;font-size:7.8px;line-height:10px;color:#86303f;font-weight:normal;">100576</div>
<div class="t k" style="left:1003.00px;top:471.80px;font-size:8.1px;line-height:10px;color:#86303f;font-weight:normal;">07/10/20 08:15</div>
<div class="t k" style="left:1101.00px;top:471.80px;font-size:7.6px;line-height:10px;color:#86303f;font-weight:normal;">-</div>
<div class="t k" style="left:1199.80px;top:471.80px;font-size:7.8px;line-height:10px;color:#86303f;font-weight:normal;">2</div>
<svg style="left:1265.30px;top:471.20px" width="12" height="11" viewBox="0 0 12 11"><path d="M6,0.4 L11.6,10.4 L0.4,10.4 Z" fill="#ac4556" stroke="#ac4556" stroke-width="0.6" stroke-linejoin="round"/><rect x="5.15" y="3.3" width="1.7" height="4" fill="#ff6b80"/><rect x="5.15" y="8" width="1.7" height="1.5" fill="#ff6b80"/></svg>
<svg style="left:1287.00px;top:471.20px" width="13" height="11" viewBox="0 0 13 11"><path d="M1.0,5.5 Q6.6,-0.4 12.1,5.5 Q6.6,11.4 1.0,5.5 Z" fill="none" stroke="#ac4556" stroke-width="1.8"/><circle cx="7.0" cy="5.0" r="2.5" fill="#ac4556"/><circle cx="7.7" cy="3.9" r="0.95" fill="#ff6b80"/><path d="M2.9,0.4 L9.9,10.7" stroke="#ff6b80" stroke-width="2.5"/><path d="M2.9,0.4 L9.9,10.7" stroke="#ac4556" stroke-width="1.5"/></svg>
<div class="r" style="left:742.80px;top:485.00px;width:562.00px;height:16.00px;background:#b9a0ff;"></div>
<div class="t k" style="left:747.70px;top:488.00px;font-size:7.6px;line-height:10px;color:#8c68d8;font-weight:normal;">Inactividad DAEN</div>
<div class="t k" style="left:907.00px;top:488.00px;font-size:7.8px;line-height:10px;color:#8c68d8;font-weight:normal;">150015</div>
<div class="t k" style="left:1003.00px;top:488.00px;font-size:8.1px;line-height:10px;color:#8c68d8;font-weight:normal;">09/10/20 04:00</div>
<div class="t k" style="left:1101.00px;top:488.00px;font-size:7.6px;line-height:10px;color:#8c68d8;font-weight:normal;">-</div>
<div class="t k" style="left:1199.80px;top:488.00px;font-size:7.8px;line-height:10px;color:#8c68d8;font-weight:normal;">1</div>
<svg style="left:1265.30px;top:487.40px" width="12" height="11" viewBox="0 0 12 11"><path d="M6,0.4 L11.6,10.4 L0.4,10.4 Z" fill="#c23c4e" stroke="#c23c4e" stroke-width="0.6" stroke-linejoin="round"/><rect x="5.15" y="3.3" width="1.7" height="4" fill="#b9a0ff"/><rect x="5.15" y="8" width="1.7" height="1.5" fill="#b9a0ff"/></svg>
<svg style="left:1287.00px;top:487.40px" width="13" height="11" viewBox="0 0 13 11"><path d="M1.0,5.5 Q6.6,-0.4 12.1,5.5 Q6.6,11.4 1.0,5.5 Z" fill="none" stroke="#c23c4e" stroke-width="1.8"/><circle cx="7.0" cy="5.0" r="2.5" fill="#c23c4e"/><circle cx="7.7" cy="3.9" r="0.95" fill="#b9a0ff"/><path d="M2.9,0.4 L9.9,10.7" stroke="#b9a0ff" stroke-width="2.5"/><path d="M2.9,0.4 L9.9,10.7" stroke="#c23c4e" stroke-width="1.5"/></svg>
<div class="r" style="left:742.80px;top:501.00px;width:562.00px;height:16.00px;background:#b9a0ff;"></div>
<div class="t k" style="left:747.70px;top:504.00px;font-size:7.6px;line-height:10px;color:#8c68d8;font-weight:normal;">Inactividad DAEN</div>
<div class="t k" style="left:907.00px;top:504.00px;font-size:7.8px;line-height:10px;color:#8c68d8;font-weight:normal;">150008</div>
<div class="t k" style="left:1003.00px;top:504.00px;font-size:8.1px;line-height:10px;color:#8c68d8;font-weight:normal;">09/10/20 04:00</div>
<div class="t k" style="left:1101.00px;top:504.00px;font-size:7.6px;line-height:10px;color:#8c68d8;font-weight:normal;">-</div>
<div class="t k" style="left:1199.80px;top:504.00px;font-size:7.8px;line-height:10px;color:#8c68d8;font-weight:normal;">1</div>
<svg style="left:1265.30px;top:503.40px" width="12" height="11" viewBox="0 0 12 11"><path d="M6,0.4 L11.6,10.4 L0.4,10.4 Z" fill="#c23c4e" stroke="#c23c4e" stroke-width="0.6" stroke-linejoin="round"/><rect x="5.15" y="3.3" width="1.7" height="4" fill="#b9a0ff"/><rect x="5.15" y="8" width="1.7" height="1.5" fill="#b9a0ff"/></svg>
<svg style="left:1287.00px;top:503.40px" width="13" height="11" viewBox="0 0 13 11"><path d="M1.0,5.5 Q6.6,-0.4 12.1,5.5 Q6.6,11.4 1.0,5.5 Z" fill="none" stroke="#c23c4e" stroke-width="1.8"/><circle cx="7.0" cy="5.0" r="2.5" fill="#c23c4e"/><circle cx="7.7" cy="3.9" r="0.95" fill="#b9a0ff"/><path d="M2.9,0.4 L9.9,10.7" stroke="#b9a0ff" stroke-width="2.5"/><path d="M2.9,0.4 L9.9,10.7" stroke="#c23c4e" stroke-width="1.5"/></svg>
<div class="r" style="left:742.80px;top:517.00px;width:562.00px;height:16.20px;background:#b9a0ff;"></div>
<div class="t k" style="left:747.70px;top:520.10px;font-size:7.6px;line-height:10px;color:#8c68d8;font-weight:normal;">Inactividad DAEN</div>
<div class="t k" style="left:907.00px;top:520.10px;font-size:7.8px;line-height:10px;color:#8c68d8;font-weight:normal;">150010</div>
<div class="t k" style="left:1003.00px;top:520.10px;font-size:8.1px;line-height:10px;color:#8c68d8;font-weight:normal;">09/10/20 04:00</div>
<div class="t k" style="left:1101.00px;top:520.10px;font-size:7.6px;line-height:10px;color:#8c68d8;font-weight:normal;">-</div>
<div class="t k" style="left:1199.80px;top:520.10px;font-size:7.8px;line-height:10px;color:#8c68d8;font-weight:normal;">1</div>
<svg style="left:1265.30px;top:519.50px" width="12" height="11" viewBox="0 0 12 11"><path d="M6,0.4 L11.6,10.4 L0.4,10.4 Z" fill="#c23c4e" stroke="#c23c4e" stroke-width="0.6" stroke-linejoin="round"/><rect x="5.15" y="3.3" width="1.7" height="4" fill="#b9a0ff"/><rect x="5.15" y="8" width="1.7" height="1.5" fill="#b9a0ff"/></svg>
<svg style="left:1287.00px;top:519.50px" width="13" height="11" viewBox="0 0 13 11"><path d="M1.0,5.5 Q6.6,-0.4 12.1,5.5 Q6.6,11.4 1.0,5.5 Z" fill="none" stroke="#c23c4e" stroke-width="1.8"/><circle cx="7.0" cy="5.0" r="2.5" fill="#c23c4e"/><circle cx="7.7" cy="3.9" r="0.95" fill="#b9a0ff"/><path d="M2.9,0.4 L9.9,10.7" stroke="#b9a0ff" stroke-width="2.5"/><path d="M2.9,0.4 L9.9,10.7" stroke="#c23c4e" stroke-width="1.5"/></svg>
<div class="r" style="left:742.80px;top:533.20px;width:562.00px;height:16.00px;background:#ff6b80;"></div>
<div class="t k" style="left:747.70px;top:536.20px;font-size:7.6px;line-height:10px;color:#86303f;font-weight:normal;">Inactividad DAEN</div>
<div class="t k" style="left:907.00px;top:536.20px;font-size:7.8px;line-height:10px;color:#86303f;font-weight:normal;">100337</div>
<div class="t k" style="left:1003.00px;top:536.20px;font-size:8.1px;line-height:10px;color:#86303f;font-weight:normal;">09/10/20 18:00</div>
<div class="t k" style="left:1101.00px;top:536.20px;font-size:7.6px;line-height:10px;color:#86303f;font-weight:normal;">-</div>
<div class="t k" style="left:1199.80px;top:536.20px;font-size:7.8px;line-height:10px;color:#86303f;font-weight:normal;">1</div>
<svg style="left:1265.30px;top:535.60px" width="12" height="11" viewBox="0 0 12 11"><path d="M6,0.4 L11.6,10.4 L0.4,10.4 Z" fill="#ac4556" stroke="#ac4556" stroke-width="0.6" stroke-linejoin="round"/><rect x="5.15" y="3.3" width="1.7" height="4" fill="#ff6b80"/><rect x="5.15" y="8" width="1.7" height="1.5" fill="#ff6b80"/></svg>
<svg style="left:1287.00px;top:535.60px" width="13" height="11" viewBox="0 0 13 11"><path d="M1.0,5.5 Q6.6,-0.4 12.1,5.5 Q6.6,11.4 1.0,5.5 Z" fill="none" stroke="#ac4556" stroke-width="1.8"/><circle cx="7.0" cy="5.0" r="2.5" fill="#ac4556"/><circle cx="7.7" cy="3.9" r="0.95" fill="#ff6b80"/><path d="M2.9,0.4 L9.9,10.7" stroke="#ff6b80" stroke-width="2.5"/><path d="M2.9,0.4 L9.9,10.7" stroke="#ac4556" stroke-width="1.5"/></svg>
<div class="r" style="left:742.80px;top:549.20px;width:562.00px;height:16.00px;background:#ff6b80;"></div>
<div class="t k" style="left:747.70px;top:552.20px;font-size:7.6px;line-height:10px;color:#86303f;font-weight:normal;">Inactividad DAEN</div>
<div class="t k" style="left:907.00px;top:552.20px;font-size:7.8px;line-height:10px;color:#86303f;font-weight:normal;">150006</div>
<div class="t k" style="left:1003.00px;top:552.20px;font-size:8.1px;line-height:10px;color:#86303f;font-weight:normal;">10/10/20 07:45</div>
<div class="t k" style="left:1101.00px;top:552.20px;font-size:7.6px;line-height:10px;color:#86303f;font-weight:normal;">-</div>
<div class="t k" style="left:1199.80px;top:552.20px;font-size:7.8px;line-height:10px;color:#86303f;font-weight:normal;">4</div>
<svg style="left:1265.30px;top:551.60px" width="12" height="11" viewBox="0 0 12 11"><path d="M6,0.4 L11.6,10.4 L0.4,10.4 Z" fill="#ac4556" stroke="#ac4556" stroke-width="0.6" stroke-linejoin="round"/><rect x="5.15" y="3.3" width="1.7" height="4" fill="#ff6b80"/><rect x="5.15" y="8" width="1.7" height="1.5" fill="#ff6b80"/></svg>
<svg style="left:1287.00px;top:551.60px" width="13" height="11" viewBox="0 0 13 11"><path d="M1.0,5.5 Q6.6,-0.4 12.1,5.5 Q6.6,11.4 1.0,5.5 Z" fill="none" stroke="#ac4556" stroke-width="1.8"/><circle cx="7.0" cy="5.0" r="2.5" fill="#ac4556"/><circle cx="7.7" cy="3.9" r="0.95" fill="#ff6b80"/><path d="M2.9,0.4 L9.9,10.7" stroke="#ff6b80" stroke-width="2.5"/><path d="M2.9,0.4 L9.9,10.7" stroke="#ac4556" stroke-width="1.5"/></svg>
<div class="r" style="left:742.80px;top:565.20px;width:562.00px;height:16.00px;background:#ff6b80;"></div>
<div class="t k" style="left:747.70px;top:568.20px;font-size:7.6px;line-height:10px;color:#86303f;font-weight:normal;">Inactividad DAEN</div>
<div class="t k" style="left:907.00px;top:568.20px;font-size:7.8px;line-height:10px;color:#86303f;font-weight:normal;">100306</div>
<div class="t k" style="left:1003.00px;top:568.20px;font-size:8.1px;line-height:10px;color:#86303f;font-weight:normal;">11/10/20 13:15</div>
<div class="t k" style="left:1101.00px;top:568.20px;font-size:7.6px;line-height:10px;color:#86303f;font-weight:normal;">-</div>
<div class="t k" style="left:1199.80px;top:568.20px;font-size:7.8px;line-height:10px;color:#86303f;font-weight:normal;">1</div>
<svg style="left:1265.30px;top:567.60px" width="12" height="11" viewBox="0 0 12 11"><path d="M6,0.4 L11.6,10.4 L0.4,10.4 Z" fill="#ac4556" stroke="#ac4556" stroke-width="0.6" stroke-linejoin="round"/><rect x="5.15" y="3.3" width="1.7" height="4" fill="#ff6b80"/><rect x="5.15" y="8" width="1.7" height="1.5" fill="#ff6b80"/></svg>
<svg style="left:1287.00px;top:567.60px" width="13" height="11" viewBox="0 0 13 11"><path d="M1.0,5.5 Q6.6,-0.4 12.1,5.5 Q6.6,11.4 1.0,5.5 Z" fill="none" stroke="#ac4556" stroke-width="1.8"/><circle cx="7.0" cy="5.0" r="2.5" fill="#ac4556"/><circle cx="7.7" cy="3.9" r="0.95" fill="#ff6b80"/><path d="M2.9,0.4 L9.9,10.7" stroke="#ff6b80" stroke-width="2.5"/><path d="M2.9,0.4 L9.9,10.7" stroke="#ac4556" stroke-width="1.5"/></svg>
<div class="r" style="left:742.80px;top:581.20px;width:562.00px;height:16.00px;background:#ff6b80;"></div>
<div class="t k" style="left:747.70px;top:584.20px;font-size:7.6px;line-height:10px;color:#86303f;font-weight:normal;">Inactividad DAEN</div>
<div class="t k" style="left:907.00px;top:584.20px;font-size:7.8px;line-height:10px;color:#86303f;font-weight:normal;">6528</div>
<div class="t k" style="left:1003.00px;top:584.20px;font-size:8.1px;line-height:10px;color:#86303f;font-weight:normal;">11/10/20 15:30</div>
<div class="t k" style="left:1101.00px;top:584.20px;font-size:7.6px;line-height:10px;color:#86303f;font-weight:normal;">-</div>
<div class="t k" style="left:1199.80px;top:584.20px;font-size:7.8px;line-height:10px;color:#86303f;font-weight:normal;">1</div>
<svg style="left:1265.30px;top:583.60px" width="12" height="11" viewBox="0 0 12 11"><path d="M6,0.4 L11.6,10.4 L0.4,10.4 Z" fill="#ac4556" stroke="#ac4556" stroke-width="0.6" stroke-linejoin="round"/><rect x="5.15" y="3.3" width="1.7" height="4" fill="#ff6b80"/><rect x="5.15" y="8" width="1.7" height="1.5" fill="#ff6b80"/></svg>
<svg style="left:1287.00px;top:583.60px" width="13" height="11" viewBox="0 0 13 11"><path d="M1.0,5.5 Q6.6,-0.4 12.1,5.5 Q6.6,11.4 1.0,5.5 Z" fill="none" stroke="#ac4556" stroke-width="1.8"/><circle cx="7.0" cy="5.0" r="2.5" fill="#ac4556"/><circle cx="7.7" cy="3.9" r="0.95" fill="#ff6b80"/><path d="M2.9,0.4 L9.9,10.7" stroke="#ff6b80" stroke-width="2.5"/><path d="M2.9,0.4 L9.9,10.7" stroke="#ac4556" stroke-width="1.5"/></svg>
<div class="r" style="left:742.80px;top:597.20px;width:562.00px;height:16.00px;background:#ff6b80;"></div>
<div class="t k" style="left:747.70px;top:600.20px;font-size:7.6px;line-height:10px;color:#86303f;font-weight:normal;">Inactividad DAEN</div>
<div class="t k" style="left:907.00px;top:600.20px;font-size:7.8px;line-height:10px;color:#86303f;font-weight:normal;">131168</div>
<div class="t k" style="left:1003.00px;top:600.20px;font-size:8.1px;line-height:10px;color:#86303f;font-weight:normal;">11/10/20 15:30</div>
<div class="t k" style="left:1101.00px;top:600.20px;font-size:7.6px;line-height:10px;color:#86303f;font-weight:normal;">-</div>
<div class="t k" style="left:1199.80px;top:600.20px;font-size:7.8px;line-height:10px;color:#86303f;font-weight:normal;">2</div>
<svg style="left:1265.30px;top:599.60px" width="12" height="11" viewBox="0 0 12 11"><path d="M6,0.4 L11.6,10.4 L0.4,10.4 Z" fill="#ac4556" stroke="#ac4556" stroke-width="0.6" stroke-linejoin="round"/><rect x="5.15" y="3.3" width="1.7" height="4" fill="#ff6b80"/><rect x="5.15" y="8" width="1.7" height="1.5" fill="#ff6b80"/></svg>
<svg style="left:1287.00px;top:599.60px" width="13" height="11" viewBox="0 0 13 11"><path d="M1.0,5.5 Q6.6,-0.4 12.1,5.5 Q6.6,11.4 1.0,5.5 Z" fill="none" stroke="#ac4556" stroke-width="1.8"/><circle cx="7.0" cy="5.0" r="2.5" fill="#ac4556"/><circle cx="7.7" cy="3.9" r="0.95" fill="#ff6b80"/><path d="M2.9,0.4 L9.9,10.7" stroke="#ff6b80" stroke-width="2.5"/><path d="M2.9,0.4 L9.9,10.7" stroke="#ac4556" stroke-width="1.5"/></svg>
<div class="r" style="left:742.80px;top:613.20px;width:562.00px;height:15.70px;background:#ff6b80;"></div>
<div class="t k" style="left:747.70px;top:616.05px;font-size:7.6px;line-height:10px;color:#86303f;font-weight:normal;">Inactividad DAEN</div>
<div class="t k" style="left:907.00px;top:616.05px;font-size:7.8px;line-height:10px;color:#86303f;font-weight:normal;">169929</div>
<div class="t k" style="left:1003.00px;top:616.05px;font-size:8.1px;line-height:10px;color:#86303f;font-weight:normal;">12/10/20 05:00</div>
<div class="t k" style="left:1101.00px;top:616.05px;font-size:7.6px;line-height:10px;color:#86303f;font-weight:normal;">-</div>
<div class="t k" style="left:1199.80px;top:616.05px;font-size:7.8px;line-height:10px;color:#86303f;font-weight:normal;">2</div>
<svg style="left:1265.30px;top:615.45px" width="12" height="11" viewBox="0 0 12 11"><path d="M6,0.4 L11.6,10.4 L0.4,10.4 Z" fill="#ac4556" stroke="#ac4556" stroke-width="0.6" stroke-linejoin="round"/><rect x="5.15" y="3.3" width="1.7" height="4" fill="#ff6b80"/><rect x="5.15" y="8" width="1.7" height="1.5" fill="#ff6b80"/></svg>
<svg style="left:1287.00px;top:615.45px" width="13" height="11" viewBox="0 0 13 11"><path d="M1.0,5.5 Q6.6,-0.4 12.1,5.5 Q6.6,11.4 1.0,5.5 Z" fill="none" stroke="#ac4556" stroke-width="1.8"/><circle cx="7.0" cy="5.0" r="2.5" fill="#ac4556"/><circle cx="7.7" cy="3.9" r="0.95" fill="#ff6b80"/><path d="M2.9,0.4 L9.9,10.7" stroke="#ff6b80" stroke-width="2.5"/><path d="M2.9,0.4 L9.9,10.7" stroke="#ac4556" stroke-width="1.5"/></svg>
<div class="r" style="left:742.80px;top:628.90px;width:562.00px;height:16.40px;background:#b9a0ff;"></div>
<div class="t k" style="left:747.70px;top:632.10px;font-size:8.0px;line-height:10px;color:#8c68d8;font-weight:normal;">Mantenimiento nocturno</div>
<div class="t k" style="left:907.00px;top:632.10px;font-size:7.8px;line-height:10px;color:#8c68d8;font-weight:normal;">AGPM3</div>
<div class="t k" style="left:1003.00px;top:632.10px;font-size:8.1px;line-height:10px;color:#8c68d8;font-weight:normal;">13/10/20 04:12</div>
<div class="t k" style="left:1101.00px;top:632.10px;font-size:7.6px;line-height:10px;color:#8c68d8;font-weight:normal;">-</div>
<div class="t k" style="left:1199.80px;top:632.10px;font-size:7.8px;line-height:10px;color:#8c68d8;font-weight:normal;">1</div>
<svg style="left:1265.30px;top:631.50px" width="12" height="11" viewBox="0 0 12 11"><path d="M6,0.4 L11.6,10.4 L0.4,10.4 Z" fill="#c23c4e" stroke="#c23c4e" stroke-width="0.6" stroke-linejoin="round"/><rect x="5.15" y="3.3" width="1.7" height="4" fill="#b9a0ff"/><rect x="5.15" y="8" width="1.7" height="1.5" fill="#b9a0ff"/></svg>
<svg style="left:1287.00px;top:631.50px" width="13" height="11" viewBox="0 0 13 11"><path d="M1.0,5.5 Q6.6,-0.4 12.1,5.5 Q6.6,11.4 1.0,5.5 Z" fill="none" stroke="#c23c4e" stroke-width="1.8"/><circle cx="7.0" cy="5.0" r="2.5" fill="#c23c4e"/><circle cx="7.7" cy="3.9" r="0.95" fill="#b9a0ff"/><path d="M2.9,0.4 L9.9,10.7" stroke="#b9a0ff" stroke-width="2.5"/><path d="M2.9,0.4 L9.9,10.7" stroke="#c23c4e" stroke-width="1.5"/></svg>
<div class="r" style="left:742.80px;top:645.30px;width:562.00px;height:16.90px;background:#ffc072;"></div>
<div class="t k" style="left:747.70px;top:648.75px;font-size:7.6px;line-height:10px;color:#b9661c;font-weight:normal;">Fallo ventiladores ECON</div>
<div class="t k" style="left:907.00px;top:648.75px;font-size:7.8px;line-height:10px;color:#b9661c;font-weight:normal;">00204AC57CAB</div>
<div class="t k" style="left:1003.00px;top:648.75px;font-size:8.1px;line-height:10px;color:#b9661c;font-weight:normal;">06/04/20 15:25</div>
<div class="t k" style="left:1101.00px;top:648.75px;font-size:7.6px;line-height:10px;color:#b9661c;font-weight:normal;">-</div>
<div class="t k" style="left:1199.80px;top:648.75px;font-size:7.8px;line-height:10px;color:#b9661c;font-weight:normal;">1</div>
<svg style="left:1265.30px;top:648.15px" width="12" height="11" viewBox="0 0 12 11"><path d="M6,0.4 L11.6,10.4 L0.4,10.4 Z" fill="#b73e52" stroke="#b73e52" stroke-width="0.6" stroke-linejoin="round"/><rect x="5.15" y="3.3" width="1.7" height="4" fill="#ffc072"/><rect x="5.15" y="8" width="1.7" height="1.5" fill="#ffc072"/></svg>
<svg style="left:1287.00px;top:648.15px" width="13" height="11" viewBox="0 0 13 11"><path d="M0.8,5.6 Q6.3,-0.6 11.8,5.6 Q6.3,11.8 0.8,5.6 Z" fill="none" stroke="#d6c6b4" stroke-width="1.5"/><circle cx="6.4" cy="5.6" r="1.5" fill="none" stroke="#d6c6b4" stroke-width="1"/></svg>
<div class="r" style="left:742.80px;top:662.20px;width:562.00px;height:16.80px;background:#ffc072;"></div>
<div class="t k" style="left:747.70px;top:665.60px;font-size:7.6px;line-height:10px;color:#b9661c;font-weight:normal;">Fallo ventiladores ECON</div>
<div class="t k" style="left:907.00px;top:665.60px;font-size:7.8px;line-height:10px;color:#b9661c;font-weight:normal;">00204AF4863E</div>
<div class="t k" style="left:1003.00px;top:665.60px;font-size:8.1px;line-height:10px;color:#b9661c;font-weight:normal;">06/04/20 15:25</div>
<div class="t k" style="left:1101.00px;top:665.60px;font-size:7.6px;line-height:10px;color:#b9661c;font-weight:normal;">-</div>
<div class="t k" style="left:1199.80px;top:665.60px;font-size:7.8px;line-height:10px;color:#b9661c;font-weight:normal;">1</div>
<svg style="left:1265.30px;top:665.00px" width="12" height="11" viewBox="0 0 12 11"><path d="M6,0.4 L11.6,10.4 L0.4,10.4 Z" fill="#b73e52" stroke="#b73e52" stroke-width="0.6" stroke-linejoin="round"/><rect x="5.15" y="3.3" width="1.7" height="4" fill="#ffc072"/><rect x="5.15" y="8" width="1.7" height="1.5" fill="#ffc072"/></svg>
<svg style="left:1287.00px;top:665.00px" width="13" height="11" viewBox="0 0 13 11"><path d="M0.8,5.6 Q6.3,-0.6 11.8,5.6 Q6.3,11.8 0.8,5.6 Z" fill="none" stroke="#d6c6b4" stroke-width="1.5"/><circle cx="6.4" cy="5.6" r="1.5" fill="none" stroke="#d6c6b4" stroke-width="1"/></svg>
<div class="r" style="left:742.80px;top:679.00px;width:562.00px;height:16.90px;background:#ffc072;"></div>
<div class="t k" style="left:747.70px;top:682.45px;font-size:7.6px;line-height:10px;color:#b9661c;font-weight:normal;">Fallo ventiladores ECON</div>
<div class="t k" style="left:907.00px;top:682.45px;font-size:7.8px;line-height:10px;color:#b9661c;font-weight:normal;">00204ADED84D</div>
<div class="t k" style="left:1003.00px;top:682.45px;font-size:8.1px;line-height:10px;color:#b9661c;font-weight:normal;">06/04/20 15:25</div>
<div class="t k" style="left:1101.00px;top:682.45px;font-size:7.6px;line-height:10px;color:#b9661c;font-weight:normal;">-</div>
<div class="t k" style="left:1199.80px;top:682.45px;font-size:7.8px;line-height:10px;color:#b9661c;font-weight:normal;">1</div>
<svg style="left:1265.30px;top:681.85px" width="12" height="11" viewBox="0 0 12 11"><path d="M6,0.4 L11.6,10.4 L0.4,10.4 Z" fill="#b73e52" stroke="#b73e52" stroke-width="0.6" stroke-linejoin="round"/><rect x="5.15" y="3.3" width="1.7" height="4" fill="#ffc072"/><rect x="5.15" y="8" width="1.7" height="1.5" fill="#ffc072"/></svg>
<svg style="left:1287.00px;top:681.85px" width="13" height="11" viewBox="0 0 13 11"><path d="M0.8,5.6 Q6.3,-0.6 11.8,5.6 Q6.3,11.8 0.8,5.6 Z" fill="none" stroke="#d6c6b4" stroke-width="1.5"/><circle cx="6.4" cy="5.6" r="1.5" fill="none" stroke="#d6c6b4" stroke-width="1"/></svg>
<div class="r" style="left:742.80px;top:695.90px;width:562.00px;height:16.90px;background:#ffc072;"></div>
<div class="t k" style="left:747.70px;top:699.35px;font-size:7.6px;line-height:10px;color:#b9661c;font-weight:normal;">Fallo ventiladores ECON</div>
<div class="t k" style="left:907.00px;top:699.35px;font-size:7.8px;line-height:10px;color:#b9661c;font-weight:normal;">00204AC4EF19</div>
<div class="t k" style="left:1003.00px;top:699.35px;font-size:8.1px;line-height:10px;color:#b9661c;font-weight:normal;">06/04/20 15:25</div>
<div class="t k" style="left:1101.00px;top:699.35px;font-size:7.6px;line-height:10px;color:#b9661c;font-weight:normal;">-</div>
<div class="t k" style="left:1199.80px;top:699.35px;font-size:7.8px;line-height:10px;color:#b9661c;font-weight:normal;">1</div>
<svg style="left:1265.30px;top:698.75px" width="12" height="11" viewBox="0 0 12 11"><path d="M6,0.4 L11.6,10.4 L0.4,10.4 Z" fill="#b73e52" stroke="#b73e52" stroke-width="0.6" stroke-linejoin="round"/><rect x="5.15" y="3.3" width="1.7" height="4" fill="#ffc072"/><rect x="5.15" y="8" width="1.7" height="1.5" fill="#ffc072"/></svg>
<svg style="left:1287.00px;top:698.75px" width="13" height="11" viewBox="0 0 13 11"><path d="M0.8,5.6 Q6.3,-0.6 11.8,5.6 Q6.3,11.8 0.8,5.6 Z" fill="none" stroke="#d6c6b4" stroke-width="1.5"/><circle cx="6.4" cy="5.6" r="1.5" fill="none" stroke="#d6c6b4" stroke-width="1"/></svg>
<svg style="left:838.5px;top:633.3px" width="7" height="8" viewBox="0 0 7 8"><path d="M3.5,0.9 L6.1,3.5 M3.5,0.9 L0.9,3.5 M3.5,1.1 L3.5,6.9" stroke="#8c68d8" stroke-width="1.5" fill="none"/></svg>
<div class="t" style="left:748.20px;top:715.30px;font-size:7.6px;line-height:10px;color:#b9b6b1;font-weight:normal;">15/253 alarmas monitorizadas</div>
<div class="t" style="left:1311.90px;top:445.30px;font-size:7.6px;line-height:10px;color:#6a6866;font-weight:normal;">System Information</div>
<div class="r" style="left:1310.00px;top:456.30px;width:165.00px;height:12.60px;background:#322d28;"></div>
<div class="t" style="left:1314.90px;top:457.60px;font-size:7.35px;line-height:10px;color:#f6f4f0;font-weight:bold;">Información de Sistema</div>
<div class="r" style="left:1310.00px;top:468.90px;width:121.00px;height:85.20px;background:#524c46;"></div>
<div class="t" style="left:1314.90px;top:473.90px;font-size:7.25px;line-height:10px;color:#f6f4f0;font-weight:bold;">Agujas Monitorizadas</div>
<div class="t" style="left:1436.20px;top:473.90px;font-size:7.2px;line-height:10px;color:#3a3836;font-weight:normal;">42</div>
<div class="t" style="left:1314.90px;top:495.20px;font-size:7.25px;line-height:10px;color:#f6f4f0;font-weight:bold;">Maniobras día</div>
<div class="t" style="left:1436.20px;top:495.20px;font-size:7.2px;line-height:10px;color:#3a3836;font-weight:normal;">1868</div>
<div class="t" style="left:1314.90px;top:516.30px;font-size:7.25px;line-height:10px;color:#f6f4f0;font-weight:bold;">Maniobras semana</div>
<div class="t" style="left:1436.20px;top:516.30px;font-size:7.2px;line-height:10px;color:#3a3836;font-weight:normal;">16973</div>
<div class="t" style="left:1314.90px;top:537.10px;font-size:7.25px;line-height:10px;color:#f6f4f0;font-weight:bold;">Maniobras mes</div>
<div class="t" style="left:1436.20px;top:537.10px;font-size:7.2px;line-height:10px;color:#3a3836;font-weight:normal;">63261</div>
</body></html>
